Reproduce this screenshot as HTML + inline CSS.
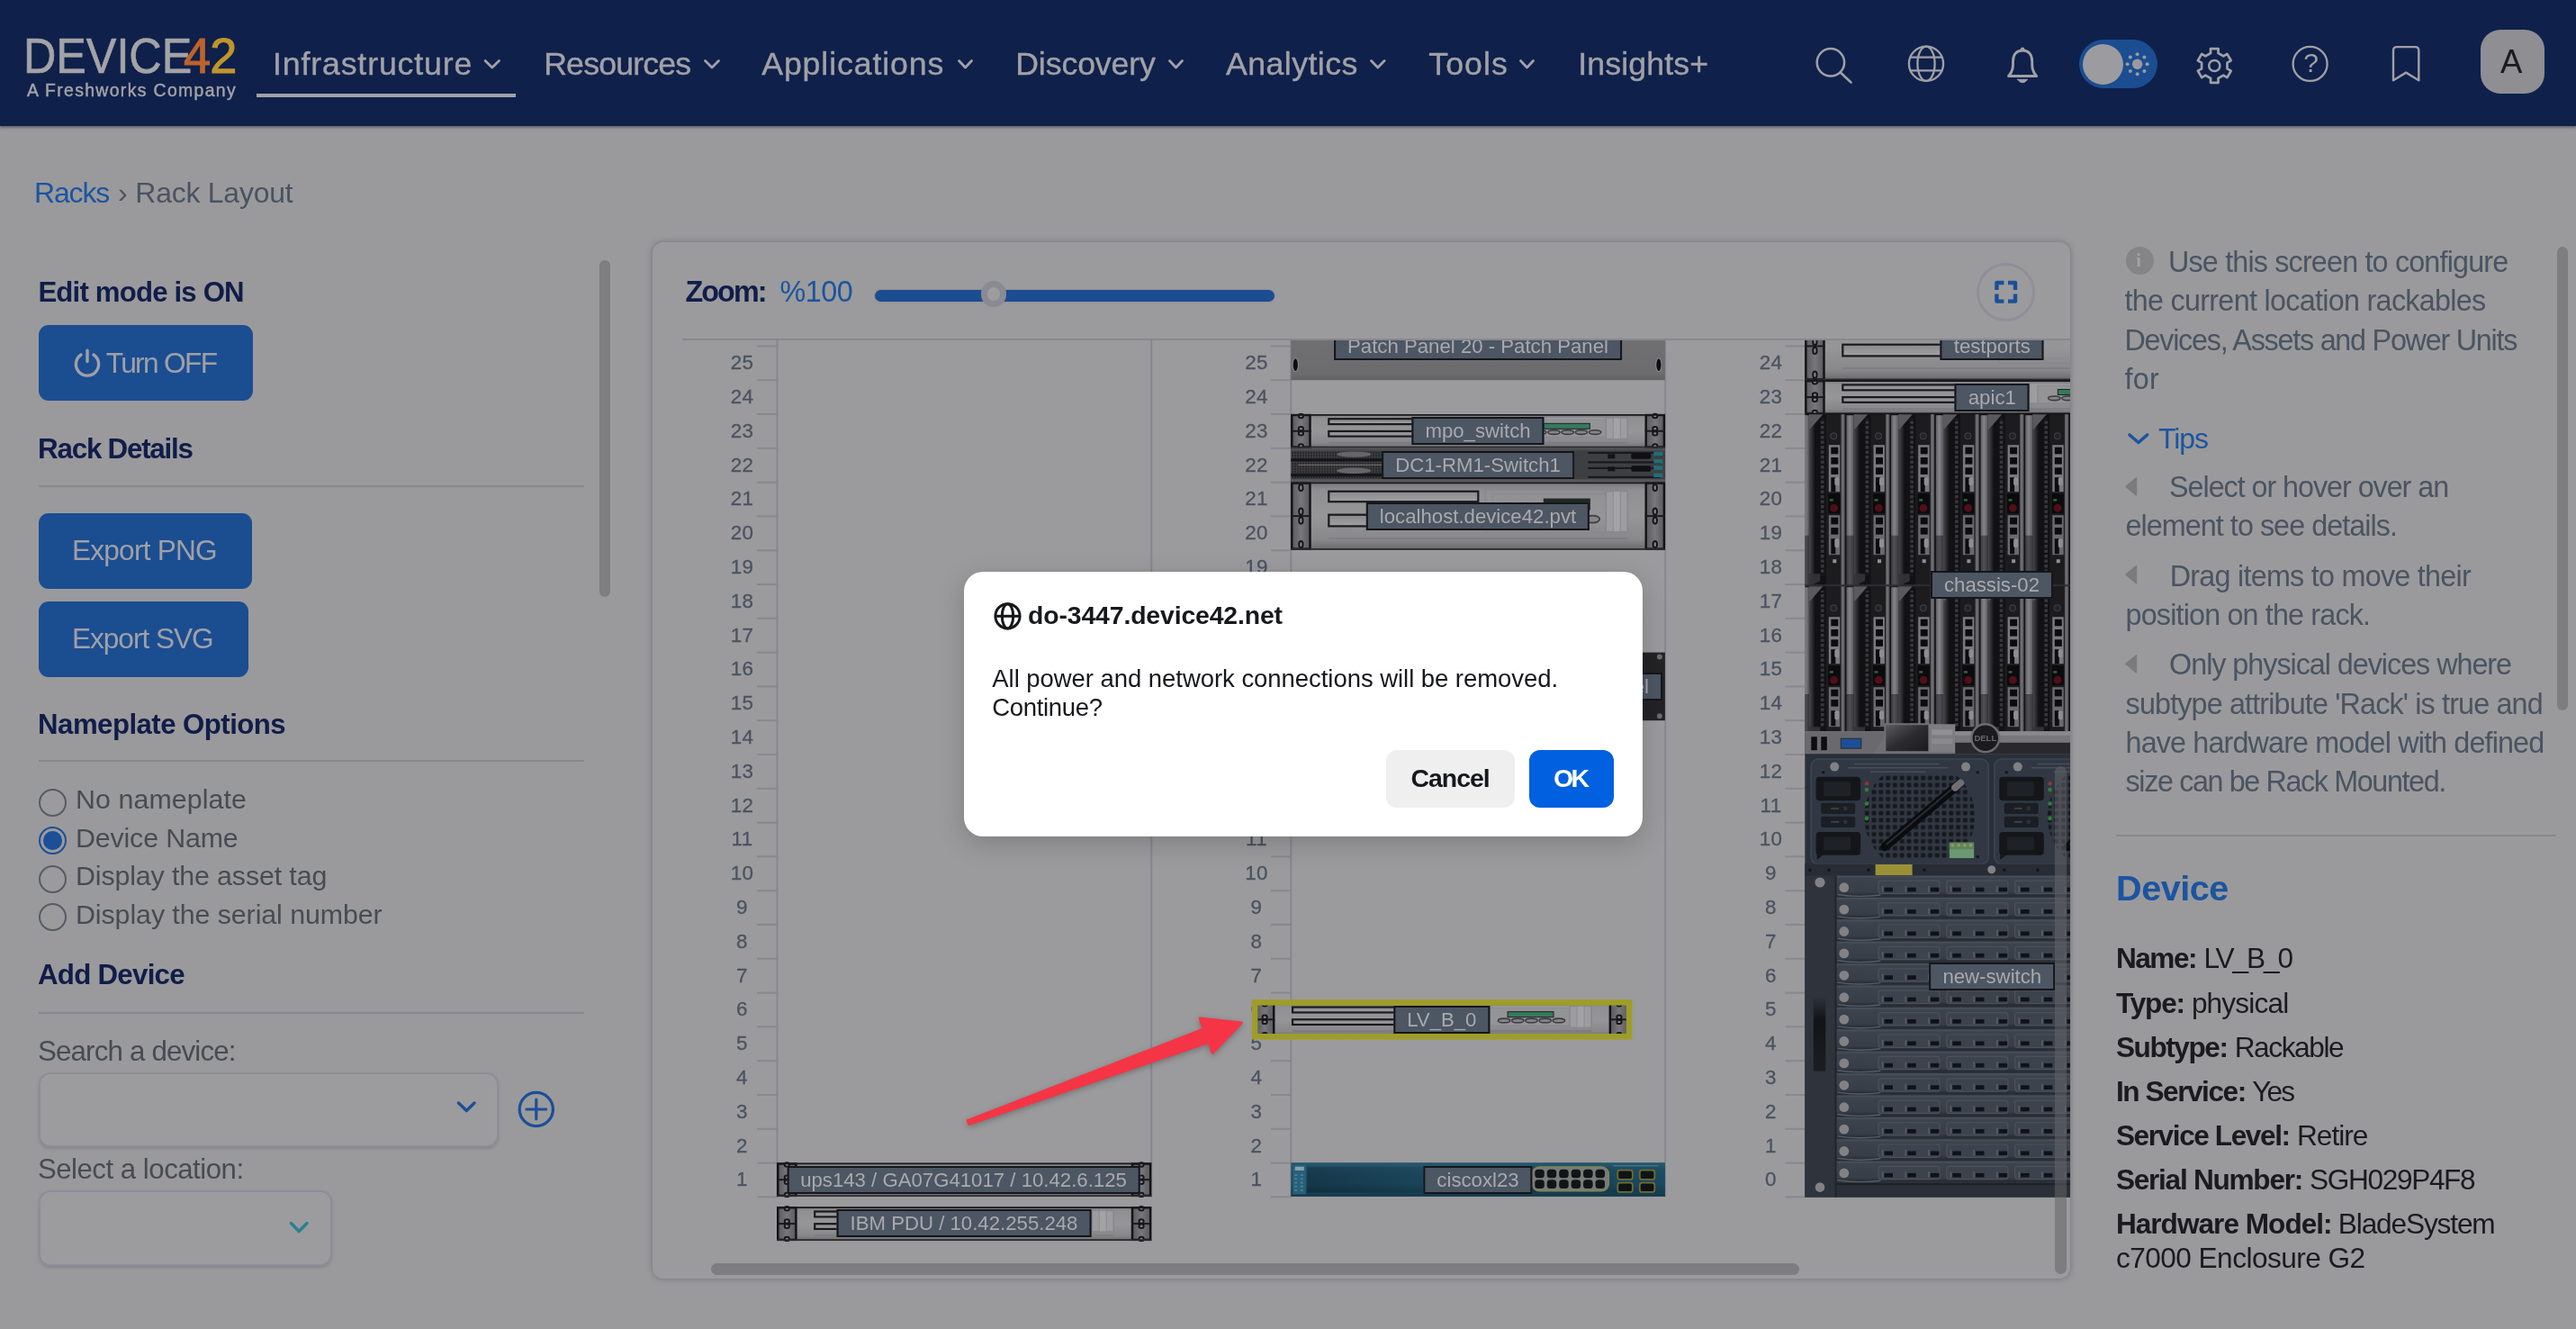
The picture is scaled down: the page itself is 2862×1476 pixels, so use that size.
<!DOCTYPE html>
<html lang="en"><head><meta charset="utf-8"><title>Rack Layout - Device42</title>
<style>
html,body{margin:0;padding:0;overflow:hidden;}
body{width:2862px;height:1476px;overflow:hidden;background:#9a9a9c;font-family:"Liberation Sans",sans-serif;position:relative;}
#root{position:absolute;left:0;top:0;width:2862px;height:1476px;overflow:hidden;will-change:transform;}
.t{position:absolute;white-space:nowrap;line-height:1em;}
.abs{position:absolute;}
svg{position:absolute;overflow:visible;}
.fw{-webkit-text-stroke:.45px #a3a3a7}
.nv{-webkit-text-stroke:.4px #a1a1a6}
.num{-webkit-text-stroke:.3px}

.lbl{position:absolute;height:31px;box-sizing:border-box;border:2px solid #14161a;background:#4d5663;color:#a9a9ad;font-size:22.2px;line-height:28px;padding:0 13px;transform:translateX(-50%);white-space:nowrap;}
.num{position:absolute;width:40px;text-align:center;font-size:22.4px;line-height:22px;letter-spacing:.3px;color:#4a5361;}

</style></head><body>
<div id="root">
<div class="abs" style="left:0;top:0;width:2862px;height:140px;background:#0f204b;box-shadow:0 1.5px 2.5px rgba(55,55,70,.5)"></div>
<div class="abs" id="logo" style="left:26.2px;top:34.6px;font-size:55.5px;line-height:1em;white-space:nowrap;color:#a3a3a7;transform-origin:0 0;transform:scaleX(.906);-webkit-text-stroke:.7px #a3a3a7">DEVICE</div>
<div class="abs" style="left:204.3px;top:34.6px;font-size:55.5px;line-height:1em;white-space:nowrap;transform-origin:0 0;transform:scaleX(.975);letter-spacing:-1px"><span style="color:#bd632c;-webkit-text-stroke:1.1px #bd632c">4</span><span style="color:#c0952a;-webkit-text-stroke:1.1px #c0952a">2</span></div>
<svg style="left:0;top:0" width="1" height="1"><polyline points="539.1,67.5 546.8,75 554.5,67.5" fill="none" stroke="#a1a1a6" stroke-width="2.8" stroke-linecap="round" stroke-linejoin="round"/></svg>
<svg style="left:0;top:0" width="1" height="1"><polyline points="783.5,67.5 791.0,75 798.5,67.5" fill="none" stroke="#a1a1a6" stroke-width="2.8" stroke-linecap="round" stroke-linejoin="round"/></svg>
<svg style="left:0;top:0" width="1" height="1"><polyline points="1065.5,67.5 1072.5,75 1079.5,67.5" fill="none" stroke="#a1a1a6" stroke-width="2.8" stroke-linecap="round" stroke-linejoin="round"/></svg>
<svg style="left:0;top:0" width="1" height="1"><polyline points="1299.5,67.5 1306.5,75 1313.5,67.5" fill="none" stroke="#a1a1a6" stroke-width="2.8" stroke-linecap="round" stroke-linejoin="round"/></svg>
<svg style="left:0;top:0" width="1" height="1"><polyline points="1523.5,67.5 1530.8,75 1538.1,67.5" fill="none" stroke="#a1a1a6" stroke-width="2.8" stroke-linecap="round" stroke-linejoin="round"/></svg>
<svg style="left:0;top:0" width="1" height="1"><polyline points="1689.5,67.5 1696.5,75 1703.5,67.5" fill="none" stroke="#a1a1a6" stroke-width="2.8" stroke-linecap="round" stroke-linejoin="round"/></svg>
<div class="abs" style="left:285px;top:104px;width:288px;height:4px;background:#a3a3a7"></div>
<svg style="left:0;top:0" width="1" height="1" fill="none" stroke="#a0a0a5" stroke-width="2.7" stroke-linecap="round" stroke-linejoin="round">
<!-- search -->
<circle cx="2033.900" cy="69.3" r="15.2" stroke-width="2.5"/><line x1="2045.3" y1="81" x2="2056.500" y2="91.5" stroke-width="2.6"/>
<!-- globe -->
<g stroke-width="2.3"><circle cx="2140" cy="70.8" r="19.1"/><ellipse cx="2140" cy="70.8" rx="9.6" ry="19.1"/><line x1="2123" y1="63.6" x2="2157" y2="63.6"/><line x1="2123" y1="78.4" x2="2157" y2="78.400"/></g>
<!-- bell -->
<path d="M2231.500 84.5 C2237 79 2236.500 73 2236.500 68 C2236.5 60.5 2240.5 56 2247.1 56 C2253.7 56 2257.700 60.5 2257.7 68 C2257.7 73 2257.2 79 2262.700 84.5 Z" stroke-width="2.9"/><circle cx="2247.1" cy="54.800" r="1.6" fill="#a0a0a5" stroke-width="1.5"/><path d="M2241.600 88.3 H2252.600 Q2247.1 95.500 2241.6 88.3 Z" fill="#a0a0a5" stroke-width="1"/>
<!-- gear -->
<circle cx="2460.300" cy="73" r="6.1" stroke-width="2.5"/>
<path d="M2456.1 59.0 L2456.0 54.2 L2464.6 54.2 L2464.5 59.0 L2470.3 62.4 L2474.4 59.9 L2478.7 67.3 L2474.5 69.7 L2474.5 76.3 L2478.7 78.7 L2474.4 86.1 L2470.3 83.6 L2464.5 87.0 L2464.6 91.8 L2456.0 91.8 L2456.1 87.0 L2450.3 83.6 L2446.2 86.1 L2441.9 78.7 L2446.1 76.3 L2446.1 69.7 L2441.9 67.3 L2446.2 59.9 L2450.3 62.4 Z"/>
<!-- help -->
<circle cx="2566.600" cy="70.9" r="19" stroke-width="2.3"/>
<!-- bookmark -->
<path d="M2663 52.100 H2683.300 Q2687.300 52.1 2687.300 56.1 V89.2 L2673.15 80.6 L2659 89.2 V56.1 Q2659 52.1 2663 52.1 Z" stroke-width="2.4"/>
</svg>
<span class="t" style="left:2559.2px;top:54.500px;font-size:30px;color:#a0a0a5;font-weight:400">?</span>
<div class="abs" style="left:2310px;top:44px;width:87px;height:54px;border-radius:27px;background:#1b4d91"></div>
<div class="abs" style="left:2314px;top:48.5px;width:45px;height:45px;border-radius:50%;background:#9c9ca0"></div>
<svg style="left:0;top:0" width="1" height="1" fill="#9a9a9f"><circle cx="2374.600" cy="71.3" r="5.7"/><circle cx="2385.6" cy="71.3" r="2"/><circle cx="2382.4" cy="79.1" r="2"/><circle cx="2374.6" cy="82.3" r="2"/><circle cx="2366.8" cy="79.1" r="2"/><circle cx="2363.6" cy="71.3" r="2"/><circle cx="2366.8" cy="63.5" r="2"/><circle cx="2374.6" cy="60.3" r="2"/><circle cx="2382.4" cy="63.5" r="2"/></svg>
<div class="abs" style="left:2756px;top:32.800px;width:71px;height:71px;border-radius:22px;background:#8e8e93"></div>
<div class="abs" style="left:43px;top:361px;width:238px;height:84px;border-radius:11px;background:#1b4d91"></div>
<svg style="left:0;top:0" width="1" height="1" fill="none" stroke="#9fa0a6" stroke-width="3.4" stroke-linecap="round"><path d="M 90 394 A 12.6 12.6 0 1 0 104 394"/><line x1="97" y1="389.200" x2="97" y2="401.500"/></svg>
<div class="abs" style="left:43px;top:539px;width:606px;height:2px;background:#878791"></div>
<div class="abs" style="left:43px;top:570px;width:237px;height:84px;border-radius:11px;background:#1b4d91"></div>
<div class="abs" style="left:43px;top:668px;width:233px;height:84px;border-radius:11px;background:#1b4d91"></div>
<div class="abs" style="left:665.5px;top:289px;width:12.5px;height:374px;border-radius:6px;background:#7e7e80"></div>
<div class="abs" style="left:43px;top:844px;width:606px;height:2px;background:#878791"></div>
<div class="abs" style="left:43px;top:875.5px;width:31px;height:31px;box-sizing:border-box;border-radius:50%;border:2px solid #565b65;background:#9b9b9d"></div>
<div class="abs" style="left:43px;top:918.0px;width:31px;height:31px;box-sizing:border-box;border-radius:50%;border:2.5px solid #1c4f96;background:#9a9a9c"></div>
<div class="abs" style="left:48.3px;top:923.3px;width:20.400px;height:20.4px;border-radius:50%;background:#1c4f96"></div>
<div class="abs" style="left:43px;top:960.5px;width:31px;height:31px;box-sizing:border-box;border-radius:50%;border:2px solid #565b65;background:#9b9b9d"></div>
<div class="abs" style="left:43px;top:1003.0px;width:31px;height:31px;box-sizing:border-box;border-radius:50%;border:2px solid #565b65;background:#9b9b9d"></div>
<div class="abs" style="left:43px;top:1124.2px;width:606px;height:2px;background:#878791"></div>
<div class="abs" style="left:43px;top:1191px;width:510.5px;height:83px;box-sizing:border-box;border-radius:13px;border:2px solid #8e8e99;background:#9c9c9e;box-shadow:0 2px 3px rgba(80,80,90,.25)"></div>
<svg style="left:0;top:0" width="1" height="1" fill="none" stroke-linecap="round" stroke-linejoin="round" stroke-width="3.4"><polyline points="509.5,1225 518.3,1233.5 527,1225" stroke="#1c4f96"/><circle cx="595.800" cy="1232" r="18.600" stroke="#1c4f96" stroke-width="3.2"/><path d="M585 1232 H606.600 M595.800 1221.2 V1242.800" stroke="#1c4f96" stroke-width="3.2"/></svg>
<div class="abs" style="left:43px;top:1322px;width:326px;height:84px;box-sizing:border-box;border-radius:13px;border:2px solid #8e8e99;background:#9c9c9e;box-shadow:0 2px 3px rgba(80,80,90,.25)"></div>
<svg style="left:0;top:0" width="1" height="1" fill="none" stroke-linecap="round" stroke-linejoin="round" stroke-width="3.4"><polyline points="323.5,1358.5 332.2,1367.5 341,1358.5" stroke="#2a7f92"/></svg>
<div class="abs" style="left:724.5px;top:268.500px;width:1575.5px;height:1151.5px;border-radius:12px;background:#9b9b9d;box-shadow:0 0 6px rgba(70,70,85,.5)"></div>
<div class="abs" style="left:971.7px;top:321.500px;width:444.5px;height:13.7px;border-radius:7px;background:#1b4d91;box-shadow:0 0 2px rgba(120,120,140,.8)"></div>
<div class="abs" style="left:1089.5px;top:312.3px;width:28.4px;height:28.4px;box-sizing:border-box;border-radius:50%;border:7.2px solid #8a8a92;background:#9d9d9f"></div>
<div class="abs" style="left:2196px;top:291.500px;width:65px;height:65px;box-sizing:border-box;border-radius:50%;border:3px solid #8f8f99"></div>
<svg style="left:0;top:0" width="1" height="1" fill="none" stroke="#1c4f96" stroke-width="4.4" stroke-linejoin="round"><path d="M2218.400 322 V314 H2226.400 M2231 314 H2239 V322 M2239 326.600 V334.600 H2231 M2226.4 334.6 H2218.4 V326.6"/></svg>
<div class="abs" style="left:758px;top:376px;width:1542px;height:2px;background:#878791"></div>
<div class="abs" style="left:0;top:0;width:2862px;height:1476px;clip-path:inset(378px 562px 74px 758px)">
<div class="num" style="left:804.5px;top:392.2px">25</div>
<div class="num" style="left:804.5px;top:430.0px">24</div>
<div class="num" style="left:804.5px;top:467.8px">23</div>
<div class="num" style="left:804.5px;top:505.6px">22</div>
<div class="num" style="left:804.5px;top:543.4px">21</div>
<div class="num" style="left:804.5px;top:581.2px">20</div>
<div class="num" style="left:804.5px;top:619.0px">19</div>
<div class="num" style="left:804.5px;top:656.8px">18</div>
<div class="num" style="left:804.5px;top:694.6px">17</div>
<div class="num" style="left:804.5px;top:732.4px">16</div>
<div class="num" style="left:804.5px;top:770.2px">15</div>
<div class="num" style="left:804.5px;top:808.0px">14</div>
<div class="num" style="left:804.5px;top:845.8px">13</div>
<div class="num" style="left:804.5px;top:883.6px">12</div>
<div class="num" style="left:804.5px;top:921.4px">11</div>
<div class="num" style="left:804.5px;top:959.2px">10</div>
<div class="num" style="left:804.5px;top:997.0px">9</div>
<div class="num" style="left:804.5px;top:1034.8px">8</div>
<div class="num" style="left:804.5px;top:1072.6px">7</div>
<div class="num" style="left:804.5px;top:1110.4px">6</div>
<div class="num" style="left:804.5px;top:1148.2px">5</div>
<div class="num" style="left:804.5px;top:1186.0px">4</div>
<div class="num" style="left:804.5px;top:1223.8px">3</div>
<div class="num" style="left:804.5px;top:1261.6px">2</div>
<div class="num" style="left:804.5px;top:1299.4px">1</div>
<div class="num" style="left:1376px;top:392.2px">25</div>
<div class="num" style="left:1376px;top:430.0px">24</div>
<div class="num" style="left:1376px;top:467.8px">23</div>
<div class="num" style="left:1376px;top:505.6px">22</div>
<div class="num" style="left:1376px;top:543.4px">21</div>
<div class="num" style="left:1376px;top:581.2px">20</div>
<div class="num" style="left:1376px;top:619.0px">19</div>
<div class="num" style="left:1376px;top:656.8px">18</div>
<div class="num" style="left:1376px;top:694.6px">17</div>
<div class="num" style="left:1376px;top:732.4px">16</div>
<div class="num" style="left:1376px;top:770.2px">15</div>
<div class="num" style="left:1376px;top:808.0px">14</div>
<div class="num" style="left:1376px;top:845.8px">13</div>
<div class="num" style="left:1376px;top:883.6px">12</div>
<div class="num" style="left:1376px;top:921.4px">11</div>
<div class="num" style="left:1376px;top:959.2px">10</div>
<div class="num" style="left:1376px;top:997.0px">9</div>
<div class="num" style="left:1376px;top:1034.8px">8</div>
<div class="num" style="left:1376px;top:1072.6px">7</div>
<div class="num" style="left:1376px;top:1110.4px">6</div>
<div class="num" style="left:1376px;top:1148.2px">5</div>
<div class="num" style="left:1376px;top:1186.0px">4</div>
<div class="num" style="left:1376px;top:1223.8px">3</div>
<div class="num" style="left:1376px;top:1261.6px">2</div>
<div class="num" style="left:1376px;top:1299.4px">1</div>
<div class="num" style="left:1947.5px;top:392.2px">24</div>
<div class="num" style="left:1947.5px;top:430.0px">23</div>
<div class="num" style="left:1947.5px;top:467.8px">22</div>
<div class="num" style="left:1947.5px;top:505.6px">21</div>
<div class="num" style="left:1947.5px;top:543.4px">20</div>
<div class="num" style="left:1947.5px;top:581.2px">19</div>
<div class="num" style="left:1947.5px;top:619.0px">18</div>
<div class="num" style="left:1947.5px;top:656.8px">17</div>
<div class="num" style="left:1947.5px;top:694.6px">16</div>
<div class="num" style="left:1947.5px;top:732.4px">15</div>
<div class="num" style="left:1947.5px;top:770.2px">14</div>
<div class="num" style="left:1947.5px;top:808.0px">13</div>
<div class="num" style="left:1947.5px;top:845.8px">12</div>
<div class="num" style="left:1947.5px;top:883.6px">11</div>
<div class="num" style="left:1947.5px;top:921.4px">10</div>
<div class="num" style="left:1947.5px;top:959.2px">9</div>
<div class="num" style="left:1947.5px;top:997.0px">8</div>
<div class="num" style="left:1947.5px;top:1034.8px">7</div>
<div class="num" style="left:1947.5px;top:1072.6px">6</div>
<div class="num" style="left:1947.5px;top:1110.4px">5</div>
<div class="num" style="left:1947.5px;top:1148.2px">4</div>
<div class="num" style="left:1947.5px;top:1186.0px">3</div>
<div class="num" style="left:1947.5px;top:1223.8px">2</div>
<div class="num" style="left:1947.5px;top:1261.6px">1</div>
<div class="num" style="left:1947.5px;top:1299.4px">0</div>
<svg style="left:0;top:0" width="2862" height="1476" viewBox="0 0 2862 1476"><defs>
<linearGradient id="gsrv" x1="0" y1="0" x2="0" y2="1"><stop offset="0" stop-color="#77777a"/><stop offset=".12" stop-color="#909093"/><stop offset=".5" stop-color="#969699"/><stop offset=".85" stop-color="#88888b"/><stop offset="1" stop-color="#6a6a6d"/></linearGradient>
<linearGradient id="grail" x1="0" y1="0" x2="1" y2="0"><stop offset="0" stop-color="#5a5a5d"/><stop offset=".5" stop-color="#78787c"/><stop offset="1" stop-color="#5a5a5d"/></linearGradient>
<linearGradient id="gslot" x1="0" y1="0" x2="0" y2="1"><stop offset="0" stop-color="#8a8a8d"/><stop offset="1" stop-color="#a0a0a3"/></linearGradient>
<linearGradient id="gteal" x1="0" y1="0" x2="1" y2="0"><stop offset="0" stop-color="#15384a"/><stop offset=".35" stop-color="#1a465b"/><stop offset=".6" stop-color="#184156"/><stop offset="1" stop-color="#1a4a60"/></linearGradient>
<linearGradient id="gteal2" x1="0" y1="0" x2="0" y2="1"><stop offset="0" stop-color="rgba(255,255,255,.06)"/><stop offset=".6" stop-color="rgba(0,0,0,0)"/><stop offset="1" stop-color="rgba(0,0,0,.25)"/></linearGradient>
<linearGradient id="gbar" x1="0" y1="0" x2="1" y2="0"><stop offset="0" stop-color="#5d5d61"/><stop offset=".45" stop-color="#858589"/><stop offset="1" stop-color="#58585c"/></linearGradient>
<linearGradient id="gbar2" x1="0" y1="0" x2="1" y2="0"><stop offset="0" stop-color="#3c3c40"/><stop offset=".45" stop-color="#515155"/><stop offset="1" stop-color="#38383c"/></linearGradient>
<linearGradient id="gedge" x1="0" y1="0" x2="1" y2="0"><stop offset="0" stop-color="#4a4a4e"/><stop offset="1" stop-color="#0f0f12"/></linearGradient>
<linearGradient id="glcd" x1="0" y1="0" x2="1" y2="1"><stop offset="0" stop-color="#5e5e62"/><stop offset=".5" stop-color="#2c2c30"/><stop offset="1" stop-color="#1a1a1d"/></linearGradient>
<linearGradient id="gcard" x1="0" y1="0" x2="0" y2="1"><stop offset="0" stop-color="#4d535d"/><stop offset=".12" stop-color="#3d434d"/><stop offset=".75" stop-color="#383d47"/><stop offset=".9" stop-color="#282c34"/><stop offset="1" stop-color="#2e323b"/></linearGradient>
<linearGradient id="ghandle" x1="0" y1="0" x2="0" y2="1"><stop offset="0" stop-color="#2d323b"/><stop offset=".3" stop-color="#121417"/><stop offset="1" stop-color="#1b1e23"/></linearGradient>
<linearGradient id="gpp" x1="0" y1="0" x2="0" y2="1"><stop offset="0" stop-color="#727275"/><stop offset=".9" stop-color="#6c6c6f"/><stop offset="1" stop-color="#626265"/></linearGradient>
<pattern id="pdash" x="0" y="0" width="4" height="5.5" patternUnits="userSpaceOnUse"><rect x="0" y="0" width="4" height="3.4" fill="#38383c"/></pattern>
<pattern id="pmesh" x="0" y="0" width="3" height="3" patternUnits="userSpaceOnUse"><rect width="3" height="3" fill="#2a2a2d"/><rect width="1" height="3" fill="#3f3f43"/><rect width="3" height="1" fill="#3a3a3e"/></pattern>
<pattern id="pgrill" x="2070.3" y="844.6" width="7.8" height="7.8" patternUnits="userSpaceOnUse"><rect x="1.4" y="1.4" width="5" height="5" rx="1" fill="#16181d"/></pattern>
<clipPath id="cfan1"><circle cx="2132.7" cy="907" r="61.5"/></clipPath>
<clipPath id="cfan2"><circle cx="2336.3" cy="907" r="61.5"/></clipPath>
<clipPath id="cfr"><rect x="2000" y="860.5" width="400" height="93"/></clipPath>
<clipPath id="crack"><rect x="758" y="378" width="1542" height="1024"/></clipPath>
</defs><g clip-path="url(#crack)"><line x1="841" y1="384.4" x2="863.5" y2="384.4" stroke="#878791" stroke-width="2"/><line x1="841" y1="422.2" x2="863.5" y2="422.2" stroke="#878791" stroke-width="2"/><line x1="841" y1="460.0" x2="863.5" y2="460.0" stroke="#878791" stroke-width="2"/><line x1="841" y1="497.8" x2="863.5" y2="497.8" stroke="#878791" stroke-width="2"/><line x1="841" y1="535.6" x2="863.5" y2="535.6" stroke="#878791" stroke-width="2"/><line x1="841" y1="573.4" x2="863.5" y2="573.4" stroke="#878791" stroke-width="2"/><line x1="841" y1="611.2" x2="863.5" y2="611.2" stroke="#878791" stroke-width="2"/><line x1="841" y1="649.0" x2="863.5" y2="649.0" stroke="#878791" stroke-width="2"/><line x1="841" y1="686.8" x2="863.5" y2="686.8" stroke="#878791" stroke-width="2"/><line x1="841" y1="724.6" x2="863.5" y2="724.6" stroke="#878791" stroke-width="2"/><line x1="841" y1="762.4" x2="863.5" y2="762.4" stroke="#878791" stroke-width="2"/><line x1="841" y1="800.2" x2="863.5" y2="800.2" stroke="#878791" stroke-width="2"/><line x1="841" y1="838.0" x2="863.5" y2="838.0" stroke="#878791" stroke-width="2"/><line x1="841" y1="875.8" x2="863.5" y2="875.8" stroke="#878791" stroke-width="2"/><line x1="841" y1="913.6" x2="863.5" y2="913.6" stroke="#878791" stroke-width="2"/><line x1="841" y1="951.4" x2="863.5" y2="951.4" stroke="#878791" stroke-width="2"/><line x1="841" y1="989.2" x2="863.5" y2="989.2" stroke="#878791" stroke-width="2"/><line x1="841" y1="1027.0" x2="863.5" y2="1027.0" stroke="#878791" stroke-width="2"/><line x1="841" y1="1064.8" x2="863.5" y2="1064.8" stroke="#878791" stroke-width="2"/><line x1="841" y1="1102.6" x2="863.5" y2="1102.6" stroke="#878791" stroke-width="2"/><line x1="841" y1="1140.4" x2="863.5" y2="1140.4" stroke="#878791" stroke-width="2"/><line x1="841" y1="1178.2" x2="863.5" y2="1178.2" stroke="#878791" stroke-width="2"/><line x1="841" y1="1216.0" x2="863.5" y2="1216.0" stroke="#878791" stroke-width="2"/><line x1="841" y1="1253.8" x2="863.5" y2="1253.8" stroke="#878791" stroke-width="2"/><line x1="841" y1="1291.6" x2="863.5" y2="1291.6" stroke="#878791" stroke-width="2"/><line x1="841" y1="1329.4" x2="863.5" y2="1329.4" stroke="#878791" stroke-width="2"/><line x1="1412" y1="384.4" x2="1434.3" y2="384.4" stroke="#878791" stroke-width="2"/><line x1="1412" y1="422.2" x2="1434.3" y2="422.2" stroke="#878791" stroke-width="2"/><line x1="1412" y1="460.0" x2="1434.3" y2="460.0" stroke="#878791" stroke-width="2"/><line x1="1412" y1="497.8" x2="1434.3" y2="497.8" stroke="#878791" stroke-width="2"/><line x1="1412" y1="535.6" x2="1434.3" y2="535.6" stroke="#878791" stroke-width="2"/><line x1="1412" y1="573.4" x2="1434.3" y2="573.4" stroke="#878791" stroke-width="2"/><line x1="1412" y1="611.2" x2="1434.3" y2="611.2" stroke="#878791" stroke-width="2"/><line x1="1412" y1="649.0" x2="1434.3" y2="649.0" stroke="#878791" stroke-width="2"/><line x1="1412" y1="686.8" x2="1434.3" y2="686.8" stroke="#878791" stroke-width="2"/><line x1="1412" y1="724.6" x2="1434.3" y2="724.6" stroke="#878791" stroke-width="2"/><line x1="1412" y1="762.4" x2="1434.3" y2="762.4" stroke="#878791" stroke-width="2"/><line x1="1412" y1="800.2" x2="1434.3" y2="800.2" stroke="#878791" stroke-width="2"/><line x1="1412" y1="838.0" x2="1434.3" y2="838.0" stroke="#878791" stroke-width="2"/><line x1="1412" y1="875.8" x2="1434.3" y2="875.8" stroke="#878791" stroke-width="2"/><line x1="1412" y1="913.6" x2="1434.3" y2="913.6" stroke="#878791" stroke-width="2"/><line x1="1412" y1="951.4" x2="1434.3" y2="951.4" stroke="#878791" stroke-width="2"/><line x1="1412" y1="989.2" x2="1434.3" y2="989.2" stroke="#878791" stroke-width="2"/><line x1="1412" y1="1027.0" x2="1434.3" y2="1027.0" stroke="#878791" stroke-width="2"/><line x1="1412" y1="1064.8" x2="1434.3" y2="1064.8" stroke="#878791" stroke-width="2"/><line x1="1412" y1="1102.6" x2="1434.3" y2="1102.6" stroke="#878791" stroke-width="2"/><line x1="1412" y1="1140.4" x2="1434.3" y2="1140.4" stroke="#878791" stroke-width="2"/><line x1="1412" y1="1178.2" x2="1434.3" y2="1178.2" stroke="#878791" stroke-width="2"/><line x1="1412" y1="1216.0" x2="1434.3" y2="1216.0" stroke="#878791" stroke-width="2"/><line x1="1412" y1="1253.8" x2="1434.3" y2="1253.8" stroke="#878791" stroke-width="2"/><line x1="1412" y1="1291.6" x2="1434.3" y2="1291.6" stroke="#878791" stroke-width="2"/><line x1="1412" y1="1329.4" x2="1434.3" y2="1329.4" stroke="#878791" stroke-width="2"/><line x1="1983.4" y1="384.4" x2="2005.3" y2="384.4" stroke="#878791" stroke-width="2"/><line x1="1983.4" y1="422.2" x2="2005.3" y2="422.2" stroke="#878791" stroke-width="2"/><line x1="1983.4" y1="460.0" x2="2005.3" y2="460.0" stroke="#878791" stroke-width="2"/><line x1="1983.4" y1="497.8" x2="2005.3" y2="497.8" stroke="#878791" stroke-width="2"/><line x1="1983.4" y1="535.6" x2="2005.3" y2="535.6" stroke="#878791" stroke-width="2"/><line x1="1983.4" y1="573.4" x2="2005.3" y2="573.4" stroke="#878791" stroke-width="2"/><line x1="1983.4" y1="611.2" x2="2005.3" y2="611.2" stroke="#878791" stroke-width="2"/><line x1="1983.4" y1="649.0" x2="2005.3" y2="649.0" stroke="#878791" stroke-width="2"/><line x1="1983.4" y1="686.8" x2="2005.3" y2="686.8" stroke="#878791" stroke-width="2"/><line x1="1983.4" y1="724.6" x2="2005.3" y2="724.6" stroke="#878791" stroke-width="2"/><line x1="1983.4" y1="762.4" x2="2005.3" y2="762.4" stroke="#878791" stroke-width="2"/><line x1="1983.4" y1="800.2" x2="2005.3" y2="800.2" stroke="#878791" stroke-width="2"/><line x1="1983.4" y1="838.0" x2="2005.3" y2="838.0" stroke="#878791" stroke-width="2"/><line x1="1983.4" y1="875.8" x2="2005.3" y2="875.8" stroke="#878791" stroke-width="2"/><line x1="1983.4" y1="913.6" x2="2005.3" y2="913.6" stroke="#878791" stroke-width="2"/><line x1="1983.4" y1="951.4" x2="2005.3" y2="951.4" stroke="#878791" stroke-width="2"/><line x1="1983.4" y1="989.2" x2="2005.3" y2="989.2" stroke="#878791" stroke-width="2"/><line x1="1983.4" y1="1027.0" x2="2005.3" y2="1027.0" stroke="#878791" stroke-width="2"/><line x1="1983.4" y1="1064.8" x2="2005.3" y2="1064.8" stroke="#878791" stroke-width="2"/><line x1="1983.4" y1="1102.6" x2="2005.3" y2="1102.6" stroke="#878791" stroke-width="2"/><line x1="1983.4" y1="1140.4" x2="2005.3" y2="1140.4" stroke="#878791" stroke-width="2"/><line x1="1983.4" y1="1178.2" x2="2005.3" y2="1178.2" stroke="#878791" stroke-width="2"/><line x1="1983.4" y1="1216.0" x2="2005.3" y2="1216.0" stroke="#878791" stroke-width="2"/><line x1="1983.4" y1="1253.8" x2="2005.3" y2="1253.8" stroke="#878791" stroke-width="2"/><line x1="1983.4" y1="1291.6" x2="2005.3" y2="1291.6" stroke="#878791" stroke-width="2"/><line x1="1983.4" y1="1329.4" x2="2005.3" y2="1329.4" stroke="#878791" stroke-width="2"/><line x1="863.5" y1="378" x2="863.5" y2="1329.4" stroke="#878791" stroke-width="2"/><line x1="1279.2" y1="378" x2="1279.2" y2="1329.4" stroke="#878791" stroke-width="2"/><line x1="1434.3" y1="378" x2="1434.3" y2="1329.4" stroke="#878791" stroke-width="2"/><line x1="1850.2" y1="378" x2="1850.2" y2="1329.4" stroke="#878791" stroke-width="2"/><rect x="1434.3" y="346.59999999999997" width="415.6" height="75.6" fill="url(#gpp)"/><ellipse cx="1439.3" cy="405.18999999999994" rx="3.2" ry="7.500" fill="#0e0e11" stroke="#88888b" stroke-width="1.2"/><ellipse cx="1842.9" cy="405.18999999999994" rx="3.2" ry="7.500" fill="#0e0e11" stroke="#88888b" stroke-width="1.2"/><rect x="1434.3" y="460.0" width="415.6" height="37.5" fill="url(#gsrv)"/><rect x="1476.3" y="465.2" width="166" height="5.9" fill="url(#gslot)" stroke="#1a1a1d" stroke-width="2.2"/><rect x="1476.3" y="478.9" width="166" height="5.7" fill="url(#gslot)" stroke="#1a1a1d" stroke-width="2.2"/><rect x="1683.7" y="463.4" width="124.6" height="22.0" fill="#9d9da0" stroke="#88888c" stroke-width="1.3"/><rect x="1692.8" y="466.0" width="107" height="19.3" fill="#949497" stroke="#8a8a8e" stroke-width="1"/><rect x="1784.3" y="464.0" width="24" height="23.5" fill="#9d9da0" stroke="#88888c" stroke-width="1.5"/><rect x="1792.3" y="464.0" width="8" height="23.5" fill="#a3a3a6" stroke="#8b8b8f" stroke-width="1"/><rect x="1715.3" y="470.3" width="51" height="6" fill="#357a5c" stroke="#202024" stroke-width="1"/><ellipse cx="1711.3" cy="480.1" rx="6.6" ry="2.3" fill="#85858a" stroke="#3c3c40" stroke-width="1.6"/><ellipse cx="1726.5" cy="480.1" rx="6.6" ry="2.3" fill="#85858a" stroke="#3c3c40" stroke-width="1.6"/><ellipse cx="1741.7" cy="480.1" rx="6.6" ry="2.3" fill="#85858a" stroke="#3c3c40" stroke-width="1.6"/><ellipse cx="1756.8999999999999" cy="480.1" rx="6.6" ry="2.3" fill="#85858a" stroke="#3c3c40" stroke-width="1.6"/><ellipse cx="1772.1" cy="480.1" rx="6.6" ry="2.3" fill="#85858a" stroke="#3c3c40" stroke-width="1.6"/><line x1="1476.3" y1="491.8" x2="1808.3" y2="491.8" stroke="#7c7c80" stroke-width="1.6"/><rect x="1435.3" y="461.0" width="20.2" height="35.5" fill="url(#grail)" stroke="#121215" stroke-width="2.4"/><line x1="1434.3" y1="478.75" x2="1456.5" y2="478.75" stroke="#1a1a1d" stroke-width="2"/><ellipse cx="1445.3999999999999" cy="462.0" rx="2.6" ry="2.2" fill="#85858a" stroke="#17171a" stroke-width="2"/><ellipse cx="1445.3999999999999" cy="476.15" rx="2.6" ry="2.2" fill="#85858a" stroke="#17171a" stroke-width="2"/><ellipse cx="1445.3999999999999" cy="481.35" rx="2.6" ry="2.2" fill="#85858a" stroke="#17171a" stroke-width="2"/><ellipse cx="1445.3999999999999" cy="495.5" rx="2.6" ry="2.2" fill="#85858a" stroke="#17171a" stroke-width="2"/><rect x="1828.7" y="461.0" width="20.2" height="35.5" fill="url(#grail)" stroke="#121215" stroke-width="2.4"/><line x1="1827.7" y1="478.75" x2="1849.9" y2="478.75" stroke="#1a1a1d" stroke-width="2"/><ellipse cx="1838.8" cy="462.0" rx="2.6" ry="2.2" fill="#85858a" stroke="#17171a" stroke-width="2"/><ellipse cx="1838.8" cy="476.15" rx="2.6" ry="2.2" fill="#85858a" stroke="#17171a" stroke-width="2"/><ellipse cx="1838.8" cy="481.35" rx="2.6" ry="2.2" fill="#85858a" stroke="#17171a" stroke-width="2"/><ellipse cx="1838.8" cy="495.5" rx="2.6" ry="2.2" fill="#85858a" stroke="#17171a" stroke-width="2"/><line x1="1434.3" y1="460.8" x2="1849.9" y2="460.8" stroke="#1a1a1d" stroke-width="1.8"/><line x1="1434.3" y1="496.7" x2="1849.9" y2="496.7" stroke="#2a2a2d" stroke-width="1.8"/><rect x="1434.3" y="497.79999999999995" width="415.6" height="37.8" fill="url(#pmesh)"/><rect x="1434.3" y="497.79999999999995" width="415.6" height="3" fill="#4e4e52"/><rect x="1434.3" y="532.0999999999999" width="415.6" height="3.5" fill="#58585c"/><rect x="1434.3" y="509.29999999999995" width="415.6" height="3" fill="#141417"/><rect x="1434.3" y="525.8" width="415.6" height="3.5" fill="#17171a"/><line x1="1442.3" y1="516.3" x2="1539.3" y2="516.3" stroke="#7d766e" stroke-width="1"/><ellipse cx="1504.3" cy="504.59999999999997" rx="19" ry="3.2" fill="#66666a"/><ellipse cx="1504.3" cy="522.8" rx="19" ry="3.2" fill="#66666a"/><rect x="1747.3" y="500.79999999999995" width="102.60000000000002" height="31.299999999999997" fill="#3e3f43"/><rect x="1764.3" y="501.79999999999995" width="80" height="2.2" fill="#1a1a1d"/><rect x="1764.3" y="512.3" width="80" height="2.2" fill="#1a1a1d"/><rect x="1764.3" y="518.8" width="80" height="2.2" fill="#1a1a1d"/><rect x="1764.3" y="528.8" width="80" height="2.2" fill="#1a1a1d"/><rect x="1812.3" y="503.29999999999995" width="22" height="6.5" rx="2" fill="#101013"/><rect x="1786.3" y="504.29999999999995" width="8" height="5" fill="#141417"/><rect x="1812.3" y="517.3" width="22" height="6.5" rx="2" fill="#101013"/><rect x="1786.3" y="518.3" width="8" height="5" fill="#141417"/><rect x="1837.3" y="501.59999999999997" width="10" height="4.5" fill="#1f6f78"/><rect x="1837.3" y="509.99999999999994" width="10" height="4.5" fill="#1f6f78"/><rect x="1837.3" y="517.3" width="10" height="4.5" fill="#1f6f78"/><rect x="1837.3" y="525.5999999999999" width="10" height="4.5" fill="#1f6f78"/><rect x="1434.3" y="535.5999999999999" width="415.6" height="75.0" fill="url(#gsrv)"/><rect x="1476.3" y="545.6999999999999" width="166" height="11.5" fill="url(#gslot)" stroke="#1a1a1d" stroke-width="2.2"/><rect x="1476.3" y="571.6999999999999" width="166" height="12.7" fill="url(#gslot)" stroke="#1a1a1d" stroke-width="2.2"/><rect x="1650.3" y="543.5999999999999" width="158" height="48.0" fill="none" stroke="#88888c" stroke-width="1.3"/><rect x="1658.3" y="548.5999999999999" width="142" height="38.0" fill="none" stroke="#8a8a8e" stroke-width="1"/><rect x="1784.3" y="545.5999999999999" width="24" height="45.0" fill="#9d9da0" stroke="#88888c" stroke-width="1.5"/><rect x="1792.3" y="545.5999999999999" width="8" height="45.0" fill="#a3a3a6" stroke="#8b8b8f" stroke-width="1"/><rect x="1715.3" y="554.0999999999999" width="51" height="12" fill="#1d2a24" stroke="#202024" stroke-width="1"/><ellipse cx="1769.3" cy="576.5999999999999" rx="8" ry="4" fill="#85858a" stroke="#3c3c40" stroke-width="1.6"/><line x1="1476.3" y1="597.9999999999999" x2="1808.3" y2="597.9999999999999" stroke="#7c7c80" stroke-width="1.6"/><rect x="1435.3" y="536.5999999999999" width="20.2" height="73.0" fill="url(#grail)" stroke="#121215" stroke-width="2.4"/><line x1="1434.3" y1="573.0999999999999" x2="1456.5" y2="573.0999999999999" stroke="#1a1a1d" stroke-width="2"/><ellipse cx="1445.3999999999999" cy="541.5999999999999" rx="2.2" ry="3.6" fill="#85858a" stroke="#17171a" stroke-width="2"/><ellipse cx="1445.3999999999999" cy="568.0999999999999" rx="2.2" ry="3.6" fill="#85858a" stroke="#17171a" stroke-width="2"/><ellipse cx="1445.3999999999999" cy="578.0999999999999" rx="2.2" ry="3.6" fill="#85858a" stroke="#17171a" stroke-width="2"/><ellipse cx="1445.3999999999999" cy="604.5999999999999" rx="2.2" ry="3.6" fill="#85858a" stroke="#17171a" stroke-width="2"/><rect x="1828.7" y="536.5999999999999" width="20.2" height="73.0" fill="url(#grail)" stroke="#121215" stroke-width="2.4"/><line x1="1827.7" y1="573.0999999999999" x2="1849.9" y2="573.0999999999999" stroke="#1a1a1d" stroke-width="2"/><ellipse cx="1838.8" cy="541.5999999999999" rx="2.2" ry="3.6" fill="#85858a" stroke="#17171a" stroke-width="2"/><ellipse cx="1838.8" cy="568.0999999999999" rx="2.2" ry="3.6" fill="#85858a" stroke="#17171a" stroke-width="2"/><ellipse cx="1838.8" cy="578.0999999999999" rx="2.2" ry="3.6" fill="#85858a" stroke="#17171a" stroke-width="2"/><ellipse cx="1838.8" cy="604.5999999999999" rx="2.2" ry="3.6" fill="#85858a" stroke="#17171a" stroke-width="2"/><line x1="1434.3" y1="536.3999999999999" x2="1849.9" y2="536.3999999999999" stroke="#1a1a1d" stroke-width="1.8"/><line x1="1434.3" y1="609.8" x2="1849.9" y2="609.8" stroke="#2a2a2d" stroke-width="1.8"/><rect x="1434.3" y="724.5999999999999" width="415.6" height="75.6" fill="#232326"/><circle cx="1439.3" cy="729.5999999999999" r="3" fill="#6c6c70"/><circle cx="1843.9" cy="729.5999999999999" r="3" fill="#6c6c70"/><circle cx="1439.3" cy="795.1999999999999" r="3" fill="#6c6c70"/><circle cx="1843.9" cy="795.1999999999999" r="3" fill="#6c6c70"/><rect x="1434.3" y="1291.2" width="415.6" height="37.7" fill="#1a4d63"/><rect x="1452.3" y="1295.7" width="397.6" height="28.700000000000003" fill="url(#gteal)"/><rect x="1434.3" y="1291.2" width="415.6" height="37.7" fill="url(#gteal2)"/><rect x="1436.3" y="1293.7" width="14.500" height="32.7" fill="#28607a"/><rect x="1438.3" y="1304.2" width="3" height="1.8" fill="#4f8196"/><rect x="1444.8" y="1304.2" width="3" height="1.8" fill="#4f8196"/><rect x="1438.3" y="1308.4" width="3" height="1.8" fill="#4f8196"/><rect x="1444.8" y="1308.4" width="3" height="1.8" fill="#4f8196"/><rect x="1438.3" y="1312.6000000000001" width="3" height="1.8" fill="#4f8196"/><rect x="1444.8" y="1312.6000000000001" width="3" height="1.8" fill="#4f8196"/><rect x="1438.3" y="1316.8" width="3" height="1.8" fill="#4f8196"/><rect x="1444.8" y="1316.8" width="3" height="1.8" fill="#4f8196"/><rect x="1438.3" y="1321.0" width="3" height="1.8" fill="#4f8196"/><rect x="1444.8" y="1321.0" width="3" height="1.8" fill="#4f8196"/><rect x="1438.8" y="1295.7" width="10" height="4.2" fill="#8aa2ad"/><rect x="1702.3" y="1295.9" width="85" height="27" rx="8" fill="#777d79" stroke="#868452" stroke-width="1.4"/><rect x="1705.3" y="1298.7" width="10.500" height="9.6" rx="3.5" fill="#121518"/><rect x="1718.75" y="1298.7" width="10.500" height="9.6" rx="3.5" fill="#121518"/><rect x="1732.2" y="1298.7" width="10.500" height="9.6" rx="3.5" fill="#121518"/><rect x="1745.6499999999999" y="1298.7" width="10.500" height="9.6" rx="3.5" fill="#121518"/><rect x="1759.1" y="1298.7" width="10.500" height="9.6" rx="3.5" fill="#121518"/><rect x="1772.55" y="1298.7" width="10.500" height="9.6" rx="3.5" fill="#121518"/><rect x="1705.3" y="1310.3" width="10.500" height="9.6" rx="3.5" fill="#121518"/><rect x="1718.75" y="1310.3" width="10.500" height="9.6" rx="3.5" fill="#121518"/><rect x="1732.2" y="1310.3" width="10.500" height="9.6" rx="3.5" fill="#121518"/><rect x="1745.6499999999999" y="1310.3" width="10.500" height="9.6" rx="3.5" fill="#121518"/><rect x="1759.1" y="1310.3" width="10.500" height="9.6" rx="3.5" fill="#121518"/><rect x="1772.55" y="1310.3" width="10.500" height="9.6" rx="3.5" fill="#121518"/><rect x="1797.3" y="1299.7" width="16.500" height="10.200" rx="2.500" fill="#101315" stroke="#6f6b30" stroke-width="1.8"/><rect x="1797.3" y="1313.7" width="16.500" height="10.200" rx="2.500" fill="#101315" stroke="#6f6b30" stroke-width="1.8"/><rect x="1821.8" y="1299.7" width="16.500" height="10.200" rx="2.500" fill="#101315" stroke="#6f6b30" stroke-width="1.8"/><rect x="1821.8" y="1313.7" width="16.500" height="10.200" rx="2.500" fill="#101315" stroke="#6f6b30" stroke-width="1.8"/><rect x="1792.3" y="1294.0" width="50" height="1.4" fill="#4f8196" opacity=".7"/><rect x="863.2" y="1291.5" width="416" height="37.4" fill="url(#gsrv)"/><rect x="905.2" y="1296.7" width="166" height="5.9" fill="url(#gslot)" stroke="#1a1a1d" stroke-width="2.2"/><rect x="905.2" y="1310.4" width="166" height="5.7" fill="url(#gslot)" stroke="#1a1a1d" stroke-width="2.2"/><rect x="1112.6000000000001" y="1294.9" width="124.6" height="21.9" fill="#9d9da0" stroke="#88888c" stroke-width="1.3"/><rect x="1121.7" y="1297.5" width="107" height="19.2" fill="#949497" stroke="#8a8a8e" stroke-width="1"/><rect x="1213.2" y="1295.5" width="24" height="23.4" fill="#9d9da0" stroke="#88888c" stroke-width="1.5"/><rect x="1221.2" y="1295.5" width="8" height="23.4" fill="#a3a3a6" stroke="#8b8b8f" stroke-width="1"/><rect x="1144.2" y="1301.8" width="51" height="6" fill="#357a5c" stroke="#202024" stroke-width="1"/><ellipse cx="1140.2" cy="1311.6" rx="6.6" ry="2.3" fill="#85858a" stroke="#3c3c40" stroke-width="1.6"/><ellipse cx="1155.4" cy="1311.6" rx="6.6" ry="2.3" fill="#85858a" stroke="#3c3c40" stroke-width="1.6"/><ellipse cx="1170.6000000000001" cy="1311.6" rx="6.6" ry="2.3" fill="#85858a" stroke="#3c3c40" stroke-width="1.6"/><ellipse cx="1185.8" cy="1311.6" rx="6.6" ry="2.3" fill="#85858a" stroke="#3c3c40" stroke-width="1.6"/><ellipse cx="1201.0" cy="1311.6" rx="6.6" ry="2.3" fill="#85858a" stroke="#3c3c40" stroke-width="1.6"/><line x1="905.2" y1="1323.3" x2="1237.2" y2="1323.3" stroke="#7c7c80" stroke-width="1.6"/><rect x="864.2" y="1292.5" width="20.2" height="35.4" fill="url(#grail)" stroke="#121215" stroke-width="2.4"/><line x1="863.2" y1="1310.2" x2="885.4000000000001" y2="1310.2" stroke="#1a1a1d" stroke-width="2"/><ellipse cx="874.3000000000001" cy="1293.5" rx="2.6" ry="2.2" fill="#85858a" stroke="#17171a" stroke-width="2"/><ellipse cx="874.3000000000001" cy="1307.6000000000001" rx="2.6" ry="2.2" fill="#85858a" stroke="#17171a" stroke-width="2"/><ellipse cx="874.3000000000001" cy="1312.8" rx="2.6" ry="2.2" fill="#85858a" stroke="#17171a" stroke-width="2"/><ellipse cx="874.3000000000001" cy="1326.9" rx="2.6" ry="2.2" fill="#85858a" stroke="#17171a" stroke-width="2"/><rect x="1258.0" y="1292.5" width="20.2" height="35.4" fill="url(#grail)" stroke="#121215" stroke-width="2.4"/><line x1="1257.0" y1="1310.2" x2="1279.2" y2="1310.2" stroke="#1a1a1d" stroke-width="2"/><ellipse cx="1268.1" cy="1293.5" rx="2.6" ry="2.2" fill="#85858a" stroke="#17171a" stroke-width="2"/><ellipse cx="1268.1" cy="1307.6000000000001" rx="2.6" ry="2.2" fill="#85858a" stroke="#17171a" stroke-width="2"/><ellipse cx="1268.1" cy="1312.8" rx="2.6" ry="2.2" fill="#85858a" stroke="#17171a" stroke-width="2"/><ellipse cx="1268.1" cy="1326.9" rx="2.6" ry="2.2" fill="#85858a" stroke="#17171a" stroke-width="2"/><line x1="863.2" y1="1292.3" x2="1279.2" y2="1292.3" stroke="#1a1a1d" stroke-width="1.8"/><line x1="863.2" y1="1328.1000000000001" x2="1279.2" y2="1328.1000000000001" stroke="#2a2a2d" stroke-width="1.8"/><rect x="863.2" y="1340.3" width="416" height="37.6" fill="url(#gsrv)"/><rect x="905.2" y="1345.5" width="166" height="5.9" fill="url(#gslot)" stroke="#1a1a1d" stroke-width="2.2"/><rect x="905.2" y="1359.2" width="166" height="5.7" fill="url(#gslot)" stroke="#1a1a1d" stroke-width="2.2"/><rect x="1112.6000000000001" y="1343.7" width="124.6" height="22.1" fill="#9d9da0" stroke="#88888c" stroke-width="1.3"/><rect x="1121.7" y="1346.3" width="107" height="19.400000000000002" fill="#949497" stroke="#8a8a8e" stroke-width="1"/><rect x="1213.2" y="1344.3" width="24" height="23.6" fill="#9d9da0" stroke="#88888c" stroke-width="1.5"/><rect x="1221.2" y="1344.3" width="8" height="23.6" fill="#a3a3a6" stroke="#8b8b8f" stroke-width="1"/><rect x="1144.2" y="1350.6" width="51" height="6" fill="#357a5c" stroke="#202024" stroke-width="1"/><ellipse cx="1140.2" cy="1360.3999999999999" rx="6.6" ry="2.3" fill="#85858a" stroke="#3c3c40" stroke-width="1.6"/><ellipse cx="1155.4" cy="1360.3999999999999" rx="6.6" ry="2.3" fill="#85858a" stroke="#3c3c40" stroke-width="1.6"/><ellipse cx="1170.6000000000001" cy="1360.3999999999999" rx="6.6" ry="2.3" fill="#85858a" stroke="#3c3c40" stroke-width="1.6"/><ellipse cx="1185.8" cy="1360.3999999999999" rx="6.6" ry="2.3" fill="#85858a" stroke="#3c3c40" stroke-width="1.6"/><ellipse cx="1201.0" cy="1360.3999999999999" rx="6.6" ry="2.3" fill="#85858a" stroke="#3c3c40" stroke-width="1.6"/><line x1="905.2" y1="1372.1" x2="1237.2" y2="1372.1" stroke="#7c7c80" stroke-width="1.6"/><rect x="864.2" y="1341.3" width="20.2" height="35.6" fill="url(#grail)" stroke="#121215" stroke-width="2.4"/><line x1="863.2" y1="1359.1" x2="885.4000000000001" y2="1359.1" stroke="#1a1a1d" stroke-width="2"/><ellipse cx="874.3000000000001" cy="1342.3" rx="2.6" ry="2.2" fill="#85858a" stroke="#17171a" stroke-width="2"/><ellipse cx="874.3000000000001" cy="1356.5" rx="2.6" ry="2.2" fill="#85858a" stroke="#17171a" stroke-width="2"/><ellipse cx="874.3000000000001" cy="1361.6999999999998" rx="2.6" ry="2.2" fill="#85858a" stroke="#17171a" stroke-width="2"/><ellipse cx="874.3000000000001" cy="1375.8999999999999" rx="2.6" ry="2.2" fill="#85858a" stroke="#17171a" stroke-width="2"/><rect x="1258.0" y="1341.3" width="20.2" height="35.6" fill="url(#grail)" stroke="#121215" stroke-width="2.4"/><line x1="1257.0" y1="1359.1" x2="1279.2" y2="1359.1" stroke="#1a1a1d" stroke-width="2"/><ellipse cx="1268.1" cy="1342.3" rx="2.6" ry="2.2" fill="#85858a" stroke="#17171a" stroke-width="2"/><ellipse cx="1268.1" cy="1356.5" rx="2.6" ry="2.2" fill="#85858a" stroke="#17171a" stroke-width="2"/><ellipse cx="1268.1" cy="1361.6999999999998" rx="2.6" ry="2.2" fill="#85858a" stroke="#17171a" stroke-width="2"/><ellipse cx="1268.1" cy="1375.8999999999999" rx="2.6" ry="2.2" fill="#85858a" stroke="#17171a" stroke-width="2"/><line x1="863.2" y1="1341.1" x2="1279.2" y2="1341.1" stroke="#1a1a1d" stroke-width="1.8"/><line x1="863.2" y1="1377.1" x2="1279.2" y2="1377.1" stroke="#2a2a2d" stroke-width="1.8"/><rect x="2005.3" y="346.59999999999997" width="415.6" height="75.6" fill="url(#gsrv)"/><rect x="2047.3" y="356.7" width="166" height="11.5" fill="url(#gslot)" stroke="#1a1a1d" stroke-width="2.2"/><rect x="2047.3" y="382.7" width="166" height="12.7" fill="url(#gslot)" stroke="#1a1a1d" stroke-width="2.2"/><rect x="2221.3" y="354.59999999999997" width="158" height="48.599999999999994" fill="none" stroke="#88888c" stroke-width="1.3"/><rect x="2229.3" y="359.59999999999997" width="142" height="38.599999999999994" fill="none" stroke="#8a8a8e" stroke-width="1"/><rect x="2355.3" y="356.59999999999997" width="24" height="45.599999999999994" fill="#9d9da0" stroke="#88888c" stroke-width="1.5"/><rect x="2363.3" y="356.59999999999997" width="8" height="45.599999999999994" fill="#a3a3a6" stroke="#8b8b8f" stroke-width="1"/><rect x="2286.3" y="365.09999999999997" width="51" height="12" fill="#1d2a24" stroke="#202024" stroke-width="1"/><ellipse cx="2340.3" cy="387.59999999999997" rx="8" ry="4" fill="#85858a" stroke="#3c3c40" stroke-width="1.6"/><line x1="2047.3" y1="408.99999999999994" x2="2379.3" y2="408.99999999999994" stroke="#7c7c80" stroke-width="1.6"/><rect x="2006.3" y="347.59999999999997" width="20.2" height="73.6" fill="url(#grail)" stroke="#121215" stroke-width="2.4"/><line x1="2005.3" y1="384.4" x2="2027.5" y2="384.4" stroke="#1a1a1d" stroke-width="2"/><ellipse cx="2016.3999999999999" cy="352.59999999999997" rx="2.2" ry="3.6" fill="#85858a" stroke="#17171a" stroke-width="2"/><ellipse cx="2016.3999999999999" cy="379.4" rx="2.2" ry="3.6" fill="#85858a" stroke="#17171a" stroke-width="2"/><ellipse cx="2016.3999999999999" cy="389.4" rx="2.2" ry="3.6" fill="#85858a" stroke="#17171a" stroke-width="2"/><ellipse cx="2016.3999999999999" cy="416.19999999999993" rx="2.2" ry="3.6" fill="#85858a" stroke="#17171a" stroke-width="2"/><rect x="2399.7000000000003" y="347.59999999999997" width="20.2" height="73.6" fill="url(#grail)" stroke="#121215" stroke-width="2.4"/><line x1="2398.7000000000003" y1="384.4" x2="2420.9" y2="384.4" stroke="#1a1a1d" stroke-width="2"/><ellipse cx="2409.8" cy="352.59999999999997" rx="2.2" ry="3.6" fill="#85858a" stroke="#17171a" stroke-width="2"/><ellipse cx="2409.8" cy="379.4" rx="2.2" ry="3.6" fill="#85858a" stroke="#17171a" stroke-width="2"/><ellipse cx="2409.8" cy="389.4" rx="2.2" ry="3.6" fill="#85858a" stroke="#17171a" stroke-width="2"/><ellipse cx="2409.8" cy="416.19999999999993" rx="2.2" ry="3.6" fill="#85858a" stroke="#17171a" stroke-width="2"/><line x1="2005.3" y1="347.4" x2="2420.9" y2="347.4" stroke="#1a1a1d" stroke-width="1.8"/><line x1="2005.3" y1="421.3999999999999" x2="2420.9" y2="421.3999999999999" stroke="#2a2a2d" stroke-width="1.8"/><rect x="2005.3" y="422.2" width="415.6" height="37.8" fill="url(#gsrv)"/><rect x="2047.3" y="427.4" width="166" height="5.9" fill="url(#gslot)" stroke="#1a1a1d" stroke-width="2.2"/><rect x="2047.3" y="441.09999999999997" width="166" height="5.7" fill="url(#gslot)" stroke="#1a1a1d" stroke-width="2.2"/><rect x="2254.7" y="425.59999999999997" width="124.6" height="22.299999999999997" fill="#9d9da0" stroke="#88888c" stroke-width="1.3"/><rect x="2263.8" y="428.2" width="107" height="19.599999999999998" fill="#949497" stroke="#8a8a8e" stroke-width="1"/><rect x="2355.3" y="426.2" width="24" height="23.799999999999997" fill="#9d9da0" stroke="#88888c" stroke-width="1.5"/><rect x="2363.3" y="426.2" width="8" height="23.799999999999997" fill="#a3a3a6" stroke="#8b8b8f" stroke-width="1"/><rect x="2286.3" y="432.5" width="51" height="6" fill="#357a5c" stroke="#202024" stroke-width="1"/><ellipse cx="2282.3" cy="442.3" rx="6.6" ry="2.3" fill="#85858a" stroke="#3c3c40" stroke-width="1.6"/><ellipse cx="2297.5" cy="442.3" rx="6.6" ry="2.3" fill="#85858a" stroke="#3c3c40" stroke-width="1.6"/><ellipse cx="2312.7000000000003" cy="442.3" rx="6.6" ry="2.3" fill="#85858a" stroke="#3c3c40" stroke-width="1.6"/><ellipse cx="2327.9" cy="442.3" rx="6.6" ry="2.3" fill="#85858a" stroke="#3c3c40" stroke-width="1.6"/><ellipse cx="2343.1000000000004" cy="442.3" rx="6.6" ry="2.3" fill="#85858a" stroke="#3c3c40" stroke-width="1.6"/><line x1="2047.3" y1="454.0" x2="2379.3" y2="454.0" stroke="#7c7c80" stroke-width="1.6"/><rect x="2006.3" y="423.2" width="20.2" height="35.8" fill="url(#grail)" stroke="#121215" stroke-width="2.4"/><line x1="2005.3" y1="441.09999999999997" x2="2027.5" y2="441.09999999999997" stroke="#1a1a1d" stroke-width="2"/><ellipse cx="2016.3999999999999" cy="424.2" rx="2.6" ry="2.2" fill="#85858a" stroke="#17171a" stroke-width="2"/><ellipse cx="2016.3999999999999" cy="438.49999999999994" rx="2.6" ry="2.2" fill="#85858a" stroke="#17171a" stroke-width="2"/><ellipse cx="2016.3999999999999" cy="443.7" rx="2.6" ry="2.2" fill="#85858a" stroke="#17171a" stroke-width="2"/><ellipse cx="2016.3999999999999" cy="458.0" rx="2.6" ry="2.2" fill="#85858a" stroke="#17171a" stroke-width="2"/><rect x="2399.7000000000003" y="423.2" width="20.2" height="35.8" fill="url(#grail)" stroke="#121215" stroke-width="2.4"/><line x1="2398.7000000000003" y1="441.09999999999997" x2="2420.9" y2="441.09999999999997" stroke="#1a1a1d" stroke-width="2"/><ellipse cx="2409.8" cy="424.2" rx="2.6" ry="2.2" fill="#85858a" stroke="#17171a" stroke-width="2"/><ellipse cx="2409.8" cy="438.49999999999994" rx="2.6" ry="2.2" fill="#85858a" stroke="#17171a" stroke-width="2"/><ellipse cx="2409.8" cy="443.7" rx="2.6" ry="2.2" fill="#85858a" stroke="#17171a" stroke-width="2"/><ellipse cx="2409.8" cy="458.0" rx="2.6" ry="2.2" fill="#85858a" stroke="#17171a" stroke-width="2"/><line x1="2005.3" y1="423.0" x2="2420.9" y2="423.0" stroke="#1a1a1d" stroke-width="1.8"/><line x1="2005.3" y1="459.2" x2="2420.9" y2="459.2" stroke="#2a2a2d" stroke-width="1.8"/><clipPath id="cch"><rect x="2005.3" y="300" width="400" height="1200"/></clipPath><g clip-path="url(#cch)"><rect x="2005.3" y="459.2" width="800" height="378.0" fill="#121215"/><rect x="2001.7" y="461.2" width="8.2" height="133.7" fill="url(#gbar)"/><rect x="2001.7" y="594.9" width="8.2" height="56.3" fill="url(#gbar2)"/><rect x="2009.8999999999999" y="460.2" width="7" height="191" fill="url(#gedge)"/><polygon points="2009.8999999999999,460.2 2025.3,460.2 2011.3,476.2 2009.8999999999999,476.2" fill="#5a5a5e"/><polygon points="2009.8999999999999,637.2 2022.3,637.2 2022.3,645.2 2009.8999999999999,651.2" fill="#343438" opacity=".9"/><rect x="2022.8999999999999" y="465.2" width="3.6" height="173" fill="url(#pdash)"/><rect x="2028.8" y="460.2" width="16.500" height="191" fill="#1c1c1f"/><circle cx="2037.3" cy="484.2" r="3.4" fill="#232326" stroke="#3c3c40" stroke-width="1.2"/><rect x="2031.8" y="494.2" width="12.4" height="52" fill="#7a7a7e"/><rect x="2034.3" y="496.7" width="8" height="7.6" fill="#0c0c0f"/><rect x="2034.3" y="508.0" width="8" height="7.6" fill="#0c0c0f"/><rect x="2034.3" y="519.3" width="8" height="7.6" fill="#0c0c0f"/><rect x="2034.3" y="530.2" width="5" height="16" fill="#0c0c0f"/><rect x="2038.3" y="530.2" width="5" height="9" rx="2" fill="#8e8e92"/><rect x="2031.3" y="548.2" width="13" height="22" fill="#0b0b0e"/><circle cx="2037.6" cy="564.2" r="4.4" fill="#500f19"/><rect x="2032.8" y="554.2" width="4" height="2.4" fill="#2e6a35"/><rect x="2031.8" y="572.2" width="12.4" height="44" fill="#6a6a6e"/><rect x="2034.3" y="574.7" width="8" height="7.6" fill="#0c0c0f"/><rect x="2034.3" y="586.0" width="8" height="7.6" fill="#0c0c0f"/><rect x="2034.3" y="598.2" width="5" height="17" fill="#0c0c0f"/><rect x="2038.3" y="598.2" width="5" height="10" rx="2" fill="#8e8e92"/><rect x="2036.3" y="621.2" width="4" height="4" fill="#8f8f93"/><rect x="2045.3" y="460.2" width="4.4" height="191" fill="#58585c"/><rect x="2046.7" y="460.2" width="1.4" height="191" fill="#77777b"/><rect x="2051.4" y="461.2" width="8.2" height="133.7" fill="url(#gbar)"/><rect x="2051.4" y="594.9" width="8.2" height="56.3" fill="url(#gbar2)"/><rect x="2059.6" y="460.2" width="7" height="191" fill="url(#gedge)"/><polygon points="2059.6,460.2 2075.0,460.2 2061.0,476.2 2059.6,476.2" fill="#5a5a5e"/><polygon points="2059.6,637.2 2072.0,637.2 2072.0,645.2 2059.6,651.2" fill="#343438" opacity=".9"/><rect x="2072.6" y="465.2" width="3.6" height="173" fill="url(#pdash)"/><rect x="2078.5" y="460.2" width="16.500" height="191" fill="#1c1c1f"/><circle cx="2087.0" cy="484.2" r="3.4" fill="#232326" stroke="#3c3c40" stroke-width="1.2"/><rect x="2081.5" y="494.2" width="12.4" height="52" fill="#7a7a7e"/><rect x="2084.0" y="496.7" width="8" height="7.6" fill="#0c0c0f"/><rect x="2084.0" y="508.0" width="8" height="7.6" fill="#0c0c0f"/><rect x="2084.0" y="519.3" width="8" height="7.6" fill="#0c0c0f"/><rect x="2084.0" y="530.2" width="5" height="16" fill="#0c0c0f"/><rect x="2088.0" y="530.2" width="5" height="9" rx="2" fill="#8e8e92"/><rect x="2081.0" y="548.2" width="13" height="22" fill="#0b0b0e"/><circle cx="2087.3" cy="564.2" r="4.4" fill="#500f19"/><rect x="2082.5" y="554.2" width="4" height="2.4" fill="#2e6a35"/><rect x="2081.5" y="572.2" width="12.4" height="44" fill="#6a6a6e"/><rect x="2084.0" y="574.7" width="8" height="7.6" fill="#0c0c0f"/><rect x="2084.0" y="586.0" width="8" height="7.6" fill="#0c0c0f"/><rect x="2084.0" y="598.2" width="5" height="17" fill="#0c0c0f"/><rect x="2088.0" y="598.2" width="5" height="10" rx="2" fill="#8e8e92"/><rect x="2086.0" y="621.2" width="4" height="4" fill="#8f8f93"/><rect x="2095.0" y="460.2" width="4.4" height="191" fill="#58585c"/><rect x="2096.4" y="460.2" width="1.4" height="191" fill="#77777b"/><rect x="2101.1" y="461.2" width="8.2" height="133.7" fill="url(#gbar)"/><rect x="2101.1" y="594.9" width="8.2" height="56.3" fill="url(#gbar2)"/><rect x="2109.2999999999997" y="460.2" width="7" height="191" fill="url(#gedge)"/><polygon points="2109.2999999999997,460.2 2124.7,460.2 2110.7,476.2 2109.2999999999997,476.2" fill="#5a5a5e"/><polygon points="2109.2999999999997,637.2 2121.7,637.2 2121.7,645.2 2109.2999999999997,651.2" fill="#343438" opacity=".9"/><rect x="2122.2999999999997" y="465.2" width="3.6" height="173" fill="url(#pdash)"/><rect x="2128.2" y="460.2" width="16.500" height="191" fill="#1c1c1f"/><circle cx="2136.7" cy="484.2" r="3.4" fill="#232326" stroke="#3c3c40" stroke-width="1.2"/><rect x="2131.2" y="494.2" width="12.4" height="52" fill="#7a7a7e"/><rect x="2133.7" y="496.7" width="8" height="7.6" fill="#0c0c0f"/><rect x="2133.7" y="508.0" width="8" height="7.6" fill="#0c0c0f"/><rect x="2133.7" y="519.3" width="8" height="7.6" fill="#0c0c0f"/><rect x="2133.7" y="530.2" width="5" height="16" fill="#0c0c0f"/><rect x="2137.7" y="530.2" width="5" height="9" rx="2" fill="#8e8e92"/><rect x="2130.7" y="548.2" width="13" height="22" fill="#0b0b0e"/><circle cx="2137.0" cy="564.2" r="4.4" fill="#500f19"/><rect x="2132.2" y="554.2" width="4" height="2.4" fill="#2e6a35"/><rect x="2131.2" y="572.2" width="12.4" height="44" fill="#6a6a6e"/><rect x="2133.7" y="574.7" width="8" height="7.6" fill="#0c0c0f"/><rect x="2133.7" y="586.0" width="8" height="7.6" fill="#0c0c0f"/><rect x="2133.7" y="598.2" width="5" height="17" fill="#0c0c0f"/><rect x="2137.7" y="598.2" width="5" height="10" rx="2" fill="#8e8e92"/><rect x="2135.7" y="621.2" width="4" height="4" fill="#8f8f93"/><rect x="2144.7" y="460.2" width="4.4" height="191" fill="#58585c"/><rect x="2146.1" y="460.2" width="1.4" height="191" fill="#77777b"/><rect x="2150.8" y="461.2" width="8.2" height="133.7" fill="url(#gbar)"/><rect x="2150.8" y="594.9" width="8.2" height="56.3" fill="url(#gbar2)"/><rect x="2159.0" y="460.2" width="7" height="191" fill="url(#gedge)"/><polygon points="2159.0,460.2 2174.4,460.2 2160.4,476.2 2159.0,476.2" fill="#5a5a5e"/><polygon points="2159.0,637.2 2171.4,637.2 2171.4,645.2 2159.0,651.2" fill="#343438" opacity=".9"/><rect x="2172.0" y="465.2" width="3.6" height="173" fill="url(#pdash)"/><rect x="2177.9" y="460.2" width="16.500" height="191" fill="#1c1c1f"/><circle cx="2186.4" cy="484.2" r="3.4" fill="#232326" stroke="#3c3c40" stroke-width="1.2"/><rect x="2180.9" y="494.2" width="12.4" height="52" fill="#7a7a7e"/><rect x="2183.4" y="496.7" width="8" height="7.6" fill="#0c0c0f"/><rect x="2183.4" y="508.0" width="8" height="7.6" fill="#0c0c0f"/><rect x="2183.4" y="519.3" width="8" height="7.6" fill="#0c0c0f"/><rect x="2183.4" y="530.2" width="5" height="16" fill="#0c0c0f"/><rect x="2187.4" y="530.2" width="5" height="9" rx="2" fill="#8e8e92"/><rect x="2180.4" y="548.2" width="13" height="22" fill="#0b0b0e"/><circle cx="2186.7000000000003" cy="564.2" r="4.4" fill="#500f19"/><rect x="2181.9" y="554.2" width="4" height="2.4" fill="#2e6a35"/><rect x="2180.9" y="572.2" width="12.4" height="44" fill="#6a6a6e"/><rect x="2183.4" y="574.7" width="8" height="7.6" fill="#0c0c0f"/><rect x="2183.4" y="586.0" width="8" height="7.6" fill="#0c0c0f"/><rect x="2183.4" y="598.2" width="5" height="17" fill="#0c0c0f"/><rect x="2187.4" y="598.2" width="5" height="10" rx="2" fill="#8e8e92"/><rect x="2185.4" y="621.2" width="4" height="4" fill="#8f8f93"/><rect x="2194.4" y="460.2" width="4.4" height="191" fill="#58585c"/><rect x="2195.8" y="460.2" width="1.4" height="191" fill="#77777b"/><rect x="2200.5" y="461.2" width="8.2" height="133.7" fill="url(#gbar)"/><rect x="2200.5" y="594.9" width="8.2" height="56.3" fill="url(#gbar2)"/><rect x="2208.7" y="460.2" width="7" height="191" fill="url(#gedge)"/><polygon points="2208.7,460.2 2224.1,460.2 2210.1,476.2 2208.7,476.2" fill="#5a5a5e"/><polygon points="2208.7,637.2 2221.1,637.2 2221.1,645.2 2208.7,651.2" fill="#343438" opacity=".9"/><rect x="2221.7" y="465.2" width="3.6" height="173" fill="url(#pdash)"/><rect x="2227.6" y="460.2" width="16.500" height="191" fill="#1c1c1f"/><circle cx="2236.1" cy="484.2" r="3.4" fill="#232326" stroke="#3c3c40" stroke-width="1.2"/><rect x="2230.6" y="494.2" width="12.4" height="52" fill="#7a7a7e"/><rect x="2233.1" y="496.7" width="8" height="7.6" fill="#0c0c0f"/><rect x="2233.1" y="508.0" width="8" height="7.6" fill="#0c0c0f"/><rect x="2233.1" y="519.3" width="8" height="7.6" fill="#0c0c0f"/><rect x="2233.1" y="530.2" width="5" height="16" fill="#0c0c0f"/><rect x="2237.1" y="530.2" width="5" height="9" rx="2" fill="#8e8e92"/><rect x="2230.1" y="548.2" width="13" height="22" fill="#0b0b0e"/><circle cx="2236.4" cy="564.2" r="4.4" fill="#500f19"/><rect x="2231.6" y="554.2" width="4" height="2.4" fill="#2e6a35"/><rect x="2230.6" y="572.2" width="12.4" height="44" fill="#6a6a6e"/><rect x="2233.1" y="574.7" width="8" height="7.6" fill="#0c0c0f"/><rect x="2233.1" y="586.0" width="8" height="7.6" fill="#0c0c0f"/><rect x="2233.1" y="598.2" width="5" height="17" fill="#0c0c0f"/><rect x="2237.1" y="598.2" width="5" height="10" rx="2" fill="#8e8e92"/><rect x="2235.1" y="621.2" width="4" height="4" fill="#8f8f93"/><rect x="2244.1" y="460.2" width="4.4" height="191" fill="#58585c"/><rect x="2245.5" y="460.2" width="1.4" height="191" fill="#77777b"/><rect x="2250.2000000000003" y="461.2" width="8.2" height="133.7" fill="url(#gbar)"/><rect x="2250.2000000000003" y="594.9" width="8.2" height="56.3" fill="url(#gbar2)"/><rect x="2258.4" y="460.2" width="7" height="191" fill="url(#gedge)"/><polygon points="2258.4,460.2 2273.8,460.2 2259.8,476.2 2258.4,476.2" fill="#5a5a5e"/><polygon points="2258.4,637.2 2270.8,637.2 2270.8,645.2 2258.4,651.2" fill="#343438" opacity=".9"/><rect x="2271.4" y="465.2" width="3.6" height="173" fill="url(#pdash)"/><rect x="2277.3" y="460.2" width="16.500" height="191" fill="#1c1c1f"/><circle cx="2285.8" cy="484.2" r="3.4" fill="#232326" stroke="#3c3c40" stroke-width="1.2"/><rect x="2280.3" y="494.2" width="12.4" height="52" fill="#7a7a7e"/><rect x="2282.8" y="496.7" width="8" height="7.6" fill="#0c0c0f"/><rect x="2282.8" y="508.0" width="8" height="7.6" fill="#0c0c0f"/><rect x="2282.8" y="519.3" width="8" height="7.6" fill="#0c0c0f"/><rect x="2282.8" y="530.2" width="5" height="16" fill="#0c0c0f"/><rect x="2286.8" y="530.2" width="5" height="9" rx="2" fill="#8e8e92"/><rect x="2279.8" y="548.2" width="13" height="22" fill="#0b0b0e"/><circle cx="2286.1000000000004" cy="564.2" r="4.4" fill="#500f19"/><rect x="2281.3" y="554.2" width="4" height="2.4" fill="#2e6a35"/><rect x="2280.3" y="572.2" width="12.4" height="44" fill="#6a6a6e"/><rect x="2282.8" y="574.7" width="8" height="7.6" fill="#0c0c0f"/><rect x="2282.8" y="586.0" width="8" height="7.6" fill="#0c0c0f"/><rect x="2282.8" y="598.2" width="5" height="17" fill="#0c0c0f"/><rect x="2286.8" y="598.2" width="5" height="10" rx="2" fill="#8e8e92"/><rect x="2284.8" y="621.2" width="4" height="4" fill="#8f8f93"/><rect x="2293.8" y="460.2" width="4.4" height="191" fill="#58585c"/><rect x="2295.2000000000003" y="460.2" width="1.4" height="191" fill="#77777b"/><rect x="2299.9" y="461.2" width="8.2" height="133.7" fill="url(#gbar)"/><rect x="2299.9" y="594.9" width="8.2" height="56.3" fill="url(#gbar2)"/><rect x="2308.1" y="460.2" width="7" height="191" fill="url(#gedge)"/><polygon points="2308.1,460.2 2323.5,460.2 2309.5,476.2 2308.1,476.2" fill="#5a5a5e"/><polygon points="2308.1,637.2 2320.5,637.2 2320.5,645.2 2308.1,651.2" fill="#343438" opacity=".9"/><rect x="2321.1" y="465.2" width="3.6" height="173" fill="url(#pdash)"/><rect x="2327.0" y="460.2" width="16.500" height="191" fill="#1c1c1f"/><circle cx="2335.5" cy="484.2" r="3.4" fill="#232326" stroke="#3c3c40" stroke-width="1.2"/><rect x="2330.0" y="494.2" width="12.4" height="52" fill="#7a7a7e"/><rect x="2332.5" y="496.7" width="8" height="7.6" fill="#0c0c0f"/><rect x="2332.5" y="508.0" width="8" height="7.6" fill="#0c0c0f"/><rect x="2332.5" y="519.3" width="8" height="7.6" fill="#0c0c0f"/><rect x="2332.5" y="530.2" width="5" height="16" fill="#0c0c0f"/><rect x="2336.5" y="530.2" width="5" height="9" rx="2" fill="#8e8e92"/><rect x="2329.5" y="548.2" width="13" height="22" fill="#0b0b0e"/><circle cx="2335.8" cy="564.2" r="4.4" fill="#500f19"/><rect x="2331.0" y="554.2" width="4" height="2.4" fill="#2e6a35"/><rect x="2330.0" y="572.2" width="12.4" height="44" fill="#6a6a6e"/><rect x="2332.5" y="574.7" width="8" height="7.6" fill="#0c0c0f"/><rect x="2332.5" y="586.0" width="8" height="7.6" fill="#0c0c0f"/><rect x="2332.5" y="598.2" width="5" height="17" fill="#0c0c0f"/><rect x="2336.5" y="598.2" width="5" height="10" rx="2" fill="#8e8e92"/><rect x="2334.5" y="621.2" width="4" height="4" fill="#8f8f93"/><rect x="2343.5" y="460.2" width="4.4" height="191" fill="#58585c"/><rect x="2344.9" y="460.2" width="1.4" height="191" fill="#77777b"/><rect x="2349.6" y="461.2" width="8.2" height="133.7" fill="url(#gbar)"/><rect x="2349.6" y="594.9" width="8.2" height="56.3" fill="url(#gbar2)"/><rect x="2357.7999999999997" y="460.2" width="7" height="191" fill="url(#gedge)"/><polygon points="2357.7999999999997,460.2 2373.2,460.2 2359.2,476.2 2357.7999999999997,476.2" fill="#5a5a5e"/><polygon points="2357.7999999999997,637.2 2370.2,637.2 2370.2,645.2 2357.7999999999997,651.2" fill="#343438" opacity=".9"/><rect x="2370.7999999999997" y="465.2" width="3.6" height="173" fill="url(#pdash)"/><rect x="2376.7" y="460.2" width="16.500" height="191" fill="#1c1c1f"/><circle cx="2385.2" cy="484.2" r="3.4" fill="#232326" stroke="#3c3c40" stroke-width="1.2"/><rect x="2379.7" y="494.2" width="12.4" height="52" fill="#7a7a7e"/><rect x="2382.2" y="496.7" width="8" height="7.6" fill="#0c0c0f"/><rect x="2382.2" y="508.0" width="8" height="7.6" fill="#0c0c0f"/><rect x="2382.2" y="519.3" width="8" height="7.6" fill="#0c0c0f"/><rect x="2382.2" y="530.2" width="5" height="16" fill="#0c0c0f"/><rect x="2386.2" y="530.2" width="5" height="9" rx="2" fill="#8e8e92"/><rect x="2379.2" y="548.2" width="13" height="22" fill="#0b0b0e"/><circle cx="2385.5" cy="564.2" r="4.4" fill="#500f19"/><rect x="2380.7" y="554.2" width="4" height="2.4" fill="#2e6a35"/><rect x="2379.7" y="572.2" width="12.4" height="44" fill="#6a6a6e"/><rect x="2382.2" y="574.7" width="8" height="7.6" fill="#0c0c0f"/><rect x="2382.2" y="586.0" width="8" height="7.6" fill="#0c0c0f"/><rect x="2382.2" y="598.2" width="5" height="17" fill="#0c0c0f"/><rect x="2386.2" y="598.2" width="5" height="10" rx="2" fill="#8e8e92"/><rect x="2384.2" y="621.2" width="4" height="4" fill="#8f8f93"/><rect x="2393.2" y="460.2" width="4.4" height="191" fill="#58585c"/><rect x="2394.6" y="460.2" width="1.4" height="191" fill="#77777b"/><rect x="2001.7" y="652.2" width="8.2" height="119.0" fill="url(#gbar)"/><rect x="2001.7" y="771.2" width="8.2" height="50.0" fill="url(#gbar2)"/><rect x="2009.8999999999999" y="651.2" width="7" height="170" fill="url(#gedge)"/><polygon points="2009.8999999999999,651.2 2025.3,651.2 2011.3,667.2 2009.8999999999999,667.2" fill="#5a5a5e"/><polygon points="2009.8999999999999,807.2 2022.3,807.2 2022.3,815.2 2009.8999999999999,821.2" fill="#343438" opacity=".9"/><rect x="2022.8999999999999" y="656.2" width="3.6" height="152" fill="url(#pdash)"/><rect x="2028.8" y="651.2" width="16.500" height="170" fill="#1c1c1f"/><circle cx="2037.3" cy="675.2" r="3.4" fill="#232326" stroke="#3c3c40" stroke-width="1.2"/><rect x="2031.8" y="685.2" width="12.4" height="52" fill="#7a7a7e"/><rect x="2034.3" y="687.7" width="8" height="7.6" fill="#0c0c0f"/><rect x="2034.3" y="699.0" width="8" height="7.6" fill="#0c0c0f"/><rect x="2034.3" y="710.3000000000001" width="8" height="7.6" fill="#0c0c0f"/><rect x="2034.3" y="721.2" width="5" height="16" fill="#0c0c0f"/><rect x="2038.3" y="721.2" width="5" height="9" rx="2" fill="#8e8e92"/><rect x="2031.3" y="739.2" width="13" height="22" fill="#0b0b0e"/><circle cx="2037.6" cy="755.2" r="4.4" fill="#500f19"/><rect x="2032.8" y="745.2" width="4" height="2.4" fill="#2e6a35"/><rect x="2031.8" y="763.2" width="12.4" height="44" fill="#6a6a6e"/><rect x="2034.3" y="765.7" width="8" height="7.6" fill="#0c0c0f"/><rect x="2034.3" y="777.0" width="8" height="7.6" fill="#0c0c0f"/><rect x="2034.3" y="789.2" width="5" height="17" fill="#0c0c0f"/><rect x="2038.3" y="789.2" width="5" height="10" rx="2" fill="#8e8e92"/><rect x="2036.3" y="812.2" width="4" height="4" fill="#8f8f93"/><rect x="2045.3" y="651.2" width="4.4" height="170" fill="#58585c"/><rect x="2046.7" y="651.2" width="1.4" height="170" fill="#77777b"/><rect x="2051.4" y="652.2" width="8.2" height="119.0" fill="url(#gbar)"/><rect x="2051.4" y="771.2" width="8.2" height="50.0" fill="url(#gbar2)"/><rect x="2059.6" y="651.2" width="7" height="170" fill="url(#gedge)"/><polygon points="2059.6,651.2 2075.0,651.2 2061.0,667.2 2059.6,667.2" fill="#5a5a5e"/><polygon points="2059.6,807.2 2072.0,807.2 2072.0,815.2 2059.6,821.2" fill="#343438" opacity=".9"/><rect x="2072.6" y="656.2" width="3.6" height="152" fill="url(#pdash)"/><rect x="2078.5" y="651.2" width="16.500" height="170" fill="#1c1c1f"/><circle cx="2087.0" cy="675.2" r="3.4" fill="#232326" stroke="#3c3c40" stroke-width="1.2"/><rect x="2081.5" y="685.2" width="12.4" height="52" fill="#7a7a7e"/><rect x="2084.0" y="687.7" width="8" height="7.6" fill="#0c0c0f"/><rect x="2084.0" y="699.0" width="8" height="7.6" fill="#0c0c0f"/><rect x="2084.0" y="710.3000000000001" width="8" height="7.6" fill="#0c0c0f"/><rect x="2084.0" y="721.2" width="5" height="16" fill="#0c0c0f"/><rect x="2088.0" y="721.2" width="5" height="9" rx="2" fill="#8e8e92"/><rect x="2081.0" y="739.2" width="13" height="22" fill="#0b0b0e"/><circle cx="2087.3" cy="755.2" r="4.4" fill="#500f19"/><rect x="2082.5" y="745.2" width="4" height="2.4" fill="#2e6a35"/><rect x="2081.5" y="763.2" width="12.4" height="44" fill="#6a6a6e"/><rect x="2084.0" y="765.7" width="8" height="7.6" fill="#0c0c0f"/><rect x="2084.0" y="777.0" width="8" height="7.6" fill="#0c0c0f"/><rect x="2084.0" y="789.2" width="5" height="17" fill="#0c0c0f"/><rect x="2088.0" y="789.2" width="5" height="10" rx="2" fill="#8e8e92"/><rect x="2086.0" y="812.2" width="4" height="4" fill="#8f8f93"/><rect x="2095.0" y="651.2" width="4.4" height="170" fill="#58585c"/><rect x="2096.4" y="651.2" width="1.4" height="170" fill="#77777b"/><rect x="2101.1" y="652.2" width="8.2" height="119.0" fill="url(#gbar)"/><rect x="2101.1" y="771.2" width="8.2" height="50.0" fill="url(#gbar2)"/><rect x="2109.2999999999997" y="651.2" width="7" height="170" fill="url(#gedge)"/><polygon points="2109.2999999999997,651.2 2124.7,651.2 2110.7,667.2 2109.2999999999997,667.2" fill="#5a5a5e"/><polygon points="2109.2999999999997,807.2 2121.7,807.2 2121.7,815.2 2109.2999999999997,821.2" fill="#343438" opacity=".9"/><rect x="2122.2999999999997" y="656.2" width="3.6" height="152" fill="url(#pdash)"/><rect x="2128.2" y="651.2" width="16.500" height="170" fill="#1c1c1f"/><circle cx="2136.7" cy="675.2" r="3.4" fill="#232326" stroke="#3c3c40" stroke-width="1.2"/><rect x="2131.2" y="685.2" width="12.4" height="52" fill="#7a7a7e"/><rect x="2133.7" y="687.7" width="8" height="7.6" fill="#0c0c0f"/><rect x="2133.7" y="699.0" width="8" height="7.6" fill="#0c0c0f"/><rect x="2133.7" y="710.3000000000001" width="8" height="7.6" fill="#0c0c0f"/><rect x="2133.7" y="721.2" width="5" height="16" fill="#0c0c0f"/><rect x="2137.7" y="721.2" width="5" height="9" rx="2" fill="#8e8e92"/><rect x="2130.7" y="739.2" width="13" height="22" fill="#0b0b0e"/><circle cx="2137.0" cy="755.2" r="4.4" fill="#500f19"/><rect x="2132.2" y="745.2" width="4" height="2.4" fill="#2e6a35"/><rect x="2131.2" y="763.2" width="12.4" height="44" fill="#6a6a6e"/><rect x="2133.7" y="765.7" width="8" height="7.6" fill="#0c0c0f"/><rect x="2133.7" y="777.0" width="8" height="7.6" fill="#0c0c0f"/><rect x="2133.7" y="789.2" width="5" height="17" fill="#0c0c0f"/><rect x="2137.7" y="789.2" width="5" height="10" rx="2" fill="#8e8e92"/><rect x="2135.7" y="812.2" width="4" height="4" fill="#8f8f93"/><rect x="2144.7" y="651.2" width="4.4" height="170" fill="#58585c"/><rect x="2146.1" y="651.2" width="1.4" height="170" fill="#77777b"/><rect x="2150.8" y="652.2" width="8.2" height="119.0" fill="url(#gbar)"/><rect x="2150.8" y="771.2" width="8.2" height="50.0" fill="url(#gbar2)"/><rect x="2159.0" y="651.2" width="7" height="170" fill="url(#gedge)"/><polygon points="2159.0,651.2 2174.4,651.2 2160.4,667.2 2159.0,667.2" fill="#5a5a5e"/><polygon points="2159.0,807.2 2171.4,807.2 2171.4,815.2 2159.0,821.2" fill="#343438" opacity=".9"/><rect x="2172.0" y="656.2" width="3.6" height="152" fill="url(#pdash)"/><rect x="2177.9" y="651.2" width="16.500" height="170" fill="#1c1c1f"/><circle cx="2186.4" cy="675.2" r="3.4" fill="#232326" stroke="#3c3c40" stroke-width="1.2"/><rect x="2180.9" y="685.2" width="12.4" height="52" fill="#7a7a7e"/><rect x="2183.4" y="687.7" width="8" height="7.6" fill="#0c0c0f"/><rect x="2183.4" y="699.0" width="8" height="7.6" fill="#0c0c0f"/><rect x="2183.4" y="710.3000000000001" width="8" height="7.6" fill="#0c0c0f"/><rect x="2183.4" y="721.2" width="5" height="16" fill="#0c0c0f"/><rect x="2187.4" y="721.2" width="5" height="9" rx="2" fill="#8e8e92"/><rect x="2180.4" y="739.2" width="13" height="22" fill="#0b0b0e"/><circle cx="2186.7000000000003" cy="755.2" r="4.4" fill="#500f19"/><rect x="2181.9" y="745.2" width="4" height="2.4" fill="#2e6a35"/><rect x="2180.9" y="763.2" width="12.4" height="44" fill="#6a6a6e"/><rect x="2183.4" y="765.7" width="8" height="7.6" fill="#0c0c0f"/><rect x="2183.4" y="777.0" width="8" height="7.6" fill="#0c0c0f"/><rect x="2183.4" y="789.2" width="5" height="17" fill="#0c0c0f"/><rect x="2187.4" y="789.2" width="5" height="10" rx="2" fill="#8e8e92"/><rect x="2185.4" y="812.2" width="4" height="4" fill="#8f8f93"/><rect x="2194.4" y="651.2" width="4.4" height="170" fill="#58585c"/><rect x="2195.8" y="651.2" width="1.4" height="170" fill="#77777b"/><rect x="2200.5" y="652.2" width="8.2" height="119.0" fill="url(#gbar)"/><rect x="2200.5" y="771.2" width="8.2" height="50.0" fill="url(#gbar2)"/><rect x="2208.7" y="651.2" width="7" height="170" fill="url(#gedge)"/><polygon points="2208.7,651.2 2224.1,651.2 2210.1,667.2 2208.7,667.2" fill="#5a5a5e"/><polygon points="2208.7,807.2 2221.1,807.2 2221.1,815.2 2208.7,821.2" fill="#343438" opacity=".9"/><rect x="2221.7" y="656.2" width="3.6" height="152" fill="url(#pdash)"/><rect x="2227.6" y="651.2" width="16.500" height="170" fill="#1c1c1f"/><circle cx="2236.1" cy="675.2" r="3.4" fill="#232326" stroke="#3c3c40" stroke-width="1.2"/><rect x="2230.6" y="685.2" width="12.4" height="52" fill="#7a7a7e"/><rect x="2233.1" y="687.7" width="8" height="7.6" fill="#0c0c0f"/><rect x="2233.1" y="699.0" width="8" height="7.6" fill="#0c0c0f"/><rect x="2233.1" y="710.3000000000001" width="8" height="7.6" fill="#0c0c0f"/><rect x="2233.1" y="721.2" width="5" height="16" fill="#0c0c0f"/><rect x="2237.1" y="721.2" width="5" height="9" rx="2" fill="#8e8e92"/><rect x="2230.1" y="739.2" width="13" height="22" fill="#0b0b0e"/><circle cx="2236.4" cy="755.2" r="4.4" fill="#500f19"/><rect x="2231.6" y="745.2" width="4" height="2.4" fill="#2e6a35"/><rect x="2230.6" y="763.2" width="12.4" height="44" fill="#6a6a6e"/><rect x="2233.1" y="765.7" width="8" height="7.6" fill="#0c0c0f"/><rect x="2233.1" y="777.0" width="8" height="7.6" fill="#0c0c0f"/><rect x="2233.1" y="789.2" width="5" height="17" fill="#0c0c0f"/><rect x="2237.1" y="789.2" width="5" height="10" rx="2" fill="#8e8e92"/><rect x="2235.1" y="812.2" width="4" height="4" fill="#8f8f93"/><rect x="2244.1" y="651.2" width="4.4" height="170" fill="#58585c"/><rect x="2245.5" y="651.2" width="1.4" height="170" fill="#77777b"/><rect x="2250.2000000000003" y="652.2" width="8.2" height="119.0" fill="url(#gbar)"/><rect x="2250.2000000000003" y="771.2" width="8.2" height="50.0" fill="url(#gbar2)"/><rect x="2258.4" y="651.2" width="7" height="170" fill="url(#gedge)"/><polygon points="2258.4,651.2 2273.8,651.2 2259.8,667.2 2258.4,667.2" fill="#5a5a5e"/><polygon points="2258.4,807.2 2270.8,807.2 2270.8,815.2 2258.4,821.2" fill="#343438" opacity=".9"/><rect x="2271.4" y="656.2" width="3.6" height="152" fill="url(#pdash)"/><rect x="2277.3" y="651.2" width="16.500" height="170" fill="#1c1c1f"/><circle cx="2285.8" cy="675.2" r="3.4" fill="#232326" stroke="#3c3c40" stroke-width="1.2"/><rect x="2280.3" y="685.2" width="12.4" height="52" fill="#7a7a7e"/><rect x="2282.8" y="687.7" width="8" height="7.6" fill="#0c0c0f"/><rect x="2282.8" y="699.0" width="8" height="7.6" fill="#0c0c0f"/><rect x="2282.8" y="710.3000000000001" width="8" height="7.6" fill="#0c0c0f"/><rect x="2282.8" y="721.2" width="5" height="16" fill="#0c0c0f"/><rect x="2286.8" y="721.2" width="5" height="9" rx="2" fill="#8e8e92"/><rect x="2279.8" y="739.2" width="13" height="22" fill="#0b0b0e"/><circle cx="2286.1000000000004" cy="755.2" r="4.4" fill="#500f19"/><rect x="2281.3" y="745.2" width="4" height="2.4" fill="#2e6a35"/><rect x="2280.3" y="763.2" width="12.4" height="44" fill="#6a6a6e"/><rect x="2282.8" y="765.7" width="8" height="7.6" fill="#0c0c0f"/><rect x="2282.8" y="777.0" width="8" height="7.6" fill="#0c0c0f"/><rect x="2282.8" y="789.2" width="5" height="17" fill="#0c0c0f"/><rect x="2286.8" y="789.2" width="5" height="10" rx="2" fill="#8e8e92"/><rect x="2284.8" y="812.2" width="4" height="4" fill="#8f8f93"/><rect x="2293.8" y="651.2" width="4.4" height="170" fill="#58585c"/><rect x="2295.2000000000003" y="651.2" width="1.4" height="170" fill="#77777b"/><rect x="2299.9" y="652.2" width="8.2" height="119.0" fill="url(#gbar)"/><rect x="2299.9" y="771.2" width="8.2" height="50.0" fill="url(#gbar2)"/><rect x="2308.1" y="651.2" width="7" height="170" fill="url(#gedge)"/><polygon points="2308.1,651.2 2323.5,651.2 2309.5,667.2 2308.1,667.2" fill="#5a5a5e"/><polygon points="2308.1,807.2 2320.5,807.2 2320.5,815.2 2308.1,821.2" fill="#343438" opacity=".9"/><rect x="2321.1" y="656.2" width="3.6" height="152" fill="url(#pdash)"/><rect x="2327.0" y="651.2" width="16.500" height="170" fill="#1c1c1f"/><circle cx="2335.5" cy="675.2" r="3.4" fill="#232326" stroke="#3c3c40" stroke-width="1.2"/><rect x="2330.0" y="685.2" width="12.4" height="52" fill="#7a7a7e"/><rect x="2332.5" y="687.7" width="8" height="7.6" fill="#0c0c0f"/><rect x="2332.5" y="699.0" width="8" height="7.6" fill="#0c0c0f"/><rect x="2332.5" y="710.3000000000001" width="8" height="7.6" fill="#0c0c0f"/><rect x="2332.5" y="721.2" width="5" height="16" fill="#0c0c0f"/><rect x="2336.5" y="721.2" width="5" height="9" rx="2" fill="#8e8e92"/><rect x="2329.5" y="739.2" width="13" height="22" fill="#0b0b0e"/><circle cx="2335.8" cy="755.2" r="4.4" fill="#500f19"/><rect x="2331.0" y="745.2" width="4" height="2.4" fill="#2e6a35"/><rect x="2330.0" y="763.2" width="12.4" height="44" fill="#6a6a6e"/><rect x="2332.5" y="765.7" width="8" height="7.6" fill="#0c0c0f"/><rect x="2332.5" y="777.0" width="8" height="7.6" fill="#0c0c0f"/><rect x="2332.5" y="789.2" width="5" height="17" fill="#0c0c0f"/><rect x="2336.5" y="789.2" width="5" height="10" rx="2" fill="#8e8e92"/><rect x="2334.5" y="812.2" width="4" height="4" fill="#8f8f93"/><rect x="2343.5" y="651.2" width="4.4" height="170" fill="#58585c"/><rect x="2344.9" y="651.2" width="1.4" height="170" fill="#77777b"/><rect x="2349.6" y="652.2" width="8.2" height="119.0" fill="url(#gbar)"/><rect x="2349.6" y="771.2" width="8.2" height="50.0" fill="url(#gbar2)"/><rect x="2357.7999999999997" y="651.2" width="7" height="170" fill="url(#gedge)"/><polygon points="2357.7999999999997,651.2 2373.2,651.2 2359.2,667.2 2357.7999999999997,667.2" fill="#5a5a5e"/><polygon points="2357.7999999999997,807.2 2370.2,807.2 2370.2,815.2 2357.7999999999997,821.2" fill="#343438" opacity=".9"/><rect x="2370.7999999999997" y="656.2" width="3.6" height="152" fill="url(#pdash)"/><rect x="2376.7" y="651.2" width="16.500" height="170" fill="#1c1c1f"/><circle cx="2385.2" cy="675.2" r="3.4" fill="#232326" stroke="#3c3c40" stroke-width="1.2"/><rect x="2379.7" y="685.2" width="12.4" height="52" fill="#7a7a7e"/><rect x="2382.2" y="687.7" width="8" height="7.6" fill="#0c0c0f"/><rect x="2382.2" y="699.0" width="8" height="7.6" fill="#0c0c0f"/><rect x="2382.2" y="710.3000000000001" width="8" height="7.6" fill="#0c0c0f"/><rect x="2382.2" y="721.2" width="5" height="16" fill="#0c0c0f"/><rect x="2386.2" y="721.2" width="5" height="9" rx="2" fill="#8e8e92"/><rect x="2379.2" y="739.2" width="13" height="22" fill="#0b0b0e"/><circle cx="2385.5" cy="755.2" r="4.4" fill="#500f19"/><rect x="2380.7" y="745.2" width="4" height="2.4" fill="#2e6a35"/><rect x="2379.7" y="763.2" width="12.4" height="44" fill="#6a6a6e"/><rect x="2382.2" y="765.7" width="8" height="7.6" fill="#0c0c0f"/><rect x="2382.2" y="777.0" width="8" height="7.6" fill="#0c0c0f"/><rect x="2382.2" y="789.2" width="5" height="17" fill="#0c0c0f"/><rect x="2386.2" y="789.2" width="5" height="10" rx="2" fill="#8e8e92"/><rect x="2384.2" y="812.2" width="4" height="4" fill="#8f8f93"/><rect x="2393.2" y="651.2" width="4.4" height="170" fill="#58585c"/><rect x="2394.6" y="651.2" width="1.4" height="170" fill="#77777b"/><rect x="2005.3" y="649.2" width="800" height="2" fill="#2f2f33"/><rect x="2005.3" y="812.2" width="800" height="25" fill="#707074"/><rect x="2005.3" y="812.2" width="800" height="2" fill="#8a8a8e"/><polygon points="2005.3,812.2 2100.3,812.2 2080.3,837.2 2005.3,837.2" fill="#6a6a6e"/><rect x="2012.3" y="818.2" width="6.500" height="15" fill="#0e0e11"/><rect x="2023.3" y="818.2" width="6.5" height="15" fill="#0e0e11"/><rect x="2045.3" y="820.2" width="22.500" height="11" fill="#1c4f96" stroke="#2a2a2e" stroke-width="1"/><rect x="2094.3" y="804.2" width="49" height="31" fill="url(#glcd)" stroke="#707074" stroke-width="2"/><rect x="2143.3" y="804.2" width="29" height="31" fill="#7e7e82"/><rect x="2146.3" y="810.2" width="23" height="6" fill="#909094"/><rect x="2146.3" y="820.2" width="23" height="6" fill="#8a8a8e"/><rect x="2172.3" y="814.2" width="633" height="11" fill="#77777b"/><rect x="2172.3" y="814.2" width="633" height="2.5" fill="#8c8c90"/><rect x="2172.3" y="824.8000000000001" width="633" height="12.4" fill="#29292c"/><circle cx="2205.8" cy="819.7" r="15.4" fill="#1b1b1e" stroke="#6c6c70" stroke-width="2.4"/><text x="2205.8" y="823.2" text-anchor="middle" font-family="Liberation Sans, sans-serif" font-weight="700" font-size="9.5" fill="#68686c">DELL</text></g><rect x="2005.3" y="837.2" width="800" height="492.4" fill="#2a303a"/><rect x="2012.2" y="843.0" width="197" height="116.7" rx="8" fill="#313843" stroke="#3d444f" stroke-width="1.6"/><rect x="2017.6000000000001" y="862.8000000000001" width="49.6" height="26.500" rx="4" fill="#14161a"/><rect x="2026.2" y="868.2" width="30" height="16" rx="2" fill="#1e2126"/><rect x="2017.6000000000001" y="924.0" width="49.6" height="25.8" rx="4" fill="#14161a"/><rect x="2026.2" y="929.2" width="30" height="15" rx="2" fill="#1e2126"/><polygon points="2018.6000000000001,941.2 2018.6000000000001,954.7 2025.7,949.2" fill="#14161a"/><rect x="2023.2" y="891.8000000000001" width="38" height="12.2" rx="2" fill="#1b1e24"/><rect x="2023.2" y="906.7" width="38" height="12.3" rx="2" fill="#1b1e24"/><rect x="2034.2" y="896.9000000000001" width="9" height="2" fill="#3a3f48"/><circle cx="2050.2" cy="897.9000000000001" r="2.4" fill="#2c3038"/><rect x="2034.2" y="911.8000000000001" width="9" height="2" fill="#3a3f48"/><circle cx="2050.2" cy="912.8000000000001" r="2.4" fill="#2c3038"/><g clip-path="url(#cfr)"><g clip-path="url(#cfan1)"><rect x="2070.2999999999997" y="844.6" width="125" height="125" fill="url(#pgrill)"/></g></g><circle cx="2073.9" cy="870.3000000000001" r="2.3" fill="#93343a"/><circle cx="2073.9" cy="877.0" r="2.3" fill="#2e7f39"/><circle cx="2073.9" cy="892.6" r="2.3" fill="#2e7f39"/><circle cx="2073.9" cy="908.9000000000001" r="2.3" fill="#2e7f39"/><line x1="2094.2" y1="940.4000000000001" x2="2176.7" y2="870.8000000000001" stroke="#0b0c0f" stroke-width="9.5" stroke-linecap="round"/><line x1="2096.2" y1="937.4000000000001" x2="2172.2" y2="873.2" stroke="#2a2c31" stroke-width="2" stroke-linecap="round"/><line x1="2172.2" y1="874.6" x2="2178.2" y2="869.5" stroke="#6f6f73" stroke-width="8" stroke-linecap="round"/><rect x="2165.8" y="935.7" width="27.3" height="17.3" fill="#6c9872"/><rect x="2165.8" y="935.7" width="27.3" height="7.5" fill="#5b8560"/><circle cx="2169.4" cy="938.7" r="1.9" fill="#8f9a58"/><circle cx="2176.1" cy="938.7" r="1.9" fill="#8f9a58"/><circle cx="2182.8" cy="938.7" r="1.9" fill="#8f9a58"/><circle cx="2189.5" cy="938.7" r="1.9" fill="#8f9a58"/><circle cx="2038.2" cy="851.6" r="5" fill="#818185"/><circle cx="2184.0" cy="851.6" r="5" fill="#818185"/><circle cx="2025.7" cy="857.7" r="1.8" fill="#15171b"/><circle cx="2197.2" cy="857.7" r="1.8" fill="#15171b"/><circle cx="2197.2" cy="951.5" r="1.8" fill="#15171b"/><rect x="2060.2" y="847.8000000000001" width="94" height="1.3" fill="#4a515c"/><rect x="2053.2" y="852.1" width="111" height="1.3" fill="#4a515c"/><rect x="2077.7" y="856.5" width="62" height="1.3" fill="#4a515c"/><rect x="2215.8" y="843.0" width="197" height="116.7" rx="8" fill="#313843" stroke="#3d444f" stroke-width="1.6"/><rect x="2221.2000000000003" y="862.8000000000001" width="49.6" height="26.500" rx="4" fill="#14161a"/><rect x="2229.8" y="868.2" width="30" height="16" rx="2" fill="#1e2126"/><rect x="2221.2000000000003" y="924.0" width="49.6" height="25.8" rx="4" fill="#14161a"/><rect x="2229.8" y="929.2" width="30" height="15" rx="2" fill="#1e2126"/><polygon points="2222.2000000000003,941.2 2222.2000000000003,954.7 2229.3,949.2" fill="#14161a"/><rect x="2226.8" y="891.8000000000001" width="38" height="12.2" rx="2" fill="#1b1e24"/><rect x="2226.8" y="906.7" width="38" height="12.3" rx="2" fill="#1b1e24"/><rect x="2237.8" y="896.9000000000001" width="9" height="2" fill="#3a3f48"/><circle cx="2253.8" cy="897.9000000000001" r="2.4" fill="#2c3038"/><rect x="2237.8" y="911.8000000000001" width="9" height="2" fill="#3a3f48"/><circle cx="2253.8" cy="912.8000000000001" r="2.4" fill="#2c3038"/><g clip-path="url(#cfr)"><g clip-path="url(#cfan2)"><rect x="2273.9" y="844.6" width="125" height="125" fill="url(#pgrill)"/></g></g><circle cx="2277.5" cy="870.3000000000001" r="2.3" fill="#93343a"/><circle cx="2277.5" cy="877.0" r="2.3" fill="#2e7f39"/><circle cx="2277.5" cy="892.6" r="2.3" fill="#2e7f39"/><circle cx="2277.5" cy="908.9000000000001" r="2.3" fill="#2e7f39"/><line x1="2297.8" y1="940.4000000000001" x2="2380.3" y2="870.8000000000001" stroke="#0b0c0f" stroke-width="9.5" stroke-linecap="round"/><line x1="2299.8" y1="937.4000000000001" x2="2375.8" y2="873.2" stroke="#2a2c31" stroke-width="2" stroke-linecap="round"/><line x1="2375.8" y1="874.6" x2="2381.8" y2="869.5" stroke="#6f6f73" stroke-width="8" stroke-linecap="round"/><rect x="2369.4" y="935.7" width="27.3" height="17.3" fill="#6c9872"/><rect x="2369.4" y="935.7" width="27.3" height="7.5" fill="#5b8560"/><circle cx="2373.0" cy="938.7" r="1.9" fill="#8f9a58"/><circle cx="2379.7" cy="938.7" r="1.9" fill="#8f9a58"/><circle cx="2386.4" cy="938.7" r="1.9" fill="#8f9a58"/><circle cx="2393.1" cy="938.7" r="1.9" fill="#8f9a58"/><circle cx="2241.8" cy="851.6" r="5" fill="#818185"/><circle cx="2387.6000000000004" cy="851.6" r="5" fill="#818185"/><circle cx="2229.3" cy="857.7" r="1.8" fill="#15171b"/><circle cx="2400.8" cy="857.7" r="1.8" fill="#15171b"/><circle cx="2400.8" cy="951.5" r="1.8" fill="#15171b"/><rect x="2263.8" y="847.8000000000001" width="94" height="1.3" fill="#4a515c"/><rect x="2256.8" y="852.1" width="111" height="1.3" fill="#4a515c"/><rect x="2281.3" y="856.5" width="62" height="1.3" fill="#4a515c"/><rect x="2419.4" y="843.0" width="197" height="116.7" rx="8" fill="#313843" stroke="#3d444f" stroke-width="1.6"/><rect x="2424.8" y="862.8000000000001" width="49.6" height="26.500" rx="4" fill="#14161a"/><rect x="2433.4" y="868.2" width="30" height="16" rx="2" fill="#1e2126"/><rect x="2424.8" y="924.0" width="49.6" height="25.8" rx="4" fill="#14161a"/><rect x="2433.4" y="929.2" width="30" height="15" rx="2" fill="#1e2126"/><polygon points="2425.8,941.2 2425.8,954.7 2432.9,949.2" fill="#14161a"/><rect x="2430.4" y="891.8000000000001" width="38" height="12.2" rx="2" fill="#1b1e24"/><rect x="2430.4" y="906.7" width="38" height="12.3" rx="2" fill="#1b1e24"/><rect x="2441.4" y="896.9000000000001" width="9" height="2" fill="#3a3f48"/><circle cx="2457.4" cy="897.9000000000001" r="2.4" fill="#2c3038"/><rect x="2441.4" y="911.8000000000001" width="9" height="2" fill="#3a3f48"/><circle cx="2457.4" cy="912.8000000000001" r="2.4" fill="#2c3038"/><circle cx="2481.1" cy="870.3000000000001" r="2.3" fill="#93343a"/><circle cx="2481.1" cy="877.0" r="2.3" fill="#2e7f39"/><circle cx="2481.1" cy="892.6" r="2.3" fill="#2e7f39"/><circle cx="2481.1" cy="908.9000000000001" r="2.3" fill="#2e7f39"/><line x1="2501.4" y1="940.4000000000001" x2="2583.9" y2="870.8000000000001" stroke="#0b0c0f" stroke-width="9.5" stroke-linecap="round"/><line x1="2503.4" y1="937.4000000000001" x2="2579.4" y2="873.2" stroke="#2a2c31" stroke-width="2" stroke-linecap="round"/><line x1="2579.4" y1="874.6" x2="2585.4" y2="869.5" stroke="#6f6f73" stroke-width="8" stroke-linecap="round"/><rect x="2573.0" y="935.7" width="27.3" height="17.3" fill="#6c9872"/><rect x="2573.0" y="935.7" width="27.3" height="7.5" fill="#5b8560"/><circle cx="2576.6" cy="938.7" r="1.9" fill="#8f9a58"/><circle cx="2583.2999999999997" cy="938.7" r="1.9" fill="#8f9a58"/><circle cx="2590.0" cy="938.7" r="1.9" fill="#8f9a58"/><circle cx="2596.7" cy="938.7" r="1.9" fill="#8f9a58"/><circle cx="2445.4" cy="851.6" r="5" fill="#818185"/><circle cx="2591.2000000000003" cy="851.6" r="5" fill="#818185"/><circle cx="2432.9" cy="857.7" r="1.8" fill="#15171b"/><circle cx="2604.4" cy="857.7" r="1.8" fill="#15171b"/><circle cx="2604.4" cy="951.5" r="1.8" fill="#15171b"/><rect x="2467.4" y="847.8000000000001" width="94" height="1.3" fill="#4a515c"/><rect x="2460.4" y="852.1" width="111" height="1.3" fill="#4a515c"/><rect x="2484.9" y="856.5" width="62" height="1.3" fill="#4a515c"/><rect x="2005.3" y="959.7" width="800" height="13" fill="#272c35"/><rect x="2083.6" y="960.0" width="41" height="12" fill="#9a9038"/><circle cx="2212.7" cy="965.7" r="4.5" fill="#818185"/><circle cx="2010.8" cy="966.2" r="1.8" fill="#14161a"/><circle cx="2032.0" cy="966.2" r="1.8" fill="#14161a"/><circle cx="2076.0" cy="966.2" r="1.8" fill="#14161a"/><circle cx="2138.0" cy="966.2" r="1.8" fill="#14161a"/><circle cx="2226.8" cy="966.2" r="1.8" fill="#14161a"/><circle cx="2264.0" cy="966.2" r="1.8" fill="#14161a"/><rect x="2039.7" y="972.5" width="765.6" height="24.4" fill="url(#gcard)"/><circle cx="2048.8" cy="985.7" r="5.4" fill="#828286"/><path d="M2041.3 993.5 Q2065.3 997.0 2089.3 994.0" fill="none" stroke="#565d67" stroke-width="1.4"/><rect x="2087.0" y="978.2" width="68" height="14.3" rx="3" fill="#3d434d" stroke="#4b515b" stroke-width="1.2"/><rect x="2093.5" y="985.7" width="9.5" height="4.6" fill="#101216"/><rect x="2090.8" y="984.0" width="1.6" height="7" fill="#565d67"/><rect x="2119.2" y="985.7" width="9.5" height="4.6" fill="#101216"/><rect x="2116.5" y="984.0" width="1.6" height="7" fill="#565d67"/><rect x="2144.9" y="985.7" width="9.5" height="4.6" fill="#101216"/><rect x="2142.2" y="984.0" width="1.6" height="7" fill="#565d67"/><rect x="2162.8" y="978.2" width="68" height="14.3" rx="3" fill="#3d434d" stroke="#4b515b" stroke-width="1.2"/><rect x="2169.3" y="985.7" width="9.5" height="4.6" fill="#101216"/><rect x="2166.6" y="984.0" width="1.6" height="7" fill="#565d67"/><rect x="2195.0" y="985.7" width="9.5" height="4.6" fill="#101216"/><rect x="2192.3" y="984.0" width="1.6" height="7" fill="#565d67"/><rect x="2220.7" y="985.7" width="9.5" height="4.6" fill="#101216"/><rect x="2218.0" y="984.0" width="1.6" height="7" fill="#565d67"/><rect x="2238.6" y="978.2" width="68" height="14.3" rx="3" fill="#3d434d" stroke="#4b515b" stroke-width="1.2"/><rect x="2245.1" y="985.7" width="9.5" height="4.6" fill="#101216"/><rect x="2242.4" y="984.0" width="1.6" height="7" fill="#565d67"/><rect x="2270.8" y="985.7" width="9.5" height="4.6" fill="#101216"/><rect x="2268.1" y="984.0" width="1.6" height="7" fill="#565d67"/><rect x="2296.5" y="985.7" width="9.5" height="4.6" fill="#101216"/><rect x="2293.8" y="984.0" width="1.6" height="7" fill="#565d67"/><rect x="2314.4" y="978.2" width="68" height="14.3" rx="3" fill="#3d434d" stroke="#4b515b" stroke-width="1.2"/><rect x="2320.9" y="985.7" width="9.5" height="4.6" fill="#101216"/><rect x="2318.2" y="984.0" width="1.6" height="7" fill="#565d67"/><rect x="2346.6" y="985.7" width="9.5" height="4.6" fill="#101216"/><rect x="2343.9" y="984.0" width="1.6" height="7" fill="#565d67"/><rect x="2372.3" y="985.7" width="9.5" height="4.6" fill="#101216"/><rect x="2369.6" y="984.0" width="1.6" height="7" fill="#565d67"/><rect x="2390.2" y="978.2" width="68" height="14.3" rx="3" fill="#3d434d" stroke="#4b515b" stroke-width="1.2"/><rect x="2396.7" y="985.7" width="9.5" height="4.6" fill="#101216"/><rect x="2394.0" y="984.0" width="1.6" height="7" fill="#565d67"/><rect x="2422.4" y="985.7" width="9.5" height="4.6" fill="#101216"/><rect x="2419.7" y="984.0" width="1.6" height="7" fill="#565d67"/><rect x="2448.1" y="985.7" width="9.5" height="4.6" fill="#101216"/><rect x="2445.4" y="984.0" width="1.6" height="7" fill="#565d67"/><rect x="2466.0" y="978.2" width="68" height="14.3" rx="3" fill="#3d434d" stroke="#4b515b" stroke-width="1.2"/><rect x="2472.5" y="985.7" width="9.5" height="4.6" fill="#101216"/><rect x="2469.8" y="984.0" width="1.6" height="7" fill="#565d67"/><rect x="2498.2" y="985.7" width="9.5" height="4.6" fill="#101216"/><rect x="2495.5" y="984.0" width="1.6" height="7" fill="#565d67"/><rect x="2523.9" y="985.7" width="9.5" height="4.6" fill="#101216"/><rect x="2521.2" y="984.0" width="1.6" height="7" fill="#565d67"/><rect x="2541.8" y="978.2" width="68" height="14.3" rx="3" fill="#3d434d" stroke="#4b515b" stroke-width="1.2"/><rect x="2548.3" y="985.7" width="9.5" height="4.6" fill="#101216"/><rect x="2545.6" y="984.0" width="1.6" height="7" fill="#565d67"/><rect x="2574.0" y="985.7" width="9.5" height="4.6" fill="#101216"/><rect x="2571.3" y="984.0" width="1.6" height="7" fill="#565d67"/><rect x="2599.7" y="985.7" width="9.5" height="4.6" fill="#101216"/><rect x="2597.0" y="984.0" width="1.6" height="7" fill="#565d67"/><rect x="2617.6" y="978.2" width="68" height="14.3" rx="3" fill="#3d434d" stroke="#4b515b" stroke-width="1.2"/><rect x="2624.1" y="985.7" width="9.5" height="4.6" fill="#101216"/><rect x="2621.4" y="984.0" width="1.6" height="7" fill="#565d67"/><rect x="2649.8" y="985.7" width="9.5" height="4.6" fill="#101216"/><rect x="2647.1" y="984.0" width="1.6" height="7" fill="#565d67"/><rect x="2675.5" y="985.7" width="9.5" height="4.6" fill="#101216"/><rect x="2672.8" y="984.0" width="1.6" height="7" fill="#565d67"/><rect x="2693.4" y="978.2" width="68" height="14.3" rx="3" fill="#3d434d" stroke="#4b515b" stroke-width="1.2"/><rect x="2699.9" y="985.7" width="9.5" height="4.6" fill="#101216"/><rect x="2697.2" y="984.0" width="1.6" height="7" fill="#565d67"/><rect x="2725.6" y="985.7" width="9.5" height="4.6" fill="#101216"/><rect x="2722.9" y="984.0" width="1.6" height="7" fill="#565d67"/><rect x="2751.3" y="985.7" width="9.5" height="4.6" fill="#101216"/><rect x="2748.6" y="984.0" width="1.6" height="7" fill="#565d67"/><rect x="2769.2" y="978.2" width="68" height="14.3" rx="3" fill="#3d434d" stroke="#4b515b" stroke-width="1.2"/><rect x="2775.7" y="985.7" width="9.5" height="4.6" fill="#101216"/><rect x="2773.0" y="984.0" width="1.6" height="7" fill="#565d67"/><rect x="2801.4" y="985.7" width="9.5" height="4.6" fill="#101216"/><rect x="2798.7" y="984.0" width="1.6" height="7" fill="#565d67"/><rect x="2827.1" y="985.7" width="9.5" height="4.6" fill="#101216"/><rect x="2824.4" y="984.0" width="1.6" height="7" fill="#565d67"/><rect x="2039.7" y="996.9" width="765.6" height="24.4" fill="url(#gcard)"/><circle cx="2048.8" cy="1010.1" r="5.4" fill="#828286"/><path d="M2041.3 1017.9 Q2065.3 1021.4 2089.3 1018.4" fill="none" stroke="#565d67" stroke-width="1.4"/><rect x="2087.0" y="1002.6" width="68" height="14.3" rx="3" fill="#3d434d" stroke="#4b515b" stroke-width="1.2"/><rect x="2093.5" y="1010.1" width="9.5" height="4.6" fill="#101216"/><rect x="2090.8" y="1008.4" width="1.6" height="7" fill="#565d67"/><rect x="2119.2" y="1010.1" width="9.5" height="4.6" fill="#101216"/><rect x="2116.5" y="1008.4" width="1.6" height="7" fill="#565d67"/><rect x="2144.9" y="1010.1" width="9.5" height="4.6" fill="#101216"/><rect x="2142.2" y="1008.4" width="1.6" height="7" fill="#565d67"/><rect x="2162.8" y="1002.6" width="68" height="14.3" rx="3" fill="#3d434d" stroke="#4b515b" stroke-width="1.2"/><rect x="2169.3" y="1010.1" width="9.5" height="4.6" fill="#101216"/><rect x="2166.6" y="1008.4" width="1.6" height="7" fill="#565d67"/><rect x="2195.0" y="1010.1" width="9.5" height="4.6" fill="#101216"/><rect x="2192.3" y="1008.4" width="1.6" height="7" fill="#565d67"/><rect x="2220.7" y="1010.1" width="9.5" height="4.6" fill="#101216"/><rect x="2218.0" y="1008.4" width="1.6" height="7" fill="#565d67"/><rect x="2238.6" y="1002.6" width="68" height="14.3" rx="3" fill="#3d434d" stroke="#4b515b" stroke-width="1.2"/><rect x="2245.1" y="1010.1" width="9.5" height="4.6" fill="#101216"/><rect x="2242.4" y="1008.4" width="1.6" height="7" fill="#565d67"/><rect x="2270.8" y="1010.1" width="9.5" height="4.6" fill="#101216"/><rect x="2268.1" y="1008.4" width="1.6" height="7" fill="#565d67"/><rect x="2296.5" y="1010.1" width="9.5" height="4.6" fill="#101216"/><rect x="2293.8" y="1008.4" width="1.6" height="7" fill="#565d67"/><rect x="2314.4" y="1002.6" width="68" height="14.3" rx="3" fill="#3d434d" stroke="#4b515b" stroke-width="1.2"/><rect x="2320.9" y="1010.1" width="9.5" height="4.6" fill="#101216"/><rect x="2318.2" y="1008.4" width="1.6" height="7" fill="#565d67"/><rect x="2346.6" y="1010.1" width="9.5" height="4.6" fill="#101216"/><rect x="2343.9" y="1008.4" width="1.6" height="7" fill="#565d67"/><rect x="2372.3" y="1010.1" width="9.5" height="4.6" fill="#101216"/><rect x="2369.6" y="1008.4" width="1.6" height="7" fill="#565d67"/><rect x="2390.2" y="1002.6" width="68" height="14.3" rx="3" fill="#3d434d" stroke="#4b515b" stroke-width="1.2"/><rect x="2396.7" y="1010.1" width="9.5" height="4.6" fill="#101216"/><rect x="2394.0" y="1008.4" width="1.6" height="7" fill="#565d67"/><rect x="2422.4" y="1010.1" width="9.5" height="4.6" fill="#101216"/><rect x="2419.7" y="1008.4" width="1.6" height="7" fill="#565d67"/><rect x="2448.1" y="1010.1" width="9.5" height="4.6" fill="#101216"/><rect x="2445.4" y="1008.4" width="1.6" height="7" fill="#565d67"/><rect x="2466.0" y="1002.6" width="68" height="14.3" rx="3" fill="#3d434d" stroke="#4b515b" stroke-width="1.2"/><rect x="2472.5" y="1010.1" width="9.5" height="4.6" fill="#101216"/><rect x="2469.8" y="1008.4" width="1.6" height="7" fill="#565d67"/><rect x="2498.2" y="1010.1" width="9.5" height="4.6" fill="#101216"/><rect x="2495.5" y="1008.4" width="1.6" height="7" fill="#565d67"/><rect x="2523.9" y="1010.1" width="9.5" height="4.6" fill="#101216"/><rect x="2521.2" y="1008.4" width="1.6" height="7" fill="#565d67"/><rect x="2541.8" y="1002.6" width="68" height="14.3" rx="3" fill="#3d434d" stroke="#4b515b" stroke-width="1.2"/><rect x="2548.3" y="1010.1" width="9.5" height="4.6" fill="#101216"/><rect x="2545.6" y="1008.4" width="1.6" height="7" fill="#565d67"/><rect x="2574.0" y="1010.1" width="9.5" height="4.6" fill="#101216"/><rect x="2571.3" y="1008.4" width="1.6" height="7" fill="#565d67"/><rect x="2599.7" y="1010.1" width="9.5" height="4.6" fill="#101216"/><rect x="2597.0" y="1008.4" width="1.6" height="7" fill="#565d67"/><rect x="2617.6" y="1002.6" width="68" height="14.3" rx="3" fill="#3d434d" stroke="#4b515b" stroke-width="1.2"/><rect x="2624.1" y="1010.1" width="9.5" height="4.6" fill="#101216"/><rect x="2621.4" y="1008.4" width="1.6" height="7" fill="#565d67"/><rect x="2649.8" y="1010.1" width="9.5" height="4.6" fill="#101216"/><rect x="2647.1" y="1008.4" width="1.6" height="7" fill="#565d67"/><rect x="2675.5" y="1010.1" width="9.5" height="4.6" fill="#101216"/><rect x="2672.8" y="1008.4" width="1.6" height="7" fill="#565d67"/><rect x="2693.4" y="1002.6" width="68" height="14.3" rx="3" fill="#3d434d" stroke="#4b515b" stroke-width="1.2"/><rect x="2699.9" y="1010.1" width="9.5" height="4.6" fill="#101216"/><rect x="2697.2" y="1008.4" width="1.6" height="7" fill="#565d67"/><rect x="2725.6" y="1010.1" width="9.5" height="4.6" fill="#101216"/><rect x="2722.9" y="1008.4" width="1.6" height="7" fill="#565d67"/><rect x="2751.3" y="1010.1" width="9.5" height="4.6" fill="#101216"/><rect x="2748.6" y="1008.4" width="1.6" height="7" fill="#565d67"/><rect x="2769.2" y="1002.6" width="68" height="14.3" rx="3" fill="#3d434d" stroke="#4b515b" stroke-width="1.2"/><rect x="2775.7" y="1010.1" width="9.5" height="4.6" fill="#101216"/><rect x="2773.0" y="1008.4" width="1.6" height="7" fill="#565d67"/><rect x="2801.4" y="1010.1" width="9.5" height="4.6" fill="#101216"/><rect x="2798.7" y="1008.4" width="1.6" height="7" fill="#565d67"/><rect x="2827.1" y="1010.1" width="9.5" height="4.6" fill="#101216"/><rect x="2824.4" y="1008.4" width="1.6" height="7" fill="#565d67"/><rect x="2039.7" y="1021.3" width="765.6" height="24.4" fill="url(#gcard)"/><circle cx="2048.8" cy="1034.5" r="5.4" fill="#828286"/><path d="M2041.3 1042.3 Q2065.3 1045.8 2089.3 1042.8" fill="none" stroke="#565d67" stroke-width="1.4"/><rect x="2087.0" y="1027.0" width="68" height="14.3" rx="3" fill="#3d434d" stroke="#4b515b" stroke-width="1.2"/><rect x="2093.5" y="1034.5" width="9.5" height="4.6" fill="#101216"/><rect x="2090.8" y="1032.8" width="1.6" height="7" fill="#565d67"/><rect x="2119.2" y="1034.5" width="9.5" height="4.6" fill="#101216"/><rect x="2116.5" y="1032.8" width="1.6" height="7" fill="#565d67"/><rect x="2144.9" y="1034.5" width="9.5" height="4.6" fill="#101216"/><rect x="2142.2" y="1032.8" width="1.6" height="7" fill="#565d67"/><rect x="2162.8" y="1027.0" width="68" height="14.3" rx="3" fill="#3d434d" stroke="#4b515b" stroke-width="1.2"/><rect x="2169.3" y="1034.5" width="9.5" height="4.6" fill="#101216"/><rect x="2166.6" y="1032.8" width="1.6" height="7" fill="#565d67"/><rect x="2195.0" y="1034.5" width="9.5" height="4.6" fill="#101216"/><rect x="2192.3" y="1032.8" width="1.6" height="7" fill="#565d67"/><rect x="2220.7" y="1034.5" width="9.5" height="4.6" fill="#101216"/><rect x="2218.0" y="1032.8" width="1.6" height="7" fill="#565d67"/><rect x="2238.6" y="1027.0" width="68" height="14.3" rx="3" fill="#3d434d" stroke="#4b515b" stroke-width="1.2"/><rect x="2245.1" y="1034.5" width="9.5" height="4.6" fill="#101216"/><rect x="2242.4" y="1032.8" width="1.6" height="7" fill="#565d67"/><rect x="2270.8" y="1034.5" width="9.5" height="4.6" fill="#101216"/><rect x="2268.1" y="1032.8" width="1.6" height="7" fill="#565d67"/><rect x="2296.5" y="1034.5" width="9.5" height="4.6" fill="#101216"/><rect x="2293.8" y="1032.8" width="1.6" height="7" fill="#565d67"/><rect x="2314.4" y="1027.0" width="68" height="14.3" rx="3" fill="#3d434d" stroke="#4b515b" stroke-width="1.2"/><rect x="2320.9" y="1034.5" width="9.5" height="4.6" fill="#101216"/><rect x="2318.2" y="1032.8" width="1.6" height="7" fill="#565d67"/><rect x="2346.6" y="1034.5" width="9.5" height="4.6" fill="#101216"/><rect x="2343.9" y="1032.8" width="1.6" height="7" fill="#565d67"/><rect x="2372.3" y="1034.5" width="9.5" height="4.6" fill="#101216"/><rect x="2369.6" y="1032.8" width="1.6" height="7" fill="#565d67"/><rect x="2390.2" y="1027.0" width="68" height="14.3" rx="3" fill="#3d434d" stroke="#4b515b" stroke-width="1.2"/><rect x="2396.7" y="1034.5" width="9.5" height="4.6" fill="#101216"/><rect x="2394.0" y="1032.8" width="1.6" height="7" fill="#565d67"/><rect x="2422.4" y="1034.5" width="9.5" height="4.6" fill="#101216"/><rect x="2419.7" y="1032.8" width="1.6" height="7" fill="#565d67"/><rect x="2448.1" y="1034.5" width="9.5" height="4.6" fill="#101216"/><rect x="2445.4" y="1032.8" width="1.6" height="7" fill="#565d67"/><rect x="2466.0" y="1027.0" width="68" height="14.3" rx="3" fill="#3d434d" stroke="#4b515b" stroke-width="1.2"/><rect x="2472.5" y="1034.5" width="9.5" height="4.6" fill="#101216"/><rect x="2469.8" y="1032.8" width="1.6" height="7" fill="#565d67"/><rect x="2498.2" y="1034.5" width="9.5" height="4.6" fill="#101216"/><rect x="2495.5" y="1032.8" width="1.6" height="7" fill="#565d67"/><rect x="2523.9" y="1034.5" width="9.5" height="4.6" fill="#101216"/><rect x="2521.2" y="1032.8" width="1.6" height="7" fill="#565d67"/><rect x="2541.8" y="1027.0" width="68" height="14.3" rx="3" fill="#3d434d" stroke="#4b515b" stroke-width="1.2"/><rect x="2548.3" y="1034.5" width="9.5" height="4.6" fill="#101216"/><rect x="2545.6" y="1032.8" width="1.6" height="7" fill="#565d67"/><rect x="2574.0" y="1034.5" width="9.5" height="4.6" fill="#101216"/><rect x="2571.3" y="1032.8" width="1.6" height="7" fill="#565d67"/><rect x="2599.7" y="1034.5" width="9.5" height="4.6" fill="#101216"/><rect x="2597.0" y="1032.8" width="1.6" height="7" fill="#565d67"/><rect x="2617.6" y="1027.0" width="68" height="14.3" rx="3" fill="#3d434d" stroke="#4b515b" stroke-width="1.2"/><rect x="2624.1" y="1034.5" width="9.5" height="4.6" fill="#101216"/><rect x="2621.4" y="1032.8" width="1.6" height="7" fill="#565d67"/><rect x="2649.8" y="1034.5" width="9.5" height="4.6" fill="#101216"/><rect x="2647.1" y="1032.8" width="1.6" height="7" fill="#565d67"/><rect x="2675.5" y="1034.5" width="9.5" height="4.6" fill="#101216"/><rect x="2672.8" y="1032.8" width="1.6" height="7" fill="#565d67"/><rect x="2693.4" y="1027.0" width="68" height="14.3" rx="3" fill="#3d434d" stroke="#4b515b" stroke-width="1.2"/><rect x="2699.9" y="1034.5" width="9.5" height="4.6" fill="#101216"/><rect x="2697.2" y="1032.8" width="1.6" height="7" fill="#565d67"/><rect x="2725.6" y="1034.5" width="9.5" height="4.6" fill="#101216"/><rect x="2722.9" y="1032.8" width="1.6" height="7" fill="#565d67"/><rect x="2751.3" y="1034.5" width="9.5" height="4.6" fill="#101216"/><rect x="2748.6" y="1032.8" width="1.6" height="7" fill="#565d67"/><rect x="2769.2" y="1027.0" width="68" height="14.3" rx="3" fill="#3d434d" stroke="#4b515b" stroke-width="1.2"/><rect x="2775.7" y="1034.5" width="9.5" height="4.6" fill="#101216"/><rect x="2773.0" y="1032.8" width="1.6" height="7" fill="#565d67"/><rect x="2801.4" y="1034.5" width="9.5" height="4.6" fill="#101216"/><rect x="2798.7" y="1032.8" width="1.6" height="7" fill="#565d67"/><rect x="2827.1" y="1034.5" width="9.5" height="4.6" fill="#101216"/><rect x="2824.4" y="1032.8" width="1.6" height="7" fill="#565d67"/><rect x="2039.7" y="1045.7" width="765.6" height="24.4" fill="url(#gcard)"/><circle cx="2048.8" cy="1058.9" r="5.4" fill="#828286"/><path d="M2041.3 1066.7 Q2065.3 1070.2 2089.3 1067.2" fill="none" stroke="#565d67" stroke-width="1.4"/><rect x="2087.0" y="1051.4" width="68" height="14.3" rx="3" fill="#3d434d" stroke="#4b515b" stroke-width="1.2"/><rect x="2093.5" y="1058.9" width="9.5" height="4.6" fill="#101216"/><rect x="2090.8" y="1057.2" width="1.6" height="7" fill="#565d67"/><rect x="2119.2" y="1058.9" width="9.5" height="4.6" fill="#101216"/><rect x="2116.5" y="1057.2" width="1.6" height="7" fill="#565d67"/><rect x="2144.9" y="1058.9" width="9.5" height="4.6" fill="#101216"/><rect x="2142.2" y="1057.2" width="1.6" height="7" fill="#565d67"/><rect x="2162.8" y="1051.4" width="68" height="14.3" rx="3" fill="#3d434d" stroke="#4b515b" stroke-width="1.2"/><rect x="2169.3" y="1058.9" width="9.5" height="4.6" fill="#101216"/><rect x="2166.6" y="1057.2" width="1.6" height="7" fill="#565d67"/><rect x="2195.0" y="1058.9" width="9.5" height="4.6" fill="#101216"/><rect x="2192.3" y="1057.2" width="1.6" height="7" fill="#565d67"/><rect x="2220.7" y="1058.9" width="9.5" height="4.6" fill="#101216"/><rect x="2218.0" y="1057.2" width="1.6" height="7" fill="#565d67"/><rect x="2238.6" y="1051.4" width="68" height="14.3" rx="3" fill="#3d434d" stroke="#4b515b" stroke-width="1.2"/><rect x="2245.1" y="1058.9" width="9.5" height="4.6" fill="#101216"/><rect x="2242.4" y="1057.2" width="1.6" height="7" fill="#565d67"/><rect x="2270.8" y="1058.9" width="9.5" height="4.6" fill="#101216"/><rect x="2268.1" y="1057.2" width="1.6" height="7" fill="#565d67"/><rect x="2296.5" y="1058.9" width="9.5" height="4.6" fill="#101216"/><rect x="2293.8" y="1057.2" width="1.6" height="7" fill="#565d67"/><rect x="2314.4" y="1051.4" width="68" height="14.3" rx="3" fill="#3d434d" stroke="#4b515b" stroke-width="1.2"/><rect x="2320.9" y="1058.9" width="9.5" height="4.6" fill="#101216"/><rect x="2318.2" y="1057.2" width="1.6" height="7" fill="#565d67"/><rect x="2346.6" y="1058.9" width="9.5" height="4.6" fill="#101216"/><rect x="2343.9" y="1057.2" width="1.6" height="7" fill="#565d67"/><rect x="2372.3" y="1058.9" width="9.5" height="4.6" fill="#101216"/><rect x="2369.6" y="1057.2" width="1.6" height="7" fill="#565d67"/><rect x="2390.2" y="1051.4" width="68" height="14.3" rx="3" fill="#3d434d" stroke="#4b515b" stroke-width="1.2"/><rect x="2396.7" y="1058.9" width="9.5" height="4.6" fill="#101216"/><rect x="2394.0" y="1057.2" width="1.6" height="7" fill="#565d67"/><rect x="2422.4" y="1058.9" width="9.5" height="4.6" fill="#101216"/><rect x="2419.7" y="1057.2" width="1.6" height="7" fill="#565d67"/><rect x="2448.1" y="1058.9" width="9.5" height="4.6" fill="#101216"/><rect x="2445.4" y="1057.2" width="1.6" height="7" fill="#565d67"/><rect x="2466.0" y="1051.4" width="68" height="14.3" rx="3" fill="#3d434d" stroke="#4b515b" stroke-width="1.2"/><rect x="2472.5" y="1058.9" width="9.5" height="4.6" fill="#101216"/><rect x="2469.8" y="1057.2" width="1.6" height="7" fill="#565d67"/><rect x="2498.2" y="1058.9" width="9.5" height="4.6" fill="#101216"/><rect x="2495.5" y="1057.2" width="1.6" height="7" fill="#565d67"/><rect x="2523.9" y="1058.9" width="9.5" height="4.6" fill="#101216"/><rect x="2521.2" y="1057.2" width="1.6" height="7" fill="#565d67"/><rect x="2541.8" y="1051.4" width="68" height="14.3" rx="3" fill="#3d434d" stroke="#4b515b" stroke-width="1.2"/><rect x="2548.3" y="1058.9" width="9.5" height="4.6" fill="#101216"/><rect x="2545.6" y="1057.2" width="1.6" height="7" fill="#565d67"/><rect x="2574.0" y="1058.9" width="9.5" height="4.6" fill="#101216"/><rect x="2571.3" y="1057.2" width="1.6" height="7" fill="#565d67"/><rect x="2599.7" y="1058.9" width="9.5" height="4.6" fill="#101216"/><rect x="2597.0" y="1057.2" width="1.6" height="7" fill="#565d67"/><rect x="2617.6" y="1051.4" width="68" height="14.3" rx="3" fill="#3d434d" stroke="#4b515b" stroke-width="1.2"/><rect x="2624.1" y="1058.9" width="9.5" height="4.6" fill="#101216"/><rect x="2621.4" y="1057.2" width="1.6" height="7" fill="#565d67"/><rect x="2649.8" y="1058.9" width="9.5" height="4.6" fill="#101216"/><rect x="2647.1" y="1057.2" width="1.6" height="7" fill="#565d67"/><rect x="2675.5" y="1058.9" width="9.5" height="4.6" fill="#101216"/><rect x="2672.8" y="1057.2" width="1.6" height="7" fill="#565d67"/><rect x="2693.4" y="1051.4" width="68" height="14.3" rx="3" fill="#3d434d" stroke="#4b515b" stroke-width="1.2"/><rect x="2699.9" y="1058.9" width="9.5" height="4.6" fill="#101216"/><rect x="2697.2" y="1057.2" width="1.6" height="7" fill="#565d67"/><rect x="2725.6" y="1058.9" width="9.5" height="4.6" fill="#101216"/><rect x="2722.9" y="1057.2" width="1.6" height="7" fill="#565d67"/><rect x="2751.3" y="1058.9" width="9.5" height="4.6" fill="#101216"/><rect x="2748.6" y="1057.2" width="1.6" height="7" fill="#565d67"/><rect x="2769.2" y="1051.4" width="68" height="14.3" rx="3" fill="#3d434d" stroke="#4b515b" stroke-width="1.2"/><rect x="2775.7" y="1058.9" width="9.5" height="4.6" fill="#101216"/><rect x="2773.0" y="1057.2" width="1.6" height="7" fill="#565d67"/><rect x="2801.4" y="1058.9" width="9.5" height="4.6" fill="#101216"/><rect x="2798.7" y="1057.2" width="1.6" height="7" fill="#565d67"/><rect x="2827.1" y="1058.9" width="9.5" height="4.6" fill="#101216"/><rect x="2824.4" y="1057.2" width="1.6" height="7" fill="#565d67"/><rect x="2039.7" y="1070.1" width="765.6" height="24.4" fill="url(#gcard)"/><circle cx="2048.8" cy="1083.3" r="5.4" fill="#828286"/><path d="M2041.3 1091.1 Q2065.3 1094.6 2089.3 1091.6" fill="none" stroke="#565d67" stroke-width="1.4"/><rect x="2087.0" y="1075.8" width="68" height="14.3" rx="3" fill="#3d434d" stroke="#4b515b" stroke-width="1.2"/><rect x="2093.5" y="1083.3" width="9.5" height="4.6" fill="#101216"/><rect x="2090.8" y="1081.6" width="1.6" height="7" fill="#565d67"/><rect x="2119.2" y="1083.3" width="9.5" height="4.6" fill="#101216"/><rect x="2116.5" y="1081.6" width="1.6" height="7" fill="#565d67"/><rect x="2144.9" y="1083.3" width="9.5" height="4.6" fill="#101216"/><rect x="2142.2" y="1081.6" width="1.6" height="7" fill="#565d67"/><rect x="2162.8" y="1075.8" width="68" height="14.3" rx="3" fill="#3d434d" stroke="#4b515b" stroke-width="1.2"/><rect x="2169.3" y="1083.3" width="9.5" height="4.6" fill="#101216"/><rect x="2166.6" y="1081.6" width="1.6" height="7" fill="#565d67"/><rect x="2195.0" y="1083.3" width="9.5" height="4.6" fill="#101216"/><rect x="2192.3" y="1081.6" width="1.6" height="7" fill="#565d67"/><rect x="2220.7" y="1083.3" width="9.5" height="4.6" fill="#101216"/><rect x="2218.0" y="1081.6" width="1.6" height="7" fill="#565d67"/><rect x="2238.6" y="1075.8" width="68" height="14.3" rx="3" fill="#3d434d" stroke="#4b515b" stroke-width="1.2"/><rect x="2245.1" y="1083.3" width="9.5" height="4.6" fill="#101216"/><rect x="2242.4" y="1081.6" width="1.6" height="7" fill="#565d67"/><rect x="2270.8" y="1083.3" width="9.5" height="4.6" fill="#101216"/><rect x="2268.1" y="1081.6" width="1.6" height="7" fill="#565d67"/><rect x="2296.5" y="1083.3" width="9.5" height="4.6" fill="#101216"/><rect x="2293.8" y="1081.6" width="1.6" height="7" fill="#565d67"/><rect x="2314.4" y="1075.8" width="68" height="14.3" rx="3" fill="#3d434d" stroke="#4b515b" stroke-width="1.2"/><rect x="2320.9" y="1083.3" width="9.5" height="4.6" fill="#101216"/><rect x="2318.2" y="1081.6" width="1.6" height="7" fill="#565d67"/><rect x="2346.6" y="1083.3" width="9.5" height="4.6" fill="#101216"/><rect x="2343.9" y="1081.6" width="1.6" height="7" fill="#565d67"/><rect x="2372.3" y="1083.3" width="9.5" height="4.6" fill="#101216"/><rect x="2369.6" y="1081.6" width="1.6" height="7" fill="#565d67"/><rect x="2390.2" y="1075.8" width="68" height="14.3" rx="3" fill="#3d434d" stroke="#4b515b" stroke-width="1.2"/><rect x="2396.7" y="1083.3" width="9.5" height="4.6" fill="#101216"/><rect x="2394.0" y="1081.6" width="1.6" height="7" fill="#565d67"/><rect x="2422.4" y="1083.3" width="9.5" height="4.6" fill="#101216"/><rect x="2419.7" y="1081.6" width="1.6" height="7" fill="#565d67"/><rect x="2448.1" y="1083.3" width="9.5" height="4.6" fill="#101216"/><rect x="2445.4" y="1081.6" width="1.6" height="7" fill="#565d67"/><rect x="2466.0" y="1075.8" width="68" height="14.3" rx="3" fill="#3d434d" stroke="#4b515b" stroke-width="1.2"/><rect x="2472.5" y="1083.3" width="9.5" height="4.6" fill="#101216"/><rect x="2469.8" y="1081.6" width="1.6" height="7" fill="#565d67"/><rect x="2498.2" y="1083.3" width="9.5" height="4.6" fill="#101216"/><rect x="2495.5" y="1081.6" width="1.6" height="7" fill="#565d67"/><rect x="2523.9" y="1083.3" width="9.5" height="4.6" fill="#101216"/><rect x="2521.2" y="1081.6" width="1.6" height="7" fill="#565d67"/><rect x="2541.8" y="1075.8" width="68" height="14.3" rx="3" fill="#3d434d" stroke="#4b515b" stroke-width="1.2"/><rect x="2548.3" y="1083.3" width="9.5" height="4.6" fill="#101216"/><rect x="2545.6" y="1081.6" width="1.6" height="7" fill="#565d67"/><rect x="2574.0" y="1083.3" width="9.5" height="4.6" fill="#101216"/><rect x="2571.3" y="1081.6" width="1.6" height="7" fill="#565d67"/><rect x="2599.7" y="1083.3" width="9.5" height="4.6" fill="#101216"/><rect x="2597.0" y="1081.6" width="1.6" height="7" fill="#565d67"/><rect x="2617.6" y="1075.8" width="68" height="14.3" rx="3" fill="#3d434d" stroke="#4b515b" stroke-width="1.2"/><rect x="2624.1" y="1083.3" width="9.5" height="4.6" fill="#101216"/><rect x="2621.4" y="1081.6" width="1.6" height="7" fill="#565d67"/><rect x="2649.8" y="1083.3" width="9.5" height="4.6" fill="#101216"/><rect x="2647.1" y="1081.6" width="1.6" height="7" fill="#565d67"/><rect x="2675.5" y="1083.3" width="9.5" height="4.6" fill="#101216"/><rect x="2672.8" y="1081.6" width="1.6" height="7" fill="#565d67"/><rect x="2693.4" y="1075.8" width="68" height="14.3" rx="3" fill="#3d434d" stroke="#4b515b" stroke-width="1.2"/><rect x="2699.9" y="1083.3" width="9.5" height="4.6" fill="#101216"/><rect x="2697.2" y="1081.6" width="1.6" height="7" fill="#565d67"/><rect x="2725.6" y="1083.3" width="9.5" height="4.6" fill="#101216"/><rect x="2722.9" y="1081.6" width="1.6" height="7" fill="#565d67"/><rect x="2751.3" y="1083.3" width="9.5" height="4.6" fill="#101216"/><rect x="2748.6" y="1081.6" width="1.6" height="7" fill="#565d67"/><rect x="2769.2" y="1075.8" width="68" height="14.3" rx="3" fill="#3d434d" stroke="#4b515b" stroke-width="1.2"/><rect x="2775.7" y="1083.3" width="9.5" height="4.6" fill="#101216"/><rect x="2773.0" y="1081.6" width="1.6" height="7" fill="#565d67"/><rect x="2801.4" y="1083.3" width="9.5" height="4.6" fill="#101216"/><rect x="2798.7" y="1081.6" width="1.6" height="7" fill="#565d67"/><rect x="2827.1" y="1083.3" width="9.5" height="4.6" fill="#101216"/><rect x="2824.4" y="1081.6" width="1.6" height="7" fill="#565d67"/><rect x="2039.7" y="1094.5" width="765.6" height="24.4" fill="url(#gcard)"/><circle cx="2048.8" cy="1107.7" r="5.4" fill="#828286"/><path d="M2041.3 1115.5 Q2065.3 1119.0 2089.3 1116.0" fill="none" stroke="#565d67" stroke-width="1.4"/><rect x="2087.0" y="1100.2" width="68" height="14.3" rx="3" fill="#3d434d" stroke="#4b515b" stroke-width="1.2"/><rect x="2093.5" y="1107.7" width="9.5" height="4.6" fill="#101216"/><rect x="2090.8" y="1106.0" width="1.6" height="7" fill="#565d67"/><rect x="2119.2" y="1107.7" width="9.5" height="4.6" fill="#101216"/><rect x="2116.5" y="1106.0" width="1.6" height="7" fill="#565d67"/><rect x="2144.9" y="1107.7" width="9.5" height="4.6" fill="#101216"/><rect x="2142.2" y="1106.0" width="1.6" height="7" fill="#565d67"/><rect x="2162.8" y="1100.2" width="68" height="14.3" rx="3" fill="#3d434d" stroke="#4b515b" stroke-width="1.2"/><rect x="2169.3" y="1107.7" width="9.5" height="4.6" fill="#101216"/><rect x="2166.6" y="1106.0" width="1.6" height="7" fill="#565d67"/><rect x="2195.0" y="1107.7" width="9.5" height="4.6" fill="#101216"/><rect x="2192.3" y="1106.0" width="1.6" height="7" fill="#565d67"/><rect x="2220.7" y="1107.7" width="9.5" height="4.6" fill="#101216"/><rect x="2218.0" y="1106.0" width="1.6" height="7" fill="#565d67"/><rect x="2238.6" y="1100.2" width="68" height="14.3" rx="3" fill="#3d434d" stroke="#4b515b" stroke-width="1.2"/><rect x="2245.1" y="1107.7" width="9.5" height="4.6" fill="#101216"/><rect x="2242.4" y="1106.0" width="1.6" height="7" fill="#565d67"/><rect x="2270.8" y="1107.7" width="9.5" height="4.6" fill="#101216"/><rect x="2268.1" y="1106.0" width="1.6" height="7" fill="#565d67"/><rect x="2296.5" y="1107.7" width="9.5" height="4.6" fill="#101216"/><rect x="2293.8" y="1106.0" width="1.6" height="7" fill="#565d67"/><rect x="2314.4" y="1100.2" width="68" height="14.3" rx="3" fill="#3d434d" stroke="#4b515b" stroke-width="1.2"/><rect x="2320.9" y="1107.7" width="9.5" height="4.6" fill="#101216"/><rect x="2318.2" y="1106.0" width="1.6" height="7" fill="#565d67"/><rect x="2346.6" y="1107.7" width="9.5" height="4.6" fill="#101216"/><rect x="2343.9" y="1106.0" width="1.6" height="7" fill="#565d67"/><rect x="2372.3" y="1107.7" width="9.5" height="4.6" fill="#101216"/><rect x="2369.6" y="1106.0" width="1.6" height="7" fill="#565d67"/><rect x="2390.2" y="1100.2" width="68" height="14.3" rx="3" fill="#3d434d" stroke="#4b515b" stroke-width="1.2"/><rect x="2396.7" y="1107.7" width="9.5" height="4.6" fill="#101216"/><rect x="2394.0" y="1106.0" width="1.6" height="7" fill="#565d67"/><rect x="2422.4" y="1107.7" width="9.5" height="4.6" fill="#101216"/><rect x="2419.7" y="1106.0" width="1.6" height="7" fill="#565d67"/><rect x="2448.1" y="1107.7" width="9.5" height="4.6" fill="#101216"/><rect x="2445.4" y="1106.0" width="1.6" height="7" fill="#565d67"/><rect x="2466.0" y="1100.2" width="68" height="14.3" rx="3" fill="#3d434d" stroke="#4b515b" stroke-width="1.2"/><rect x="2472.5" y="1107.7" width="9.5" height="4.6" fill="#101216"/><rect x="2469.8" y="1106.0" width="1.6" height="7" fill="#565d67"/><rect x="2498.2" y="1107.7" width="9.5" height="4.6" fill="#101216"/><rect x="2495.5" y="1106.0" width="1.6" height="7" fill="#565d67"/><rect x="2523.9" y="1107.7" width="9.5" height="4.6" fill="#101216"/><rect x="2521.2" y="1106.0" width="1.6" height="7" fill="#565d67"/><rect x="2541.8" y="1100.2" width="68" height="14.3" rx="3" fill="#3d434d" stroke="#4b515b" stroke-width="1.2"/><rect x="2548.3" y="1107.7" width="9.5" height="4.6" fill="#101216"/><rect x="2545.6" y="1106.0" width="1.6" height="7" fill="#565d67"/><rect x="2574.0" y="1107.7" width="9.5" height="4.6" fill="#101216"/><rect x="2571.3" y="1106.0" width="1.6" height="7" fill="#565d67"/><rect x="2599.7" y="1107.7" width="9.5" height="4.6" fill="#101216"/><rect x="2597.0" y="1106.0" width="1.6" height="7" fill="#565d67"/><rect x="2617.6" y="1100.2" width="68" height="14.3" rx="3" fill="#3d434d" stroke="#4b515b" stroke-width="1.2"/><rect x="2624.1" y="1107.7" width="9.5" height="4.6" fill="#101216"/><rect x="2621.4" y="1106.0" width="1.6" height="7" fill="#565d67"/><rect x="2649.8" y="1107.7" width="9.5" height="4.6" fill="#101216"/><rect x="2647.1" y="1106.0" width="1.6" height="7" fill="#565d67"/><rect x="2675.5" y="1107.7" width="9.5" height="4.6" fill="#101216"/><rect x="2672.8" y="1106.0" width="1.6" height="7" fill="#565d67"/><rect x="2693.4" y="1100.2" width="68" height="14.3" rx="3" fill="#3d434d" stroke="#4b515b" stroke-width="1.2"/><rect x="2699.9" y="1107.7" width="9.5" height="4.6" fill="#101216"/><rect x="2697.2" y="1106.0" width="1.6" height="7" fill="#565d67"/><rect x="2725.6" y="1107.7" width="9.5" height="4.6" fill="#101216"/><rect x="2722.9" y="1106.0" width="1.6" height="7" fill="#565d67"/><rect x="2751.3" y="1107.7" width="9.5" height="4.6" fill="#101216"/><rect x="2748.6" y="1106.0" width="1.6" height="7" fill="#565d67"/><rect x="2769.2" y="1100.2" width="68" height="14.3" rx="3" fill="#3d434d" stroke="#4b515b" stroke-width="1.2"/><rect x="2775.7" y="1107.7" width="9.5" height="4.6" fill="#101216"/><rect x="2773.0" y="1106.0" width="1.6" height="7" fill="#565d67"/><rect x="2801.4" y="1107.7" width="9.5" height="4.6" fill="#101216"/><rect x="2798.7" y="1106.0" width="1.6" height="7" fill="#565d67"/><rect x="2827.1" y="1107.7" width="9.5" height="4.6" fill="#101216"/><rect x="2824.4" y="1106.0" width="1.6" height="7" fill="#565d67"/><rect x="2039.7" y="1118.9" width="765.6" height="24.4" fill="url(#gcard)"/><circle cx="2048.8" cy="1132.1" r="5.4" fill="#828286"/><path d="M2041.3 1139.9 Q2065.3 1143.4 2089.3 1140.4" fill="none" stroke="#565d67" stroke-width="1.4"/><rect x="2087.0" y="1124.6" width="68" height="14.3" rx="3" fill="#3d434d" stroke="#4b515b" stroke-width="1.2"/><rect x="2093.5" y="1132.1" width="9.5" height="4.6" fill="#101216"/><rect x="2090.8" y="1130.4" width="1.6" height="7" fill="#565d67"/><rect x="2119.2" y="1132.1" width="9.5" height="4.6" fill="#101216"/><rect x="2116.5" y="1130.4" width="1.6" height="7" fill="#565d67"/><rect x="2144.9" y="1132.1" width="9.5" height="4.6" fill="#101216"/><rect x="2142.2" y="1130.4" width="1.6" height="7" fill="#565d67"/><rect x="2162.8" y="1124.6" width="68" height="14.3" rx="3" fill="#3d434d" stroke="#4b515b" stroke-width="1.2"/><rect x="2169.3" y="1132.1" width="9.5" height="4.6" fill="#101216"/><rect x="2166.6" y="1130.4" width="1.6" height="7" fill="#565d67"/><rect x="2195.0" y="1132.1" width="9.5" height="4.6" fill="#101216"/><rect x="2192.3" y="1130.4" width="1.6" height="7" fill="#565d67"/><rect x="2220.7" y="1132.1" width="9.5" height="4.6" fill="#101216"/><rect x="2218.0" y="1130.4" width="1.6" height="7" fill="#565d67"/><rect x="2238.6" y="1124.6" width="68" height="14.3" rx="3" fill="#3d434d" stroke="#4b515b" stroke-width="1.2"/><rect x="2245.1" y="1132.1" width="9.5" height="4.6" fill="#101216"/><rect x="2242.4" y="1130.4" width="1.6" height="7" fill="#565d67"/><rect x="2270.8" y="1132.1" width="9.5" height="4.6" fill="#101216"/><rect x="2268.1" y="1130.4" width="1.6" height="7" fill="#565d67"/><rect x="2296.5" y="1132.1" width="9.5" height="4.6" fill="#101216"/><rect x="2293.8" y="1130.4" width="1.6" height="7" fill="#565d67"/><rect x="2314.4" y="1124.6" width="68" height="14.3" rx="3" fill="#3d434d" stroke="#4b515b" stroke-width="1.2"/><rect x="2320.9" y="1132.1" width="9.5" height="4.6" fill="#101216"/><rect x="2318.2" y="1130.4" width="1.6" height="7" fill="#565d67"/><rect x="2346.6" y="1132.1" width="9.5" height="4.6" fill="#101216"/><rect x="2343.9" y="1130.4" width="1.6" height="7" fill="#565d67"/><rect x="2372.3" y="1132.1" width="9.5" height="4.6" fill="#101216"/><rect x="2369.6" y="1130.4" width="1.6" height="7" fill="#565d67"/><rect x="2390.2" y="1124.6" width="68" height="14.3" rx="3" fill="#3d434d" stroke="#4b515b" stroke-width="1.2"/><rect x="2396.7" y="1132.1" width="9.5" height="4.6" fill="#101216"/><rect x="2394.0" y="1130.4" width="1.6" height="7" fill="#565d67"/><rect x="2422.4" y="1132.1" width="9.5" height="4.6" fill="#101216"/><rect x="2419.7" y="1130.4" width="1.6" height="7" fill="#565d67"/><rect x="2448.1" y="1132.1" width="9.5" height="4.6" fill="#101216"/><rect x="2445.4" y="1130.4" width="1.6" height="7" fill="#565d67"/><rect x="2466.0" y="1124.6" width="68" height="14.3" rx="3" fill="#3d434d" stroke="#4b515b" stroke-width="1.2"/><rect x="2472.5" y="1132.1" width="9.5" height="4.6" fill="#101216"/><rect x="2469.8" y="1130.4" width="1.6" height="7" fill="#565d67"/><rect x="2498.2" y="1132.1" width="9.5" height="4.6" fill="#101216"/><rect x="2495.5" y="1130.4" width="1.6" height="7" fill="#565d67"/><rect x="2523.9" y="1132.1" width="9.5" height="4.6" fill="#101216"/><rect x="2521.2" y="1130.4" width="1.6" height="7" fill="#565d67"/><rect x="2541.8" y="1124.6" width="68" height="14.3" rx="3" fill="#3d434d" stroke="#4b515b" stroke-width="1.2"/><rect x="2548.3" y="1132.1" width="9.5" height="4.6" fill="#101216"/><rect x="2545.6" y="1130.4" width="1.6" height="7" fill="#565d67"/><rect x="2574.0" y="1132.1" width="9.5" height="4.6" fill="#101216"/><rect x="2571.3" y="1130.4" width="1.6" height="7" fill="#565d67"/><rect x="2599.7" y="1132.1" width="9.5" height="4.6" fill="#101216"/><rect x="2597.0" y="1130.4" width="1.6" height="7" fill="#565d67"/><rect x="2617.6" y="1124.6" width="68" height="14.3" rx="3" fill="#3d434d" stroke="#4b515b" stroke-width="1.2"/><rect x="2624.1" y="1132.1" width="9.5" height="4.6" fill="#101216"/><rect x="2621.4" y="1130.4" width="1.6" height="7" fill="#565d67"/><rect x="2649.8" y="1132.1" width="9.5" height="4.6" fill="#101216"/><rect x="2647.1" y="1130.4" width="1.6" height="7" fill="#565d67"/><rect x="2675.5" y="1132.1" width="9.5" height="4.6" fill="#101216"/><rect x="2672.8" y="1130.4" width="1.6" height="7" fill="#565d67"/><rect x="2693.4" y="1124.6" width="68" height="14.3" rx="3" fill="#3d434d" stroke="#4b515b" stroke-width="1.2"/><rect x="2699.9" y="1132.1" width="9.5" height="4.6" fill="#101216"/><rect x="2697.2" y="1130.4" width="1.6" height="7" fill="#565d67"/><rect x="2725.6" y="1132.1" width="9.5" height="4.6" fill="#101216"/><rect x="2722.9" y="1130.4" width="1.6" height="7" fill="#565d67"/><rect x="2751.3" y="1132.1" width="9.5" height="4.6" fill="#101216"/><rect x="2748.6" y="1130.4" width="1.6" height="7" fill="#565d67"/><rect x="2769.2" y="1124.6" width="68" height="14.3" rx="3" fill="#3d434d" stroke="#4b515b" stroke-width="1.2"/><rect x="2775.7" y="1132.1" width="9.5" height="4.6" fill="#101216"/><rect x="2773.0" y="1130.4" width="1.6" height="7" fill="#565d67"/><rect x="2801.4" y="1132.1" width="9.5" height="4.6" fill="#101216"/><rect x="2798.7" y="1130.4" width="1.6" height="7" fill="#565d67"/><rect x="2827.1" y="1132.1" width="9.5" height="4.6" fill="#101216"/><rect x="2824.4" y="1130.4" width="1.6" height="7" fill="#565d67"/><rect x="2039.7" y="1143.3" width="765.6" height="24.4" fill="url(#gcard)"/><circle cx="2048.8" cy="1156.5" r="5.4" fill="#828286"/><path d="M2041.3 1164.3 Q2065.3 1167.8 2089.3 1164.8" fill="none" stroke="#565d67" stroke-width="1.4"/><rect x="2087.0" y="1149.0" width="68" height="14.3" rx="3" fill="#3d434d" stroke="#4b515b" stroke-width="1.2"/><rect x="2093.5" y="1156.5" width="9.5" height="4.6" fill="#101216"/><rect x="2090.8" y="1154.8" width="1.6" height="7" fill="#565d67"/><rect x="2119.2" y="1156.5" width="9.5" height="4.6" fill="#101216"/><rect x="2116.5" y="1154.8" width="1.6" height="7" fill="#565d67"/><rect x="2144.9" y="1156.5" width="9.5" height="4.6" fill="#101216"/><rect x="2142.2" y="1154.8" width="1.6" height="7" fill="#565d67"/><rect x="2162.8" y="1149.0" width="68" height="14.3" rx="3" fill="#3d434d" stroke="#4b515b" stroke-width="1.2"/><rect x="2169.3" y="1156.5" width="9.5" height="4.6" fill="#101216"/><rect x="2166.6" y="1154.8" width="1.6" height="7" fill="#565d67"/><rect x="2195.0" y="1156.5" width="9.5" height="4.6" fill="#101216"/><rect x="2192.3" y="1154.8" width="1.6" height="7" fill="#565d67"/><rect x="2220.7" y="1156.5" width="9.5" height="4.6" fill="#101216"/><rect x="2218.0" y="1154.8" width="1.6" height="7" fill="#565d67"/><rect x="2238.6" y="1149.0" width="68" height="14.3" rx="3" fill="#3d434d" stroke="#4b515b" stroke-width="1.2"/><rect x="2245.1" y="1156.5" width="9.5" height="4.6" fill="#101216"/><rect x="2242.4" y="1154.8" width="1.6" height="7" fill="#565d67"/><rect x="2270.8" y="1156.5" width="9.5" height="4.6" fill="#101216"/><rect x="2268.1" y="1154.8" width="1.6" height="7" fill="#565d67"/><rect x="2296.5" y="1156.5" width="9.5" height="4.6" fill="#101216"/><rect x="2293.8" y="1154.8" width="1.6" height="7" fill="#565d67"/><rect x="2314.4" y="1149.0" width="68" height="14.3" rx="3" fill="#3d434d" stroke="#4b515b" stroke-width="1.2"/><rect x="2320.9" y="1156.5" width="9.5" height="4.6" fill="#101216"/><rect x="2318.2" y="1154.8" width="1.6" height="7" fill="#565d67"/><rect x="2346.6" y="1156.5" width="9.5" height="4.6" fill="#101216"/><rect x="2343.9" y="1154.8" width="1.6" height="7" fill="#565d67"/><rect x="2372.3" y="1156.5" width="9.5" height="4.6" fill="#101216"/><rect x="2369.6" y="1154.8" width="1.6" height="7" fill="#565d67"/><rect x="2390.2" y="1149.0" width="68" height="14.3" rx="3" fill="#3d434d" stroke="#4b515b" stroke-width="1.2"/><rect x="2396.7" y="1156.5" width="9.5" height="4.6" fill="#101216"/><rect x="2394.0" y="1154.8" width="1.6" height="7" fill="#565d67"/><rect x="2422.4" y="1156.5" width="9.5" height="4.6" fill="#101216"/><rect x="2419.7" y="1154.8" width="1.6" height="7" fill="#565d67"/><rect x="2448.1" y="1156.5" width="9.5" height="4.6" fill="#101216"/><rect x="2445.4" y="1154.8" width="1.6" height="7" fill="#565d67"/><rect x="2466.0" y="1149.0" width="68" height="14.3" rx="3" fill="#3d434d" stroke="#4b515b" stroke-width="1.2"/><rect x="2472.5" y="1156.5" width="9.5" height="4.6" fill="#101216"/><rect x="2469.8" y="1154.8" width="1.6" height="7" fill="#565d67"/><rect x="2498.2" y="1156.5" width="9.5" height="4.6" fill="#101216"/><rect x="2495.5" y="1154.8" width="1.6" height="7" fill="#565d67"/><rect x="2523.9" y="1156.5" width="9.5" height="4.6" fill="#101216"/><rect x="2521.2" y="1154.8" width="1.6" height="7" fill="#565d67"/><rect x="2541.8" y="1149.0" width="68" height="14.3" rx="3" fill="#3d434d" stroke="#4b515b" stroke-width="1.2"/><rect x="2548.3" y="1156.5" width="9.5" height="4.6" fill="#101216"/><rect x="2545.6" y="1154.8" width="1.6" height="7" fill="#565d67"/><rect x="2574.0" y="1156.5" width="9.5" height="4.6" fill="#101216"/><rect x="2571.3" y="1154.8" width="1.6" height="7" fill="#565d67"/><rect x="2599.7" y="1156.5" width="9.5" height="4.6" fill="#101216"/><rect x="2597.0" y="1154.8" width="1.6" height="7" fill="#565d67"/><rect x="2617.6" y="1149.0" width="68" height="14.3" rx="3" fill="#3d434d" stroke="#4b515b" stroke-width="1.2"/><rect x="2624.1" y="1156.5" width="9.5" height="4.6" fill="#101216"/><rect x="2621.4" y="1154.8" width="1.6" height="7" fill="#565d67"/><rect x="2649.8" y="1156.5" width="9.5" height="4.6" fill="#101216"/><rect x="2647.1" y="1154.8" width="1.6" height="7" fill="#565d67"/><rect x="2675.5" y="1156.5" width="9.5" height="4.6" fill="#101216"/><rect x="2672.8" y="1154.8" width="1.6" height="7" fill="#565d67"/><rect x="2693.4" y="1149.0" width="68" height="14.3" rx="3" fill="#3d434d" stroke="#4b515b" stroke-width="1.2"/><rect x="2699.9" y="1156.5" width="9.5" height="4.6" fill="#101216"/><rect x="2697.2" y="1154.8" width="1.6" height="7" fill="#565d67"/><rect x="2725.6" y="1156.5" width="9.5" height="4.6" fill="#101216"/><rect x="2722.9" y="1154.8" width="1.6" height="7" fill="#565d67"/><rect x="2751.3" y="1156.5" width="9.5" height="4.6" fill="#101216"/><rect x="2748.6" y="1154.8" width="1.6" height="7" fill="#565d67"/><rect x="2769.2" y="1149.0" width="68" height="14.3" rx="3" fill="#3d434d" stroke="#4b515b" stroke-width="1.2"/><rect x="2775.7" y="1156.5" width="9.5" height="4.6" fill="#101216"/><rect x="2773.0" y="1154.8" width="1.6" height="7" fill="#565d67"/><rect x="2801.4" y="1156.5" width="9.5" height="4.6" fill="#101216"/><rect x="2798.7" y="1154.8" width="1.6" height="7" fill="#565d67"/><rect x="2827.1" y="1156.5" width="9.5" height="4.6" fill="#101216"/><rect x="2824.4" y="1154.8" width="1.6" height="7" fill="#565d67"/><rect x="2039.7" y="1167.7" width="765.6" height="24.4" fill="url(#gcard)"/><circle cx="2048.8" cy="1180.9" r="5.4" fill="#828286"/><path d="M2041.3 1188.7 Q2065.3 1192.2 2089.3 1189.2" fill="none" stroke="#565d67" stroke-width="1.4"/><rect x="2087.0" y="1173.4" width="68" height="14.3" rx="3" fill="#3d434d" stroke="#4b515b" stroke-width="1.2"/><rect x="2093.5" y="1180.9" width="9.5" height="4.6" fill="#101216"/><rect x="2090.8" y="1179.2" width="1.6" height="7" fill="#565d67"/><rect x="2119.2" y="1180.9" width="9.5" height="4.6" fill="#101216"/><rect x="2116.5" y="1179.2" width="1.6" height="7" fill="#565d67"/><rect x="2144.9" y="1180.9" width="9.5" height="4.6" fill="#101216"/><rect x="2142.2" y="1179.2" width="1.6" height="7" fill="#565d67"/><rect x="2162.8" y="1173.4" width="68" height="14.3" rx="3" fill="#3d434d" stroke="#4b515b" stroke-width="1.2"/><rect x="2169.3" y="1180.9" width="9.5" height="4.6" fill="#101216"/><rect x="2166.6" y="1179.2" width="1.6" height="7" fill="#565d67"/><rect x="2195.0" y="1180.9" width="9.5" height="4.6" fill="#101216"/><rect x="2192.3" y="1179.2" width="1.6" height="7" fill="#565d67"/><rect x="2220.7" y="1180.9" width="9.5" height="4.6" fill="#101216"/><rect x="2218.0" y="1179.2" width="1.6" height="7" fill="#565d67"/><rect x="2238.6" y="1173.4" width="68" height="14.3" rx="3" fill="#3d434d" stroke="#4b515b" stroke-width="1.2"/><rect x="2245.1" y="1180.9" width="9.5" height="4.6" fill="#101216"/><rect x="2242.4" y="1179.2" width="1.6" height="7" fill="#565d67"/><rect x="2270.8" y="1180.9" width="9.5" height="4.6" fill="#101216"/><rect x="2268.1" y="1179.2" width="1.6" height="7" fill="#565d67"/><rect x="2296.5" y="1180.9" width="9.5" height="4.6" fill="#101216"/><rect x="2293.8" y="1179.2" width="1.6" height="7" fill="#565d67"/><rect x="2314.4" y="1173.4" width="68" height="14.3" rx="3" fill="#3d434d" stroke="#4b515b" stroke-width="1.2"/><rect x="2320.9" y="1180.9" width="9.5" height="4.6" fill="#101216"/><rect x="2318.2" y="1179.2" width="1.6" height="7" fill="#565d67"/><rect x="2346.6" y="1180.9" width="9.5" height="4.6" fill="#101216"/><rect x="2343.9" y="1179.2" width="1.6" height="7" fill="#565d67"/><rect x="2372.3" y="1180.9" width="9.5" height="4.6" fill="#101216"/><rect x="2369.6" y="1179.2" width="1.6" height="7" fill="#565d67"/><rect x="2390.2" y="1173.4" width="68" height="14.3" rx="3" fill="#3d434d" stroke="#4b515b" stroke-width="1.2"/><rect x="2396.7" y="1180.9" width="9.5" height="4.6" fill="#101216"/><rect x="2394.0" y="1179.2" width="1.6" height="7" fill="#565d67"/><rect x="2422.4" y="1180.9" width="9.5" height="4.6" fill="#101216"/><rect x="2419.7" y="1179.2" width="1.6" height="7" fill="#565d67"/><rect x="2448.1" y="1180.9" width="9.5" height="4.6" fill="#101216"/><rect x="2445.4" y="1179.2" width="1.6" height="7" fill="#565d67"/><rect x="2466.0" y="1173.4" width="68" height="14.3" rx="3" fill="#3d434d" stroke="#4b515b" stroke-width="1.2"/><rect x="2472.5" y="1180.9" width="9.5" height="4.6" fill="#101216"/><rect x="2469.8" y="1179.2" width="1.6" height="7" fill="#565d67"/><rect x="2498.2" y="1180.9" width="9.5" height="4.6" fill="#101216"/><rect x="2495.5" y="1179.2" width="1.6" height="7" fill="#565d67"/><rect x="2523.9" y="1180.9" width="9.5" height="4.6" fill="#101216"/><rect x="2521.2" y="1179.2" width="1.6" height="7" fill="#565d67"/><rect x="2541.8" y="1173.4" width="68" height="14.3" rx="3" fill="#3d434d" stroke="#4b515b" stroke-width="1.2"/><rect x="2548.3" y="1180.9" width="9.5" height="4.6" fill="#101216"/><rect x="2545.6" y="1179.2" width="1.6" height="7" fill="#565d67"/><rect x="2574.0" y="1180.9" width="9.5" height="4.6" fill="#101216"/><rect x="2571.3" y="1179.2" width="1.6" height="7" fill="#565d67"/><rect x="2599.7" y="1180.9" width="9.5" height="4.6" fill="#101216"/><rect x="2597.0" y="1179.2" width="1.6" height="7" fill="#565d67"/><rect x="2617.6" y="1173.4" width="68" height="14.3" rx="3" fill="#3d434d" stroke="#4b515b" stroke-width="1.2"/><rect x="2624.1" y="1180.9" width="9.5" height="4.6" fill="#101216"/><rect x="2621.4" y="1179.2" width="1.6" height="7" fill="#565d67"/><rect x="2649.8" y="1180.9" width="9.5" height="4.6" fill="#101216"/><rect x="2647.1" y="1179.2" width="1.6" height="7" fill="#565d67"/><rect x="2675.5" y="1180.9" width="9.5" height="4.6" fill="#101216"/><rect x="2672.8" y="1179.2" width="1.6" height="7" fill="#565d67"/><rect x="2693.4" y="1173.4" width="68" height="14.3" rx="3" fill="#3d434d" stroke="#4b515b" stroke-width="1.2"/><rect x="2699.9" y="1180.9" width="9.5" height="4.6" fill="#101216"/><rect x="2697.2" y="1179.2" width="1.6" height="7" fill="#565d67"/><rect x="2725.6" y="1180.9" width="9.5" height="4.6" fill="#101216"/><rect x="2722.9" y="1179.2" width="1.6" height="7" fill="#565d67"/><rect x="2751.3" y="1180.9" width="9.5" height="4.6" fill="#101216"/><rect x="2748.6" y="1179.2" width="1.6" height="7" fill="#565d67"/><rect x="2769.2" y="1173.4" width="68" height="14.3" rx="3" fill="#3d434d" stroke="#4b515b" stroke-width="1.2"/><rect x="2775.7" y="1180.9" width="9.5" height="4.6" fill="#101216"/><rect x="2773.0" y="1179.2" width="1.6" height="7" fill="#565d67"/><rect x="2801.4" y="1180.9" width="9.5" height="4.6" fill="#101216"/><rect x="2798.7" y="1179.2" width="1.6" height="7" fill="#565d67"/><rect x="2827.1" y="1180.9" width="9.5" height="4.6" fill="#101216"/><rect x="2824.4" y="1179.2" width="1.6" height="7" fill="#565d67"/><rect x="2039.7" y="1192.1" width="765.6" height="24.4" fill="url(#gcard)"/><circle cx="2048.8" cy="1205.3" r="5.4" fill="#828286"/><path d="M2041.3 1213.1 Q2065.3 1216.6 2089.3 1213.6" fill="none" stroke="#565d67" stroke-width="1.4"/><rect x="2087.0" y="1197.8" width="68" height="14.3" rx="3" fill="#3d434d" stroke="#4b515b" stroke-width="1.2"/><rect x="2093.5" y="1205.3" width="9.5" height="4.6" fill="#101216"/><rect x="2090.8" y="1203.6" width="1.6" height="7" fill="#565d67"/><rect x="2119.2" y="1205.3" width="9.5" height="4.6" fill="#101216"/><rect x="2116.5" y="1203.6" width="1.6" height="7" fill="#565d67"/><rect x="2144.9" y="1205.3" width="9.5" height="4.6" fill="#101216"/><rect x="2142.2" y="1203.6" width="1.6" height="7" fill="#565d67"/><rect x="2162.8" y="1197.8" width="68" height="14.3" rx="3" fill="#3d434d" stroke="#4b515b" stroke-width="1.2"/><rect x="2169.3" y="1205.3" width="9.5" height="4.6" fill="#101216"/><rect x="2166.6" y="1203.6" width="1.6" height="7" fill="#565d67"/><rect x="2195.0" y="1205.3" width="9.5" height="4.6" fill="#101216"/><rect x="2192.3" y="1203.6" width="1.6" height="7" fill="#565d67"/><rect x="2220.7" y="1205.3" width="9.5" height="4.6" fill="#101216"/><rect x="2218.0" y="1203.6" width="1.6" height="7" fill="#565d67"/><rect x="2238.6" y="1197.8" width="68" height="14.3" rx="3" fill="#3d434d" stroke="#4b515b" stroke-width="1.2"/><rect x="2245.1" y="1205.3" width="9.5" height="4.6" fill="#101216"/><rect x="2242.4" y="1203.6" width="1.6" height="7" fill="#565d67"/><rect x="2270.8" y="1205.3" width="9.5" height="4.6" fill="#101216"/><rect x="2268.1" y="1203.6" width="1.6" height="7" fill="#565d67"/><rect x="2296.5" y="1205.3" width="9.5" height="4.6" fill="#101216"/><rect x="2293.8" y="1203.6" width="1.6" height="7" fill="#565d67"/><rect x="2314.4" y="1197.8" width="68" height="14.3" rx="3" fill="#3d434d" stroke="#4b515b" stroke-width="1.2"/><rect x="2320.9" y="1205.3" width="9.5" height="4.6" fill="#101216"/><rect x="2318.2" y="1203.6" width="1.6" height="7" fill="#565d67"/><rect x="2346.6" y="1205.3" width="9.5" height="4.6" fill="#101216"/><rect x="2343.9" y="1203.6" width="1.6" height="7" fill="#565d67"/><rect x="2372.3" y="1205.3" width="9.5" height="4.6" fill="#101216"/><rect x="2369.6" y="1203.6" width="1.6" height="7" fill="#565d67"/><rect x="2390.2" y="1197.8" width="68" height="14.3" rx="3" fill="#3d434d" stroke="#4b515b" stroke-width="1.2"/><rect x="2396.7" y="1205.3" width="9.5" height="4.6" fill="#101216"/><rect x="2394.0" y="1203.6" width="1.6" height="7" fill="#565d67"/><rect x="2422.4" y="1205.3" width="9.5" height="4.6" fill="#101216"/><rect x="2419.7" y="1203.6" width="1.6" height="7" fill="#565d67"/><rect x="2448.1" y="1205.3" width="9.5" height="4.6" fill="#101216"/><rect x="2445.4" y="1203.6" width="1.6" height="7" fill="#565d67"/><rect x="2466.0" y="1197.8" width="68" height="14.3" rx="3" fill="#3d434d" stroke="#4b515b" stroke-width="1.2"/><rect x="2472.5" y="1205.3" width="9.5" height="4.6" fill="#101216"/><rect x="2469.8" y="1203.6" width="1.6" height="7" fill="#565d67"/><rect x="2498.2" y="1205.3" width="9.5" height="4.6" fill="#101216"/><rect x="2495.5" y="1203.6" width="1.6" height="7" fill="#565d67"/><rect x="2523.9" y="1205.3" width="9.5" height="4.6" fill="#101216"/><rect x="2521.2" y="1203.6" width="1.6" height="7" fill="#565d67"/><rect x="2541.8" y="1197.8" width="68" height="14.3" rx="3" fill="#3d434d" stroke="#4b515b" stroke-width="1.2"/><rect x="2548.3" y="1205.3" width="9.5" height="4.6" fill="#101216"/><rect x="2545.6" y="1203.6" width="1.6" height="7" fill="#565d67"/><rect x="2574.0" y="1205.3" width="9.5" height="4.6" fill="#101216"/><rect x="2571.3" y="1203.6" width="1.6" height="7" fill="#565d67"/><rect x="2599.7" y="1205.3" width="9.5" height="4.6" fill="#101216"/><rect x="2597.0" y="1203.6" width="1.6" height="7" fill="#565d67"/><rect x="2617.6" y="1197.8" width="68" height="14.3" rx="3" fill="#3d434d" stroke="#4b515b" stroke-width="1.2"/><rect x="2624.1" y="1205.3" width="9.5" height="4.6" fill="#101216"/><rect x="2621.4" y="1203.6" width="1.6" height="7" fill="#565d67"/><rect x="2649.8" y="1205.3" width="9.5" height="4.6" fill="#101216"/><rect x="2647.1" y="1203.6" width="1.6" height="7" fill="#565d67"/><rect x="2675.5" y="1205.3" width="9.5" height="4.6" fill="#101216"/><rect x="2672.8" y="1203.6" width="1.6" height="7" fill="#565d67"/><rect x="2693.4" y="1197.8" width="68" height="14.3" rx="3" fill="#3d434d" stroke="#4b515b" stroke-width="1.2"/><rect x="2699.9" y="1205.3" width="9.5" height="4.6" fill="#101216"/><rect x="2697.2" y="1203.6" width="1.6" height="7" fill="#565d67"/><rect x="2725.6" y="1205.3" width="9.5" height="4.6" fill="#101216"/><rect x="2722.9" y="1203.6" width="1.6" height="7" fill="#565d67"/><rect x="2751.3" y="1205.3" width="9.5" height="4.6" fill="#101216"/><rect x="2748.6" y="1203.6" width="1.6" height="7" fill="#565d67"/><rect x="2769.2" y="1197.8" width="68" height="14.3" rx="3" fill="#3d434d" stroke="#4b515b" stroke-width="1.2"/><rect x="2775.7" y="1205.3" width="9.5" height="4.6" fill="#101216"/><rect x="2773.0" y="1203.6" width="1.6" height="7" fill="#565d67"/><rect x="2801.4" y="1205.3" width="9.5" height="4.6" fill="#101216"/><rect x="2798.7" y="1203.6" width="1.6" height="7" fill="#565d67"/><rect x="2827.1" y="1205.3" width="9.5" height="4.6" fill="#101216"/><rect x="2824.4" y="1203.6" width="1.6" height="7" fill="#565d67"/><rect x="2039.7" y="1216.5" width="765.6" height="24.4" fill="url(#gcard)"/><circle cx="2048.8" cy="1229.7" r="5.4" fill="#828286"/><path d="M2041.3 1237.5 Q2065.3 1241.0 2089.3 1238.0" fill="none" stroke="#565d67" stroke-width="1.4"/><rect x="2087.0" y="1222.2" width="68" height="14.3" rx="3" fill="#3d434d" stroke="#4b515b" stroke-width="1.2"/><rect x="2093.5" y="1229.7" width="9.5" height="4.6" fill="#101216"/><rect x="2090.8" y="1228.0" width="1.6" height="7" fill="#565d67"/><rect x="2119.2" y="1229.7" width="9.5" height="4.6" fill="#101216"/><rect x="2116.5" y="1228.0" width="1.6" height="7" fill="#565d67"/><rect x="2144.9" y="1229.7" width="9.5" height="4.6" fill="#101216"/><rect x="2142.2" y="1228.0" width="1.6" height="7" fill="#565d67"/><rect x="2162.8" y="1222.2" width="68" height="14.3" rx="3" fill="#3d434d" stroke="#4b515b" stroke-width="1.2"/><rect x="2169.3" y="1229.7" width="9.5" height="4.6" fill="#101216"/><rect x="2166.6" y="1228.0" width="1.6" height="7" fill="#565d67"/><rect x="2195.0" y="1229.7" width="9.5" height="4.6" fill="#101216"/><rect x="2192.3" y="1228.0" width="1.6" height="7" fill="#565d67"/><rect x="2220.7" y="1229.7" width="9.5" height="4.6" fill="#101216"/><rect x="2218.0" y="1228.0" width="1.6" height="7" fill="#565d67"/><rect x="2238.6" y="1222.2" width="68" height="14.3" rx="3" fill="#3d434d" stroke="#4b515b" stroke-width="1.2"/><rect x="2245.1" y="1229.7" width="9.5" height="4.6" fill="#101216"/><rect x="2242.4" y="1228.0" width="1.6" height="7" fill="#565d67"/><rect x="2270.8" y="1229.7" width="9.5" height="4.6" fill="#101216"/><rect x="2268.1" y="1228.0" width="1.6" height="7" fill="#565d67"/><rect x="2296.5" y="1229.7" width="9.5" height="4.6" fill="#101216"/><rect x="2293.8" y="1228.0" width="1.6" height="7" fill="#565d67"/><rect x="2314.4" y="1222.2" width="68" height="14.3" rx="3" fill="#3d434d" stroke="#4b515b" stroke-width="1.2"/><rect x="2320.9" y="1229.7" width="9.5" height="4.6" fill="#101216"/><rect x="2318.2" y="1228.0" width="1.6" height="7" fill="#565d67"/><rect x="2346.6" y="1229.7" width="9.5" height="4.6" fill="#101216"/><rect x="2343.9" y="1228.0" width="1.6" height="7" fill="#565d67"/><rect x="2372.3" y="1229.7" width="9.5" height="4.6" fill="#101216"/><rect x="2369.6" y="1228.0" width="1.6" height="7" fill="#565d67"/><rect x="2390.2" y="1222.2" width="68" height="14.3" rx="3" fill="#3d434d" stroke="#4b515b" stroke-width="1.2"/><rect x="2396.7" y="1229.7" width="9.5" height="4.6" fill="#101216"/><rect x="2394.0" y="1228.0" width="1.6" height="7" fill="#565d67"/><rect x="2422.4" y="1229.7" width="9.5" height="4.6" fill="#101216"/><rect x="2419.7" y="1228.0" width="1.6" height="7" fill="#565d67"/><rect x="2448.1" y="1229.7" width="9.5" height="4.6" fill="#101216"/><rect x="2445.4" y="1228.0" width="1.6" height="7" fill="#565d67"/><rect x="2466.0" y="1222.2" width="68" height="14.3" rx="3" fill="#3d434d" stroke="#4b515b" stroke-width="1.2"/><rect x="2472.5" y="1229.7" width="9.5" height="4.6" fill="#101216"/><rect x="2469.8" y="1228.0" width="1.6" height="7" fill="#565d67"/><rect x="2498.2" y="1229.7" width="9.5" height="4.6" fill="#101216"/><rect x="2495.5" y="1228.0" width="1.6" height="7" fill="#565d67"/><rect x="2523.9" y="1229.7" width="9.5" height="4.6" fill="#101216"/><rect x="2521.2" y="1228.0" width="1.6" height="7" fill="#565d67"/><rect x="2541.8" y="1222.2" width="68" height="14.3" rx="3" fill="#3d434d" stroke="#4b515b" stroke-width="1.2"/><rect x="2548.3" y="1229.7" width="9.5" height="4.6" fill="#101216"/><rect x="2545.6" y="1228.0" width="1.6" height="7" fill="#565d67"/><rect x="2574.0" y="1229.7" width="9.5" height="4.6" fill="#101216"/><rect x="2571.3" y="1228.0" width="1.6" height="7" fill="#565d67"/><rect x="2599.7" y="1229.7" width="9.5" height="4.6" fill="#101216"/><rect x="2597.0" y="1228.0" width="1.6" height="7" fill="#565d67"/><rect x="2617.6" y="1222.2" width="68" height="14.3" rx="3" fill="#3d434d" stroke="#4b515b" stroke-width="1.2"/><rect x="2624.1" y="1229.7" width="9.5" height="4.6" fill="#101216"/><rect x="2621.4" y="1228.0" width="1.6" height="7" fill="#565d67"/><rect x="2649.8" y="1229.7" width="9.5" height="4.6" fill="#101216"/><rect x="2647.1" y="1228.0" width="1.6" height="7" fill="#565d67"/><rect x="2675.5" y="1229.7" width="9.5" height="4.6" fill="#101216"/><rect x="2672.8" y="1228.0" width="1.6" height="7" fill="#565d67"/><rect x="2693.4" y="1222.2" width="68" height="14.3" rx="3" fill="#3d434d" stroke="#4b515b" stroke-width="1.2"/><rect x="2699.9" y="1229.7" width="9.5" height="4.6" fill="#101216"/><rect x="2697.2" y="1228.0" width="1.6" height="7" fill="#565d67"/><rect x="2725.6" y="1229.7" width="9.5" height="4.6" fill="#101216"/><rect x="2722.9" y="1228.0" width="1.6" height="7" fill="#565d67"/><rect x="2751.3" y="1229.7" width="9.5" height="4.6" fill="#101216"/><rect x="2748.6" y="1228.0" width="1.6" height="7" fill="#565d67"/><rect x="2769.2" y="1222.2" width="68" height="14.3" rx="3" fill="#3d434d" stroke="#4b515b" stroke-width="1.2"/><rect x="2775.7" y="1229.7" width="9.5" height="4.6" fill="#101216"/><rect x="2773.0" y="1228.0" width="1.6" height="7" fill="#565d67"/><rect x="2801.4" y="1229.7" width="9.5" height="4.6" fill="#101216"/><rect x="2798.7" y="1228.0" width="1.6" height="7" fill="#565d67"/><rect x="2827.1" y="1229.7" width="9.5" height="4.6" fill="#101216"/><rect x="2824.4" y="1228.0" width="1.6" height="7" fill="#565d67"/><rect x="2039.7" y="1240.9" width="765.6" height="24.4" fill="url(#gcard)"/><circle cx="2048.8" cy="1254.1" r="5.4" fill="#828286"/><path d="M2041.3 1261.9 Q2065.3 1265.4 2089.3 1262.4" fill="none" stroke="#565d67" stroke-width="1.4"/><rect x="2087.0" y="1246.6" width="68" height="14.3" rx="3" fill="#3d434d" stroke="#4b515b" stroke-width="1.2"/><rect x="2093.5" y="1254.1" width="9.5" height="4.6" fill="#101216"/><rect x="2090.8" y="1252.4" width="1.6" height="7" fill="#565d67"/><rect x="2119.2" y="1254.1" width="9.5" height="4.6" fill="#101216"/><rect x="2116.5" y="1252.4" width="1.6" height="7" fill="#565d67"/><rect x="2144.9" y="1254.1" width="9.5" height="4.6" fill="#101216"/><rect x="2142.2" y="1252.4" width="1.6" height="7" fill="#565d67"/><rect x="2162.8" y="1246.6" width="68" height="14.3" rx="3" fill="#3d434d" stroke="#4b515b" stroke-width="1.2"/><rect x="2169.3" y="1254.1" width="9.5" height="4.6" fill="#101216"/><rect x="2166.6" y="1252.4" width="1.6" height="7" fill="#565d67"/><rect x="2195.0" y="1254.1" width="9.5" height="4.6" fill="#101216"/><rect x="2192.3" y="1252.4" width="1.6" height="7" fill="#565d67"/><rect x="2220.7" y="1254.1" width="9.5" height="4.6" fill="#101216"/><rect x="2218.0" y="1252.4" width="1.6" height="7" fill="#565d67"/><rect x="2238.6" y="1246.6" width="68" height="14.3" rx="3" fill="#3d434d" stroke="#4b515b" stroke-width="1.2"/><rect x="2245.1" y="1254.1" width="9.5" height="4.6" fill="#101216"/><rect x="2242.4" y="1252.4" width="1.6" height="7" fill="#565d67"/><rect x="2270.8" y="1254.1" width="9.5" height="4.6" fill="#101216"/><rect x="2268.1" y="1252.4" width="1.6" height="7" fill="#565d67"/><rect x="2296.5" y="1254.1" width="9.5" height="4.6" fill="#101216"/><rect x="2293.8" y="1252.4" width="1.6" height="7" fill="#565d67"/><rect x="2314.4" y="1246.6" width="68" height="14.3" rx="3" fill="#3d434d" stroke="#4b515b" stroke-width="1.2"/><rect x="2320.9" y="1254.1" width="9.5" height="4.6" fill="#101216"/><rect x="2318.2" y="1252.4" width="1.6" height="7" fill="#565d67"/><rect x="2346.6" y="1254.1" width="9.5" height="4.6" fill="#101216"/><rect x="2343.9" y="1252.4" width="1.6" height="7" fill="#565d67"/><rect x="2372.3" y="1254.1" width="9.5" height="4.6" fill="#101216"/><rect x="2369.6" y="1252.4" width="1.6" height="7" fill="#565d67"/><rect x="2390.2" y="1246.6" width="68" height="14.3" rx="3" fill="#3d434d" stroke="#4b515b" stroke-width="1.2"/><rect x="2396.7" y="1254.1" width="9.5" height="4.6" fill="#101216"/><rect x="2394.0" y="1252.4" width="1.6" height="7" fill="#565d67"/><rect x="2422.4" y="1254.1" width="9.5" height="4.6" fill="#101216"/><rect x="2419.7" y="1252.4" width="1.6" height="7" fill="#565d67"/><rect x="2448.1" y="1254.1" width="9.5" height="4.6" fill="#101216"/><rect x="2445.4" y="1252.4" width="1.6" height="7" fill="#565d67"/><rect x="2466.0" y="1246.6" width="68" height="14.3" rx="3" fill="#3d434d" stroke="#4b515b" stroke-width="1.2"/><rect x="2472.5" y="1254.1" width="9.5" height="4.6" fill="#101216"/><rect x="2469.8" y="1252.4" width="1.6" height="7" fill="#565d67"/><rect x="2498.2" y="1254.1" width="9.5" height="4.6" fill="#101216"/><rect x="2495.5" y="1252.4" width="1.6" height="7" fill="#565d67"/><rect x="2523.9" y="1254.1" width="9.5" height="4.6" fill="#101216"/><rect x="2521.2" y="1252.4" width="1.6" height="7" fill="#565d67"/><rect x="2541.8" y="1246.6" width="68" height="14.3" rx="3" fill="#3d434d" stroke="#4b515b" stroke-width="1.2"/><rect x="2548.3" y="1254.1" width="9.5" height="4.6" fill="#101216"/><rect x="2545.6" y="1252.4" width="1.6" height="7" fill="#565d67"/><rect x="2574.0" y="1254.1" width="9.5" height="4.6" fill="#101216"/><rect x="2571.3" y="1252.4" width="1.6" height="7" fill="#565d67"/><rect x="2599.7" y="1254.1" width="9.5" height="4.6" fill="#101216"/><rect x="2597.0" y="1252.4" width="1.6" height="7" fill="#565d67"/><rect x="2617.6" y="1246.6" width="68" height="14.3" rx="3" fill="#3d434d" stroke="#4b515b" stroke-width="1.2"/><rect x="2624.1" y="1254.1" width="9.5" height="4.6" fill="#101216"/><rect x="2621.4" y="1252.4" width="1.6" height="7" fill="#565d67"/><rect x="2649.8" y="1254.1" width="9.5" height="4.6" fill="#101216"/><rect x="2647.1" y="1252.4" width="1.6" height="7" fill="#565d67"/><rect x="2675.5" y="1254.1" width="9.5" height="4.6" fill="#101216"/><rect x="2672.8" y="1252.4" width="1.6" height="7" fill="#565d67"/><rect x="2693.4" y="1246.6" width="68" height="14.3" rx="3" fill="#3d434d" stroke="#4b515b" stroke-width="1.2"/><rect x="2699.9" y="1254.1" width="9.5" height="4.6" fill="#101216"/><rect x="2697.2" y="1252.4" width="1.6" height="7" fill="#565d67"/><rect x="2725.6" y="1254.1" width="9.5" height="4.6" fill="#101216"/><rect x="2722.9" y="1252.4" width="1.6" height="7" fill="#565d67"/><rect x="2751.3" y="1254.1" width="9.5" height="4.6" fill="#101216"/><rect x="2748.6" y="1252.4" width="1.6" height="7" fill="#565d67"/><rect x="2769.2" y="1246.6" width="68" height="14.3" rx="3" fill="#3d434d" stroke="#4b515b" stroke-width="1.2"/><rect x="2775.7" y="1254.1" width="9.5" height="4.6" fill="#101216"/><rect x="2773.0" y="1252.4" width="1.6" height="7" fill="#565d67"/><rect x="2801.4" y="1254.1" width="9.5" height="4.6" fill="#101216"/><rect x="2798.7" y="1252.4" width="1.6" height="7" fill="#565d67"/><rect x="2827.1" y="1254.1" width="9.5" height="4.6" fill="#101216"/><rect x="2824.4" y="1252.4" width="1.6" height="7" fill="#565d67"/><rect x="2039.7" y="1265.3" width="765.6" height="24.4" fill="url(#gcard)"/><circle cx="2048.8" cy="1278.5" r="5.4" fill="#828286"/><path d="M2041.3 1286.3 Q2065.3 1289.8 2089.3 1286.8" fill="none" stroke="#565d67" stroke-width="1.4"/><rect x="2087.0" y="1271.0" width="68" height="14.3" rx="3" fill="#3d434d" stroke="#4b515b" stroke-width="1.2"/><rect x="2093.5" y="1278.5" width="9.5" height="4.6" fill="#101216"/><rect x="2090.8" y="1276.8" width="1.6" height="7" fill="#565d67"/><rect x="2119.2" y="1278.5" width="9.5" height="4.6" fill="#101216"/><rect x="2116.5" y="1276.8" width="1.6" height="7" fill="#565d67"/><rect x="2144.9" y="1278.5" width="9.5" height="4.6" fill="#101216"/><rect x="2142.2" y="1276.8" width="1.6" height="7" fill="#565d67"/><rect x="2162.8" y="1271.0" width="68" height="14.3" rx="3" fill="#3d434d" stroke="#4b515b" stroke-width="1.2"/><rect x="2169.3" y="1278.5" width="9.5" height="4.6" fill="#101216"/><rect x="2166.6" y="1276.8" width="1.6" height="7" fill="#565d67"/><rect x="2195.0" y="1278.5" width="9.5" height="4.6" fill="#101216"/><rect x="2192.3" y="1276.8" width="1.6" height="7" fill="#565d67"/><rect x="2220.7" y="1278.5" width="9.5" height="4.6" fill="#101216"/><rect x="2218.0" y="1276.8" width="1.6" height="7" fill="#565d67"/><rect x="2238.6" y="1271.0" width="68" height="14.3" rx="3" fill="#3d434d" stroke="#4b515b" stroke-width="1.2"/><rect x="2245.1" y="1278.5" width="9.5" height="4.6" fill="#101216"/><rect x="2242.4" y="1276.8" width="1.6" height="7" fill="#565d67"/><rect x="2270.8" y="1278.5" width="9.5" height="4.6" fill="#101216"/><rect x="2268.1" y="1276.8" width="1.6" height="7" fill="#565d67"/><rect x="2296.5" y="1278.5" width="9.5" height="4.6" fill="#101216"/><rect x="2293.8" y="1276.8" width="1.6" height="7" fill="#565d67"/><rect x="2314.4" y="1271.0" width="68" height="14.3" rx="3" fill="#3d434d" stroke="#4b515b" stroke-width="1.2"/><rect x="2320.9" y="1278.5" width="9.5" height="4.6" fill="#101216"/><rect x="2318.2" y="1276.8" width="1.6" height="7" fill="#565d67"/><rect x="2346.6" y="1278.5" width="9.5" height="4.6" fill="#101216"/><rect x="2343.9" y="1276.8" width="1.6" height="7" fill="#565d67"/><rect x="2372.3" y="1278.5" width="9.5" height="4.6" fill="#101216"/><rect x="2369.6" y="1276.8" width="1.6" height="7" fill="#565d67"/><rect x="2390.2" y="1271.0" width="68" height="14.3" rx="3" fill="#3d434d" stroke="#4b515b" stroke-width="1.2"/><rect x="2396.7" y="1278.5" width="9.5" height="4.6" fill="#101216"/><rect x="2394.0" y="1276.8" width="1.6" height="7" fill="#565d67"/><rect x="2422.4" y="1278.5" width="9.5" height="4.6" fill="#101216"/><rect x="2419.7" y="1276.8" width="1.6" height="7" fill="#565d67"/><rect x="2448.1" y="1278.5" width="9.5" height="4.6" fill="#101216"/><rect x="2445.4" y="1276.8" width="1.6" height="7" fill="#565d67"/><rect x="2466.0" y="1271.0" width="68" height="14.3" rx="3" fill="#3d434d" stroke="#4b515b" stroke-width="1.2"/><rect x="2472.5" y="1278.5" width="9.5" height="4.6" fill="#101216"/><rect x="2469.8" y="1276.8" width="1.6" height="7" fill="#565d67"/><rect x="2498.2" y="1278.5" width="9.5" height="4.6" fill="#101216"/><rect x="2495.5" y="1276.8" width="1.6" height="7" fill="#565d67"/><rect x="2523.9" y="1278.5" width="9.5" height="4.6" fill="#101216"/><rect x="2521.2" y="1276.8" width="1.6" height="7" fill="#565d67"/><rect x="2541.8" y="1271.0" width="68" height="14.3" rx="3" fill="#3d434d" stroke="#4b515b" stroke-width="1.2"/><rect x="2548.3" y="1278.5" width="9.5" height="4.6" fill="#101216"/><rect x="2545.6" y="1276.8" width="1.6" height="7" fill="#565d67"/><rect x="2574.0" y="1278.5" width="9.5" height="4.6" fill="#101216"/><rect x="2571.3" y="1276.8" width="1.6" height="7" fill="#565d67"/><rect x="2599.7" y="1278.5" width="9.5" height="4.6" fill="#101216"/><rect x="2597.0" y="1276.8" width="1.6" height="7" fill="#565d67"/><rect x="2617.6" y="1271.0" width="68" height="14.3" rx="3" fill="#3d434d" stroke="#4b515b" stroke-width="1.2"/><rect x="2624.1" y="1278.5" width="9.5" height="4.6" fill="#101216"/><rect x="2621.4" y="1276.8" width="1.6" height="7" fill="#565d67"/><rect x="2649.8" y="1278.5" width="9.5" height="4.6" fill="#101216"/><rect x="2647.1" y="1276.8" width="1.6" height="7" fill="#565d67"/><rect x="2675.5" y="1278.5" width="9.5" height="4.6" fill="#101216"/><rect x="2672.8" y="1276.8" width="1.6" height="7" fill="#565d67"/><rect x="2693.4" y="1271.0" width="68" height="14.3" rx="3" fill="#3d434d" stroke="#4b515b" stroke-width="1.2"/><rect x="2699.9" y="1278.5" width="9.5" height="4.6" fill="#101216"/><rect x="2697.2" y="1276.8" width="1.6" height="7" fill="#565d67"/><rect x="2725.6" y="1278.5" width="9.5" height="4.6" fill="#101216"/><rect x="2722.9" y="1276.8" width="1.6" height="7" fill="#565d67"/><rect x="2751.3" y="1278.5" width="9.5" height="4.6" fill="#101216"/><rect x="2748.6" y="1276.8" width="1.6" height="7" fill="#565d67"/><rect x="2769.2" y="1271.0" width="68" height="14.3" rx="3" fill="#3d434d" stroke="#4b515b" stroke-width="1.2"/><rect x="2775.7" y="1278.5" width="9.5" height="4.6" fill="#101216"/><rect x="2773.0" y="1276.8" width="1.6" height="7" fill="#565d67"/><rect x="2801.4" y="1278.5" width="9.5" height="4.6" fill="#101216"/><rect x="2798.7" y="1276.8" width="1.6" height="7" fill="#565d67"/><rect x="2827.1" y="1278.5" width="9.5" height="4.6" fill="#101216"/><rect x="2824.4" y="1276.8" width="1.6" height="7" fill="#565d67"/><rect x="2039.7" y="1289.7" width="765.6" height="24.4" fill="url(#gcard)"/><circle cx="2048.8" cy="1302.9" r="5.4" fill="#828286"/><path d="M2041.3 1310.7 Q2065.3 1314.2 2089.3 1311.2" fill="none" stroke="#565d67" stroke-width="1.4"/><rect x="2087.0" y="1295.4" width="68" height="14.3" rx="3" fill="#3d434d" stroke="#4b515b" stroke-width="1.2"/><rect x="2093.5" y="1302.9" width="9.5" height="4.6" fill="#101216"/><rect x="2090.8" y="1301.2" width="1.6" height="7" fill="#565d67"/><rect x="2119.2" y="1302.9" width="9.5" height="4.6" fill="#101216"/><rect x="2116.5" y="1301.2" width="1.6" height="7" fill="#565d67"/><rect x="2144.9" y="1302.9" width="9.5" height="4.6" fill="#101216"/><rect x="2142.2" y="1301.2" width="1.6" height="7" fill="#565d67"/><rect x="2162.8" y="1295.4" width="68" height="14.3" rx="3" fill="#3d434d" stroke="#4b515b" stroke-width="1.2"/><rect x="2169.3" y="1302.9" width="9.5" height="4.6" fill="#101216"/><rect x="2166.6" y="1301.2" width="1.6" height="7" fill="#565d67"/><rect x="2195.0" y="1302.9" width="9.5" height="4.6" fill="#101216"/><rect x="2192.3" y="1301.2" width="1.6" height="7" fill="#565d67"/><rect x="2220.7" y="1302.9" width="9.5" height="4.6" fill="#101216"/><rect x="2218.0" y="1301.2" width="1.6" height="7" fill="#565d67"/><rect x="2238.6" y="1295.4" width="68" height="14.3" rx="3" fill="#3d434d" stroke="#4b515b" stroke-width="1.2"/><rect x="2245.1" y="1302.9" width="9.5" height="4.6" fill="#101216"/><rect x="2242.4" y="1301.2" width="1.6" height="7" fill="#565d67"/><rect x="2270.8" y="1302.9" width="9.5" height="4.6" fill="#101216"/><rect x="2268.1" y="1301.2" width="1.6" height="7" fill="#565d67"/><rect x="2296.5" y="1302.9" width="9.5" height="4.6" fill="#101216"/><rect x="2293.8" y="1301.2" width="1.6" height="7" fill="#565d67"/><rect x="2314.4" y="1295.4" width="68" height="14.3" rx="3" fill="#3d434d" stroke="#4b515b" stroke-width="1.2"/><rect x="2320.9" y="1302.9" width="9.5" height="4.6" fill="#101216"/><rect x="2318.2" y="1301.2" width="1.6" height="7" fill="#565d67"/><rect x="2346.6" y="1302.9" width="9.5" height="4.6" fill="#101216"/><rect x="2343.9" y="1301.2" width="1.6" height="7" fill="#565d67"/><rect x="2372.3" y="1302.9" width="9.5" height="4.6" fill="#101216"/><rect x="2369.6" y="1301.2" width="1.6" height="7" fill="#565d67"/><rect x="2390.2" y="1295.4" width="68" height="14.3" rx="3" fill="#3d434d" stroke="#4b515b" stroke-width="1.2"/><rect x="2396.7" y="1302.9" width="9.5" height="4.6" fill="#101216"/><rect x="2394.0" y="1301.2" width="1.6" height="7" fill="#565d67"/><rect x="2422.4" y="1302.9" width="9.5" height="4.6" fill="#101216"/><rect x="2419.7" y="1301.2" width="1.6" height="7" fill="#565d67"/><rect x="2448.1" y="1302.9" width="9.5" height="4.6" fill="#101216"/><rect x="2445.4" y="1301.2" width="1.6" height="7" fill="#565d67"/><rect x="2466.0" y="1295.4" width="68" height="14.3" rx="3" fill="#3d434d" stroke="#4b515b" stroke-width="1.2"/><rect x="2472.5" y="1302.9" width="9.5" height="4.6" fill="#101216"/><rect x="2469.8" y="1301.2" width="1.6" height="7" fill="#565d67"/><rect x="2498.2" y="1302.9" width="9.5" height="4.6" fill="#101216"/><rect x="2495.5" y="1301.2" width="1.6" height="7" fill="#565d67"/><rect x="2523.9" y="1302.9" width="9.5" height="4.6" fill="#101216"/><rect x="2521.2" y="1301.2" width="1.6" height="7" fill="#565d67"/><rect x="2541.8" y="1295.4" width="68" height="14.3" rx="3" fill="#3d434d" stroke="#4b515b" stroke-width="1.2"/><rect x="2548.3" y="1302.9" width="9.5" height="4.6" fill="#101216"/><rect x="2545.6" y="1301.2" width="1.6" height="7" fill="#565d67"/><rect x="2574.0" y="1302.9" width="9.5" height="4.6" fill="#101216"/><rect x="2571.3" y="1301.2" width="1.6" height="7" fill="#565d67"/><rect x="2599.7" y="1302.9" width="9.5" height="4.6" fill="#101216"/><rect x="2597.0" y="1301.2" width="1.6" height="7" fill="#565d67"/><rect x="2617.6" y="1295.4" width="68" height="14.3" rx="3" fill="#3d434d" stroke="#4b515b" stroke-width="1.2"/><rect x="2624.1" y="1302.9" width="9.5" height="4.6" fill="#101216"/><rect x="2621.4" y="1301.2" width="1.6" height="7" fill="#565d67"/><rect x="2649.8" y="1302.9" width="9.5" height="4.6" fill="#101216"/><rect x="2647.1" y="1301.2" width="1.6" height="7" fill="#565d67"/><rect x="2675.5" y="1302.9" width="9.5" height="4.6" fill="#101216"/><rect x="2672.8" y="1301.2" width="1.6" height="7" fill="#565d67"/><rect x="2693.4" y="1295.4" width="68" height="14.3" rx="3" fill="#3d434d" stroke="#4b515b" stroke-width="1.2"/><rect x="2699.9" y="1302.9" width="9.5" height="4.6" fill="#101216"/><rect x="2697.2" y="1301.2" width="1.6" height="7" fill="#565d67"/><rect x="2725.6" y="1302.9" width="9.5" height="4.6" fill="#101216"/><rect x="2722.9" y="1301.2" width="1.6" height="7" fill="#565d67"/><rect x="2751.3" y="1302.9" width="9.5" height="4.6" fill="#101216"/><rect x="2748.6" y="1301.2" width="1.6" height="7" fill="#565d67"/><rect x="2769.2" y="1295.4" width="68" height="14.3" rx="3" fill="#3d434d" stroke="#4b515b" stroke-width="1.2"/><rect x="2775.7" y="1302.9" width="9.5" height="4.6" fill="#101216"/><rect x="2773.0" y="1301.2" width="1.6" height="7" fill="#565d67"/><rect x="2801.4" y="1302.9" width="9.5" height="4.6" fill="#101216"/><rect x="2798.7" y="1301.2" width="1.6" height="7" fill="#565d67"/><rect x="2827.1" y="1302.9" width="9.5" height="4.6" fill="#101216"/><rect x="2824.4" y="1301.2" width="1.6" height="7" fill="#565d67"/><rect x="2039.7" y="1314.1" width="765.6" height="15.5" fill="#2a2f38"/><rect x="2039.7" y="1314.1" width="765.6" height="2" fill="#1d2128"/><rect x="2005.3" y="972.5" width="34.4" height="357.1" fill="#2e333c"/><rect x="2038.7" y="972.5" width="1.8" height="357.1" fill="#1f232a"/><rect x="2014.8" y="1107.7" width="13.500" height="82" rx="2" fill="url(#ghandle)"/><circle cx="2022.0" cy="980.0" r="5.6" fill="#828286"/><circle cx="2022.0" cy="1318.6" r="5.3" fill="#828286"/><rect x="1394.05" y="1113.35" width="416" height="37.9" fill="url(#gsrv)"/><rect x="1436.05" y="1118.55" width="166" height="5.9" fill="url(#gslot)" stroke="#1a1a1d" stroke-width="2.2"/><rect x="1436.05" y="1132.25" width="166" height="5.7" fill="url(#gslot)" stroke="#1a1a1d" stroke-width="2.2"/><rect x="1643.45" y="1116.75" width="124.6" height="22.4" fill="#9d9da0" stroke="#88888c" stroke-width="1.3"/><rect x="1652.55" y="1119.35" width="107" height="19.7" fill="#949497" stroke="#8a8a8e" stroke-width="1"/><rect x="1744.05" y="1117.35" width="24" height="23.9" fill="#9d9da0" stroke="#88888c" stroke-width="1.5"/><rect x="1752.05" y="1117.35" width="8" height="23.9" fill="#a3a3a6" stroke="#8b8b8f" stroke-width="1"/><rect x="1675.05" y="1123.6499999999999" width="51" height="6" fill="#357a5c" stroke="#202024" stroke-width="1"/><ellipse cx="1671.05" cy="1133.4499999999998" rx="6.6" ry="2.3" fill="#85858a" stroke="#3c3c40" stroke-width="1.6"/><ellipse cx="1686.25" cy="1133.4499999999998" rx="6.6" ry="2.3" fill="#85858a" stroke="#3c3c40" stroke-width="1.6"/><ellipse cx="1701.45" cy="1133.4499999999998" rx="6.6" ry="2.3" fill="#85858a" stroke="#3c3c40" stroke-width="1.6"/><ellipse cx="1716.6499999999999" cy="1133.4499999999998" rx="6.6" ry="2.3" fill="#85858a" stroke="#3c3c40" stroke-width="1.6"/><ellipse cx="1731.85" cy="1133.4499999999998" rx="6.6" ry="2.3" fill="#85858a" stroke="#3c3c40" stroke-width="1.6"/><line x1="1436.05" y1="1145.1499999999999" x2="1768.05" y2="1145.1499999999999" stroke="#7c7c80" stroke-width="1.6"/><rect x="1395.05" y="1114.35" width="20.2" height="35.9" fill="url(#grail)" stroke="#121215" stroke-width="2.4"/><line x1="1394.05" y1="1132.3" x2="1416.25" y2="1132.3" stroke="#1a1a1d" stroke-width="2"/><ellipse cx="1405.1499999999999" cy="1115.35" rx="2.6" ry="2.2" fill="#85858a" stroke="#17171a" stroke-width="2"/><ellipse cx="1405.1499999999999" cy="1129.7" rx="2.6" ry="2.2" fill="#85858a" stroke="#17171a" stroke-width="2"/><ellipse cx="1405.1499999999999" cy="1134.8999999999999" rx="2.6" ry="2.2" fill="#85858a" stroke="#17171a" stroke-width="2"/><ellipse cx="1405.1499999999999" cy="1149.25" rx="2.6" ry="2.2" fill="#85858a" stroke="#17171a" stroke-width="2"/><rect x="1788.85" y="1114.35" width="20.2" height="35.9" fill="url(#grail)" stroke="#121215" stroke-width="2.4"/><line x1="1787.85" y1="1132.3" x2="1810.05" y2="1132.3" stroke="#1a1a1d" stroke-width="2"/><ellipse cx="1798.9499999999998" cy="1115.35" rx="2.6" ry="2.2" fill="#85858a" stroke="#17171a" stroke-width="2"/><ellipse cx="1798.9499999999998" cy="1129.7" rx="2.6" ry="2.2" fill="#85858a" stroke="#17171a" stroke-width="2"/><ellipse cx="1798.9499999999998" cy="1134.8999999999999" rx="2.6" ry="2.2" fill="#85858a" stroke="#17171a" stroke-width="2"/><ellipse cx="1798.9499999999998" cy="1149.25" rx="2.6" ry="2.2" fill="#85858a" stroke="#17171a" stroke-width="2"/><line x1="1394.05" y1="1114.1499999999999" x2="1810.05" y2="1114.1499999999999" stroke="#1a1a1d" stroke-width="1.8"/><line x1="1394.05" y1="1150.45" x2="1810.05" y2="1150.45" stroke="#2a2a2d" stroke-width="1.8"/><rect x="1394.05" y="1113.35" width="416" height="37.9" fill="none" stroke="#9f9d28" stroke-width="6.5"/></g></svg>
<div class="lbl" style="left:1642px;top:368.90px">Patch Panel 20 - Patch Panel</div>
<div class="lbl" style="left:1642px;top:463.40px">mpo_switch</div>
<div class="lbl" style="left:1642px;top:500.70px">DC1-RM1-Switch1</div>
<div class="lbl" style="left:1642px;top:557.90px">localhost.device42.pvt</div>
<div class="lbl" style="left:1642px;top:746.90px">Patch Panel 16 - 48-Ports Patch Panel</div>
<div class="lbl" style="left:1642px;top:1294.80px">ciscoxl23</div>
<div class="lbl" style="left:1070.5px;top:1294.80px">ups143 / GA07G41017 / 10.42.6.125</div>
<div class="lbl" style="left:1071px;top:1343.20px">IBM PDU / 10.42.255.248</div>
<div class="lbl" style="left:2213.3px;top:368.90px">testports</div>
<div class="lbl" style="left:2213.3px;top:425.60px">apic1</div>
<div class="lbl" style="left:2213px;top:633.50px">chassis-02</div>
<div class="lbl" style="left:2213.3px;top:1068.50px">new-switch</div>
<div class="lbl" style="left:1601.8px;top:1116.90px">LV_B_0</div>
</div>
<div class="abs" style="left:790px;top:1403px;width:1209px;height:13px;border-radius:6.5px;background:#7e7e80"></div>
<div class="abs" style="left:2283px;top:851px;width:13px;height:564px;border-radius:6.5px;background:rgba(100,100,104,.55)"></div>
<svg style="left:0;top:0;filter:drop-shadow(0 2px 3px rgba(60,60,60,.45))" width="1" height="1"><polygon points="1075.2,1244.6 1337.4,1143 1333.2,1131 1379.3,1136 1347.2,1169.2 1343,1157.3 1077,1248.400" fill="#f53546" stroke="#f53546" stroke-width="3" stroke-linejoin="round"/></svg>
<div class="abs" style="left:2362px;top:273.500px;width:31px;height:31px;border-radius:50%;background:#858588"></div>
<span class="t" style="left:2373.2px;top:278.5px;font-size:20px;font-weight:700;font-family:'Liberation Serif',serif;color:#a2a2a5">i</span>
<svg style="left:0;top:0" width="1" height="1" fill="none" stroke="#1c54a0" stroke-width="3.600" stroke-linecap="round" stroke-linejoin="round"><polyline points="2366,483 2375.8,491.500 2385.600,483"/></svg>
<svg style="left:0;top:0" width="1" height="1"><polygon points="2362,540.3 2373.500,530.8 2373.5,549.8" fill="#7b7b7e" stroke="#7b7b7e" stroke-width="1.5" stroke-linejoin="round"/></svg>
<svg style="left:0;top:0" width="1" height="1"><polygon points="2362,638.2 2373.500,628.7 2373.5,647.7" fill="#7b7b7e" stroke="#7b7b7e" stroke-width="1.5" stroke-linejoin="round"/></svg>
<svg style="left:0;top:0" width="1" height="1"><polygon points="2362,737.3 2373.500,727.8 2373.5,746.8" fill="#7b7b7e" stroke="#7b7b7e" stroke-width="1.5" stroke-linejoin="round"/></svg>
<div class="abs" style="left:2351px;top:926.700px;width:489.2px;height:2px;background:#878791"></div>
<div class="abs" style="left:2841px;top:273.5px;width:11.5px;height:515px;border-radius:6px;background:#7e7e80"></div>
<div class="abs" style="left:1071px;top:635px;width:754px;height:294px;border-radius:21px;background:#fff;box-shadow:0 8px 30px rgba(0,0,0,.18),0 0 2px rgba(0,0,0,.12)"></div>
<svg style="left:0;top:0" width="1" height="1" fill="none" stroke="#17181c" stroke-width="3"><circle cx="1119.500" cy="684.3" r="13.600"/><ellipse cx="1119.5" cy="684.3" rx="6.2" ry="13.6"/><line x1="1106" y1="684.3" x2="1133" y2="684.3"/></svg>
<div class="abs" style="left:1540px;top:833px;width:143px;height:64px;border-radius:12px;background:#efeff0"></div>
<div class="abs" style="left:1699px;top:833px;width:94px;height:64px;border-radius:12px;background:#0060df"></div>
<span class="t fw" style="left:30.0px;top:89px;line-height:22px;font-size:19.4px;color:#a3a3a7;font-weight:400;letter-spacing:1.36px;">A Freshworks Company</span>
<span class="t nv" style="left:302.9px;top:51px;line-height:40px;font-size:35.7px;color:#a1a1a6;font-weight:400;letter-spacing:0.87px;">Infrastructure</span>
<span class="t nv" style="left:604.2px;top:51px;line-height:40px;font-size:35.7px;color:#a1a1a6;font-weight:400;letter-spacing:-0.84px;">Resources</span>
<span class="t nv" style="left:846.2px;top:51px;line-height:40px;font-size:35.7px;color:#a1a1a6;font-weight:400;letter-spacing:0.89px;">Applications</span>
<span class="t nv" style="left:1128.2px;top:51px;line-height:40px;font-size:35.7px;color:#a1a1a6;font-weight:400;letter-spacing:-0.11px;">Discovery</span>
<span class="t nv" style="left:1361.9px;top:51px;line-height:40px;font-size:35.7px;color:#a1a1a6;font-weight:400;letter-spacing:0.46px;">Analytics</span>
<span class="t nv" style="left:1587.2px;top:51px;line-height:40px;font-size:35.7px;color:#a1a1a6;font-weight:400;letter-spacing:1.10px;">Tools</span>
<span class="t nv" style="left:1753.2px;top:51px;line-height:40px;font-size:35.7px;color:#a1a1a6;font-weight:400;letter-spacing:0.13px;">Insights+</span>
<span class="t " style="left:2778.0px;top:48px;line-height:41px;font-size:36.5px;color:#1b1b1e;font-weight:400;letter-spacing:0.13px;">A</span>
<span class="t " style="left:38.0px;top:196px;line-height:36px;font-size:31.9px;color:#1c54a0;font-weight:400;letter-spacing:-1.08px;">Racks</span>
<span class="t " style="left:130.9px;top:196px;line-height:36px;font-size:31.9px;color:#4a5361;font-weight:400;letter-spacing:0.25px;">›</span>
<span class="t " style="left:150.3px;top:196px;line-height:36px;font-size:31.9px;color:#4a5361;font-weight:400;letter-spacing:-0.20px;">Rack Layout</span>
<span class="t " style="left:42.4px;top:307px;line-height:35px;font-size:31.2px;color:#111d49;font-weight:700;letter-spacing:-0.83px;">Edit mode is ON</span>
<span class="t " style="left:117.7px;top:385px;line-height:36px;font-size:31.7px;color:#9fa0a6;font-weight:400;letter-spacing:-1.69px;">Turn OFF</span>
<span class="t " style="left:42.1px;top:481px;line-height:35px;font-size:31.4px;color:#111d49;font-weight:700;letter-spacing:-1.26px;">Rack Details</span>
<span class="t " style="left:79.9px;top:593px;line-height:36px;font-size:31.6px;color:#9fa0a6;font-weight:400;letter-spacing:-0.75px;">Export PNG</span>
<span class="t " style="left:79.9px;top:691px;line-height:36px;font-size:31.6px;color:#9fa0a6;font-weight:400;letter-spacing:-1.00px;">Export SVG</span>
<span class="t " style="left:42.1px;top:787px;line-height:35px;font-size:31.2px;color:#111d49;font-weight:700;letter-spacing:-0.54px;">Nameplate Options</span>
<span class="t " style="left:84.0px;top:870px;line-height:34px;font-size:30.4px;color:#484b54;font-weight:400;letter-spacing:0.07px;">No nameplate</span>
<span class="t " style="left:84.0px;top:913px;line-height:34px;font-size:30.4px;color:#484b54;font-weight:400;letter-spacing:-0.17px;">Device Name</span>
<span class="t " style="left:84.0px;top:955px;line-height:34px;font-size:30.4px;color:#484b54;font-weight:400;letter-spacing:-0.14px;">Display the asset tag</span>
<span class="t " style="left:84.0px;top:998px;line-height:34px;font-size:30.4px;color:#484b54;font-weight:400;letter-spacing:-0.09px;">Display the serial number</span>
<span class="t " style="left:41.9px;top:1065px;line-height:35px;font-size:31.3px;color:#111d49;font-weight:700;letter-spacing:-0.74px;">Add Device</span>
<span class="t " style="left:41.9px;top:1150px;line-height:35px;font-size:31.3px;color:#484b54;font-weight:400;letter-spacing:-0.83px;">Search a device:</span>
<span class="t " style="left:41.9px;top:1281px;line-height:35px;font-size:31.2px;color:#484b54;font-weight:400;letter-spacing:-0.49px;">Select a location:</span>
<span class="t " style="left:761.4px;top:306px;line-height:36px;font-size:32.3px;color:#111d49;font-weight:700;letter-spacing:-1.87px;">Zoom:</span>
<span class="t " style="left:866.4px;top:306px;line-height:36px;font-size:32.3px;color:#1c54a0;font-weight:400;letter-spacing:-0.43px;">%100</span>
<span class="t " style="left:2409.0px;top:273px;line-height:36px;font-size:32.3px;color:#4a5462;font-weight:400;letter-spacing:-0.82px;">Use this screen to configure</span>
<span class="t " style="left:2360.4px;top:316px;line-height:36px;font-size:32.3px;color:#4a5462;font-weight:400;letter-spacing:-0.69px;">the current location rackables</span>
<span class="t " style="left:2360.4px;top:360px;line-height:36px;font-size:32.3px;color:#4a5462;font-weight:400;letter-spacing:-1.23px;">Devices, Assets and Power Units</span>
<span class="t " style="left:2360.4px;top:403px;line-height:36px;font-size:32.3px;color:#4a5462;font-weight:400;letter-spacing:0.35px;">for</span>
<span class="t " style="left:2397.9px;top:469px;line-height:36px;font-size:31.9px;color:#1c54a0;font-weight:400;letter-spacing:-1.04px;">Tips</span>
<span class="t " style="left:2410.1px;top:523px;line-height:36px;font-size:32.3px;color:#4a5462;font-weight:400;letter-spacing:-1.04px;">Select or hover over an</span>
<span class="t " style="left:2361.6px;top:566px;line-height:36px;font-size:32.3px;color:#4a5462;font-weight:400;letter-spacing:-0.95px;">element to see details.</span>
<span class="t " style="left:2410.7px;top:622px;line-height:36px;font-size:32.3px;color:#4a5462;font-weight:400;letter-spacing:-0.73px;">Drag items to move their</span>
<span class="t " style="left:2361.6px;top:665px;line-height:36px;font-size:32.3px;color:#4a5462;font-weight:400;letter-spacing:-0.83px;">position on the rack.</span>
<span class="t " style="left:2410.1px;top:720px;line-height:36px;font-size:32.3px;color:#4a5462;font-weight:400;letter-spacing:-1.02px;">Only physical devices where</span>
<span class="t " style="left:2361.6px;top:764px;line-height:36px;font-size:32.3px;color:#4a5462;font-weight:400;letter-spacing:-0.84px;">subtype attribute &#x27;Rack&#x27; is true and</span>
<span class="t " style="left:2361.6px;top:807px;line-height:36px;font-size:32.3px;color:#4a5462;font-weight:400;letter-spacing:-0.85px;">have hardware model with defined</span>
<span class="t " style="left:2361.6px;top:850px;line-height:36px;font-size:32.3px;color:#4a5462;font-weight:400;letter-spacing:-1.37px;">size can be Rack Mounted.</span>
<span class="t " style="left:2351.1px;top:964px;line-height:44px;font-size:39.6px;color:#1c54a0;font-weight:700;letter-spacing:-0.47px;">Device</span>
<span class="t " style="left:2350.9px;top:1046px;line-height:36px;font-size:31.6px;color:#1b1b1f;font-weight:700;letter-spacing:-1.48px;">Name:</span>
<span class="t " style="left:2448.4px;top:1046px;line-height:36px;font-size:31.6px;color:#1b1b1f;font-weight:400;letter-spacing:-2.07px;">LV_B_0</span>
<span class="t " style="left:2350.9px;top:1096px;line-height:36px;font-size:31.6px;color:#1b1b1f;font-weight:700;letter-spacing:-1.19px;">Type:</span>
<span class="t " style="left:2434.9px;top:1096px;line-height:36px;font-size:31.6px;color:#1b1b1f;font-weight:400;letter-spacing:-0.84px;">physical</span>
<span class="t " style="left:2350.9px;top:1145px;line-height:36px;font-size:31.6px;color:#1b1b1f;font-weight:700;letter-spacing:-1.43px;">Subtype:</span>
<span class="t " style="left:2482.7px;top:1145px;line-height:36px;font-size:31.6px;color:#1b1b1f;font-weight:400;letter-spacing:-1.40px;">Rackable</span>
<span class="t " style="left:2350.9px;top:1194px;line-height:36px;font-size:31.6px;color:#1b1b1f;font-weight:700;letter-spacing:-1.45px;">In Service:</span>
<span class="t " style="left:2502.3px;top:1194px;line-height:36px;font-size:31.6px;color:#1b1b1f;font-weight:400;letter-spacing:-1.85px;">Yes</span>
<span class="t " style="left:2350.9px;top:1243px;line-height:36px;font-size:31.6px;color:#1b1b1f;font-weight:700;letter-spacing:-1.41px;">Service Level:</span>
<span class="t " style="left:2552.0px;top:1243px;line-height:36px;font-size:31.6px;color:#1b1b1f;font-weight:400;letter-spacing:-0.99px;">Retire</span>
<span class="t " style="left:2350.9px;top:1292px;line-height:36px;font-size:31.6px;color:#1b1b1f;font-weight:700;letter-spacing:-1.26px;">Serial Number:</span>
<span class="t " style="left:2566.1px;top:1292px;line-height:36px;font-size:31.6px;color:#1b1b1f;font-weight:400;letter-spacing:-1.35px;">SGH029P4F8</span>
<span class="t " style="left:2350.9px;top:1341px;line-height:36px;font-size:31.6px;color:#1b1b1f;font-weight:700;letter-spacing:-0.99px;">Hardware Model:</span>
<span class="t " style="left:2597.8px;top:1341px;line-height:36px;font-size:31.6px;color:#1b1b1f;font-weight:400;letter-spacing:-1.13px;">BladeSystem</span>
<span class="t " style="left:2350.9px;top:1379px;line-height:36px;font-size:31.6px;color:#1b1b1f;font-weight:400;letter-spacing:-0.53px;">c7000 Enclosure G2</span>
<span class="t " style="left:1142.1px;top:667px;line-height:32px;font-size:28.4px;color:#17181c;font-weight:700;letter-spacing:-0.14px;">do-3447.device42.net</span>
<span class="t " style="left:1102.3px;top:738px;line-height:31px;font-size:27.5px;color:#17181c;font-weight:400;letter-spacing:-0.05px;">All power and network connections will be removed.</span>
<span class="t " style="left:1102.3px;top:770px;line-height:31px;font-size:27.5px;color:#17181c;font-weight:400;letter-spacing:-0.33px;">Continue?</span>
<span class="t " style="left:1567.6px;top:848px;line-height:32px;font-size:28.4px;color:#17181c;font-weight:700;letter-spacing:-1.01px;">Cancel</span>
<span class="t " style="left:1726.1px;top:848px;line-height:32px;font-size:28.4px;color:#ffffff;font-weight:700;letter-spacing:-2.74px;">OK</span>

</div>
</body></html>
